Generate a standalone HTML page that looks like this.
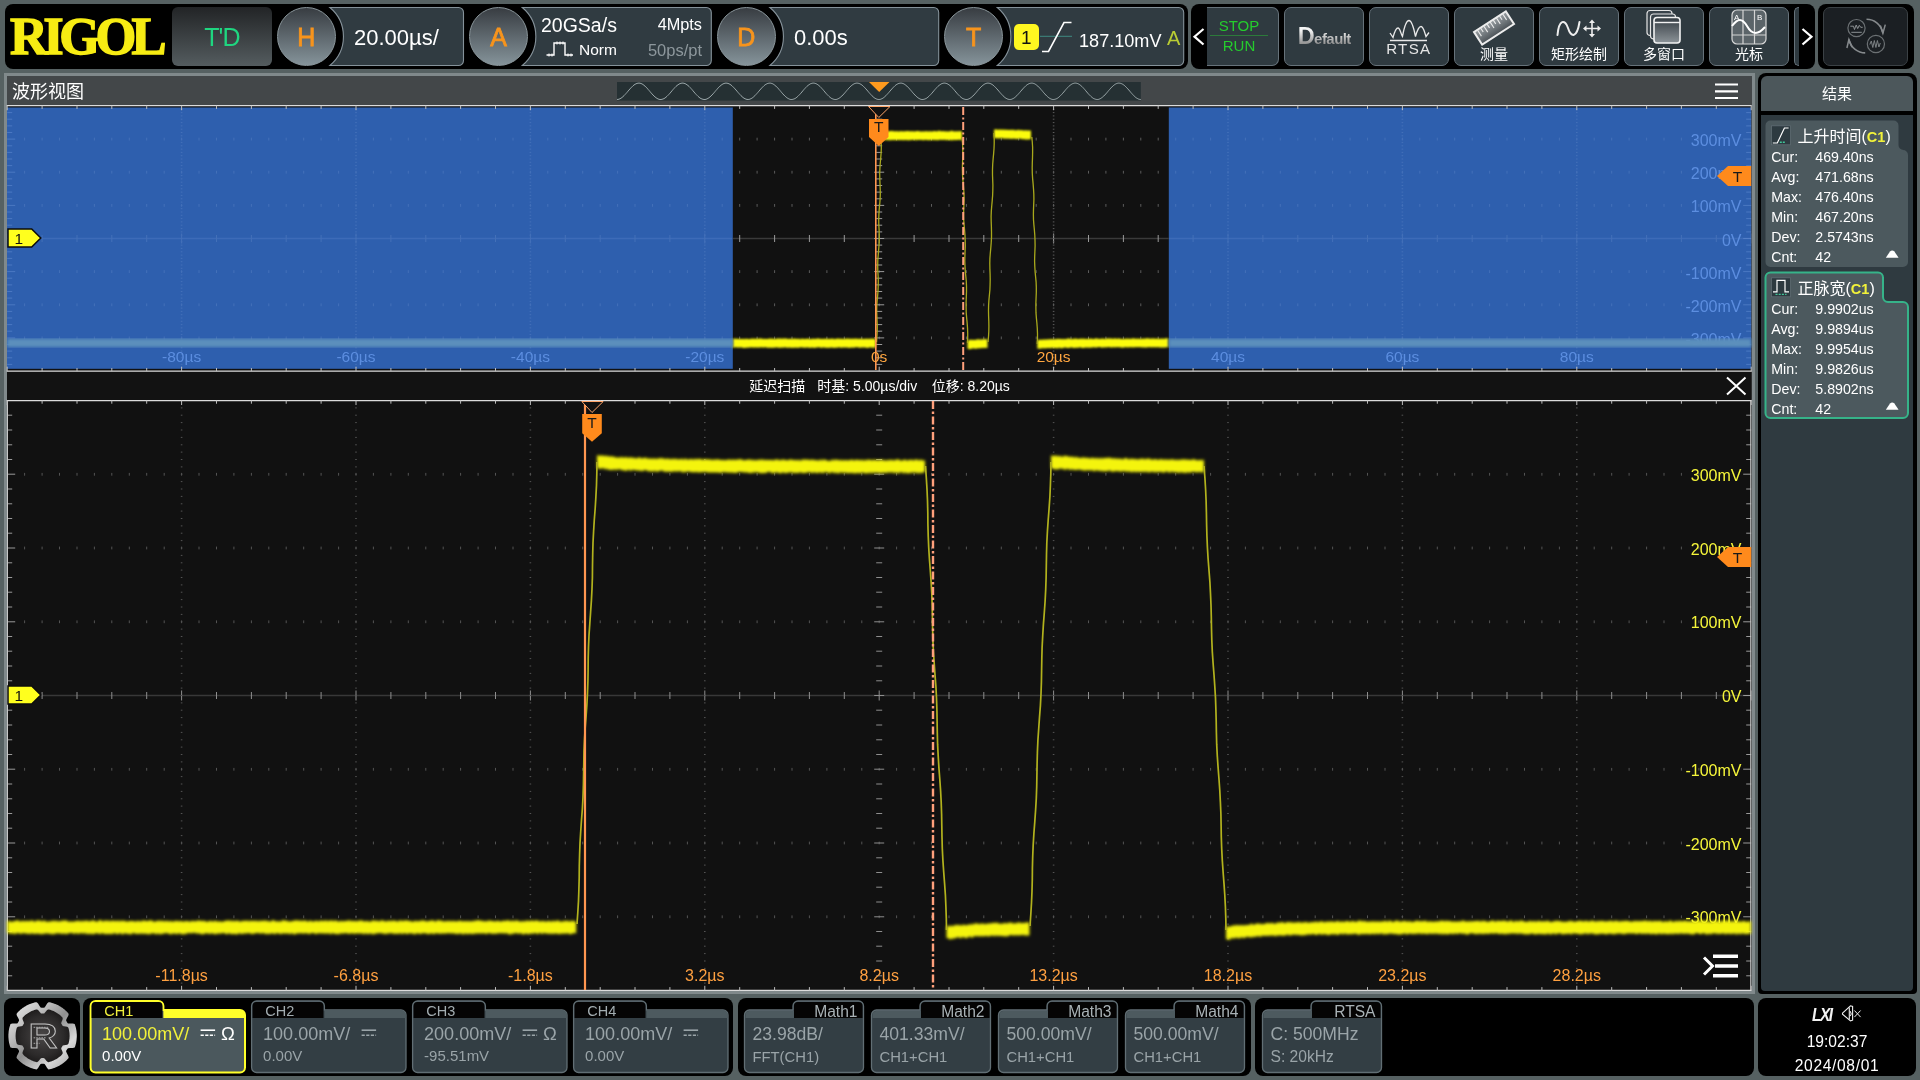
<!DOCTYPE html><html><head><meta charset="utf-8"><title>RIGOL</title><style>
*{box-sizing:border-box;margin:0;padding:0}
html,body{width:1920px;height:1080px;overflow:hidden;background:#566162;font-family:"Liberation Sans", "Noto Sans CJK SC", sans-serif;color:#fff}
.abs{position:absolute}
.bar{position:absolute;background:#000;border-radius:8px}
.knob{position:absolute;width:59px;height:59px;border-radius:50%;top:7px;background:linear-gradient(#383d42,#85939a);border:1px solid #8b979c;color:#f7941d;font-size:25px;line-height:59px;text-align:center;-webkit-text-stroke:0.8px #f7941d}
.tbtn{position:absolute;top:7px;height:59px;width:79.6px;background:#2f3a40;border:1px solid #66727a;border-radius:7px}
.tbtn .lbl{position:absolute;left:0;right:0;top:36px;text-align:center;font-size:14px;line-height:20px;color:#fff}
.t{position:absolute;white-space:nowrap;line-height:1}
.card{position:absolute}
</style></head><body><div id="root" style="position:absolute;left:0;top:0;width:1920px;height:1080px;will-change:transform"><div class="bar" style="left:4.5px;top:4px;width:1183px;height:64.5px"></div>
<div class="bar" style="left:1191px;top:4px;width:624px;height:64.5px"></div>
<div class="bar" style="left:1818px;top:4px;width:95.5px;height:64.5px"></div>
<div class="t" style="left:10px;top:10px;font-family:'Liberation Serif',serif;font-weight:bold;font-size:52.5px;color:#f7ec13;letter-spacing:-4.6px;-webkit-text-stroke:1.4px #f7ec13">RIGOL</div>
<div class="abs" style="left:172px;top:7px;width:100px;height:59px;border-radius:6px;background:linear-gradient(#222426,#545c5f)"></div>
<div class="t" style="left:172px;width:100px;text-align:center;top:24.5px;font-size:25px;color:#1fd680;letter-spacing:-0.8px">T'D</div>
<svg class="abs" style="left:0;top:0" width="1920" height="72"><path d="M329.9,7.5 H458.5 a5,5 0 0 1 5,5 V60.5 a5,5 0 0 1 -5,5 H329.9 A37.8 37.8 0 0 0 329.9 7.5 Z" fill="#303b41" stroke="#85929a" stroke-width="1.1"/><path d="M522.3,7.5 H706.3 a5,5 0 0 1 5,5 V60.5 a5,5 0 0 1 -5,5 H522.3 A37.8 37.8 0 0 0 522.3 7.5 Z" fill="#303b41" stroke="#85929a" stroke-width="1.1"/><path d="M769.9,7.5 H933.7 a5,5 0 0 1 5,5 V60.5 a5,5 0 0 1 -5,5 H769.9 A37.8 37.8 0 0 0 769.9 7.5 Z" fill="#303b41" stroke="#85929a" stroke-width="1.1"/><path d="M997.3,7.5 H1178.7 a5,5 0 0 1 5,5 V60.5 a5,5 0 0 1 -5,5 H997.3 A37.8 37.8 0 0 0 997.3 7.5 Z" fill="#303b41" stroke="#85929a" stroke-width="1.1"/></svg>
<div class="knob" style="left:276.8px">H</div>
<div class="knob" style="left:469.2px">A</div>
<div class="knob" style="left:716.8px">D</div>
<div class="knob" style="left:944.2px">T</div>
<div class="t" style="left:354px;top:27px;font-size:22px">20.00µs/</div>
<div class="t" style="left:541px;top:15.7px;font-size:19.5px">20GSa/s</div>
<div class="t" style="left:579px;top:41.5px;font-size:15.5px">Norm</div>
<div class="t" style="left:630px;width:72px;text-align:right;top:15.5px;font-size:16.3px">4Mpts</div>
<div class="t" style="left:620px;width:82px;text-align:right;top:41.5px;font-size:16.5px;color:#8d979c">50ps/pt</div>
<svg class="abs" style="left:544px;top:40px" width="34" height="20"><path d="M2.5,15 H10 V3 H21 V15 H29" fill="none" stroke="#fff" stroke-width="1.4"/><path d="M5,13.5v3M8,13.5v3M13,1.5v3M16,1.5v3M19,1.5v3M24,13.5v3M27,13.5v3" stroke="#fff" stroke-width="1"/></svg>
<div class="t" style="left:794px;top:27px;font-size:22px">0.00s</div>
<div class="abs" style="left:1013.5px;top:23.5px;width:25.5px;height:26px;border-radius:5px;background:#fff720"></div>
<div class="t" style="left:1013.5px;width:25.5px;text-align:center;top:27.5px;font-size:19px;color:#111">1</div>
<svg class="abs" style="left:1040px;top:18px" width="36" height="38"><path d="M0,18.3H32" stroke="#3f8a80" stroke-width="1"/><path d="M2,33.5 H8.5 L24,4.5 H31.5" fill="none" stroke="#fff" stroke-width="1.6"/></svg>
<div class="t" style="left:1079px;top:32px;font-size:18.1px">187.10mV</div>
<div class="t" style="left:1167px;top:28px;font-size:20px;color:#b9cc33">A</div>
<svg class="abs" style="left:1192px;top:26px" width="14" height="22"><path d="M11.5,3 L2.5,10.7 L11.5,18.5" fill="none" stroke="#fff" stroke-width="2.2"/></svg>
<div class="abs" style="left:1206.5px;top:7px;width:72.5px;height:59px;background:#2f3a40;border:1px solid #66727a;border-left:none;border-radius:0 7px 7px 0"></div>
<div class="t" style="left:1206.5px;width:65px;text-align:center;top:17.5px;font-size:15px;color:#25cc2d">STOP</div>
<div class="t" style="left:1206.5px;width:65px;text-align:center;top:37.5px;font-size:15px;color:#25cc2d">RUN</div>
<div class="abs" style="left:1210px;top:35px;width:58px;height:1px;background:#2c7a3a"></div>
<div class="tbtn" style="left:1284.2px"></div>
<div class="t" style="left:1297.7px;top:22px;font-weight:bold;font-size:15px;letter-spacing:-0.55px;background:linear-gradient(#f4f4f4 30%,#8d8d8d 80%);-webkit-background-clip:text;background-clip:text;color:transparent;height:28px;line-height:28px"><span style="font-size:23.5px">D</span>efault</div>
<div class="tbtn" style="left:1369.2px"></div>
<svg class="abs" style="left:1387.2px;top:16px" width="46" height="28"><path d="M3,17 L6,21.5 C8,14 9.5,12 11,12 C13,12 14,18 15.5,20.5 C17,12 19,4.5 22,4.5 C25,4.5 27,13 28.5,20.5 C30,15 32,10.5 34,10.5 C36.5,10.5 37.5,16 39,20.5 L42,16.5" fill="none" stroke="#e8e8e8" stroke-width="1.3"/><path d="M3,24.5H40" stroke="#e8e8e8" stroke-width="1.3"/></svg>
<div class="t" style="left:1369.2px;width:79.6px;text-align:center;top:41.5px;font-size:14px;letter-spacing:1.2px;color:#e6e6e6;transform:scaleX(1.08)">RTSA</div>
<div class="tbtn" style="left:1454.2px"><div class="lbl">测量</div></div>
<svg class="abs" style="left:1468.2px;top:8px" width="52" height="40"><defs><linearGradient id="rg" x1="0" y1="0" x2="0" y2="1"><stop offset="0" stop-color="#9aa0a4"/><stop offset="1" stop-color="#4a5156"/></linearGradient></defs><g transform="translate(26,20) rotate(-33)"><rect x="-19" y="-7.5" width="38" height="15" fill="url(#rg)" stroke="#ececec" stroke-width="2"/><path d="M-15,-7v7M-11.2,-7v4.5M-7.5,-7v7M-3.7,-7v4.5M0,-7v7M3.7,-7v4.5M7.5,-7v7M11.2,-7v4.5M15,-7v7" stroke="#ececec" stroke-width="1.1"/></g></svg>
<div class="tbtn" style="left:1539.2px"><div class="lbl">矩形绘制</div></div>
<svg class="abs" style="left:1553.2px;top:14px" width="54" height="28"><path d="M4.5,21 C6,5 12,5 15,14 C18,24 24,24 26.5,8" fill="none" stroke="#eee" stroke-width="2" stroke-linecap="round"/><g stroke="#eee" stroke-width="1.6" fill="#eee"><path d="M39,8V21M32.5,14.5H45.5" fill="none"/><path d="M39,5.5l3,3.5h-6zM39,23.5l3,-3.5h-6zM30,14.5l3.5,-3v6zM48,14.5l-3.5,-3v6z" stroke="none"/></g></svg>
<div class="tbtn" style="left:1624.2px"><div class="lbl">多窗口</div></div>
<svg class="abs" style="left:1644.2px;top:8px" width="40" height="38"><defs><linearGradient id="wg" x1="0" y1="0" x2="0" y2="1"><stop offset="0" stop-color="#343c42"/><stop offset="1" stop-color="#8c9398"/></linearGradient></defs><rect x="3" y="2.5" width="25" height="25" rx="3" fill="#39434a" stroke="#e6e6e6" stroke-width="1.2"/><rect x="6.5" y="6" width="25" height="25" rx="3" fill="#39434a" stroke="#e6e6e6" stroke-width="1.2"/><rect x="10" y="9.5" width="26" height="25.5" rx="3" fill="url(#wg)" stroke="#f2f2f2" stroke-width="1.6"/><path d="M10,14.5H36" stroke="#f2f2f2" stroke-width="1.4"/></svg>
<div class="tbtn" style="left:1709.2px"><div class="lbl">光标</div></div>
<svg class="abs" style="left:1730.2px;top:8px" width="40" height="38"><rect x="2" y="2" width="34" height="34" rx="5" fill="#5b6469" stroke="#d9d9d9" stroke-width="1.2"/><path d="M13,2V36M24.5,2V36M2,27H36" stroke="#d4d4d4" stroke-width="1.2"/><path d="M2,18 C8,10 12,10 17,18 C22,27 28,27 35,19" fill="none" stroke="#fff" stroke-width="2"/><text x="4" y="11.5" font-size="8" fill="#fff" font-family="Liberation Sans, sans-serif">A</text><text x="27" y="11.5" font-size="8" fill="#fff" font-family="Liberation Sans, sans-serif">B</text></svg>
<div class="abs" style="left:1794.2px;top:7px;width:5px;height:59px;background:#2f3a40;border:1px solid #66727a;border-right:none;border-radius:7px 0 0 7px"></div>
<svg class="abs" style="left:1800px;top:26px" width="14" height="22"><path d="M2.5,3 L11.5,10.7 L2.5,18.5" fill="none" stroke="#fff" stroke-width="2.2"/></svg>
<div class="abs" style="left:1822.7px;top:7px;width:85.6px;height:59px;background:#1b1f23;border:1px solid #3b4145;border-radius:7px"></div>
<svg class="abs" style="left:1840px;top:14px" width="52" height="46" fill="none" stroke="#6c7174" stroke-width="1.2"><circle cx="16.5" cy="14.1" r="8.6"/><circle cx="35.9" cy="30" r="8.6"/><path d="M10.3,12.2h3.2l1,3.3 1.7,-4.5 1.5,3.6 1.6,-3.3 1.4,2h2M11.3,18.3h10.5" stroke-width="1" stroke="#8d9194"/><path d="M29.8,30.5l1.5,-3.5 1.5,6.5 1.5,-7 1.6,7 1.5,-7 1.5,6.5 1.4,-4" stroke-width="1" stroke="#7d8285"/><path d="M26.5,5.3 C34,5.3 41,10 43,19.3" stroke-width="1.6" stroke="#868a8d"/><path d="M40.3,11.6l2.6,7.7 2.4,-8.7" stroke-width="1.5" stroke="#868a8d"/><path d="M25.2,38.9 C18,38.9 11,34 8.7,25.5" stroke-width="1.6" stroke="#868a8d"/><path d="M6.9,34l2,-8.5 3.1,7.6" stroke-width="1.5" stroke="#868a8d"/></svg>
<div class="abs" style="left:3.6px;top:72.8px;width:1751px;height:921.7px;background:#80898b"></div>
<div class="abs" style="left:7px;top:76px;width:1744.5px;height:30px;background:#434749"></div>
<div class="t" style="left:12px;top:83px;font-size:18px;color:#fff">波形视图</div>
<svg class="abs" style="left:0;top:70px" width="1920" height="40" viewBox="0 70 1920 40"><rect x="617" y="82" width="523.8" height="18.6" fill="#253033"/><polyline points="617.0,99.5 618.0,99.4 619.0,99.2 620.0,98.7 621.0,98.2 622.0,97.5 623.0,96.6 624.0,95.7 625.0,94.6 626.0,93.5 627.0,92.4 628.0,91.2 629.0,90.0 630.0,88.9 631.0,87.8 632.0,86.8 633.0,85.8 634.0,85.0 635.0,84.3 636.0,83.8 637.0,83.4 638.0,83.2 639.0,83.1 640.0,83.2 641.0,83.5 642.0,83.9 643.0,84.5 644.0,85.3 645.0,86.1 646.0,87.1 647.0,88.1 648.0,89.3 649.0,90.4 650.0,91.6 651.0,92.8 652.0,93.9 653.0,95.0 654.0,96.0 655.0,96.9 656.0,97.7 657.0,98.4 658.0,98.9 659.0,99.3 660.0,99.5 661.0,99.5 662.0,99.3 663.0,99.0 664.0,98.6 665.0,98.0 666.0,97.2 667.0,96.3 668.0,95.3 669.0,94.3 670.0,93.2 671.0,92.0 672.0,90.8 673.0,89.6 674.0,88.5 675.0,87.4 676.0,86.4 677.0,85.5 678.0,84.8 679.0,84.1 680.0,83.6 681.0,83.3 682.0,83.1 683.0,83.1 684.0,83.3 685.0,83.6 686.0,84.1 687.0,84.8 688.0,85.5 689.0,86.4 690.0,87.4 691.0,88.5 692.0,89.6 693.0,90.8 694.0,92.0 695.0,93.2 696.0,94.3 697.0,95.3 698.0,96.3 699.0,97.2 700.0,98.0 701.0,98.6 702.0,99.0 703.0,99.3 704.0,99.5 705.0,99.5 706.0,99.3 707.0,98.9 708.0,98.4 709.0,97.7 710.0,96.9 711.0,96.0 712.0,95.0 713.0,93.9 714.0,92.8 715.0,91.6 716.0,90.4 717.0,89.3 718.0,88.1 719.0,87.1 720.0,86.1 721.0,85.3 722.0,84.5 723.0,83.9 724.0,83.5 725.0,83.2 726.0,83.1 727.0,83.2 728.0,83.4 729.0,83.8 730.0,84.3 731.0,85.0 732.0,85.8 733.0,86.8 734.0,87.8 735.0,88.9 736.0,90.0 737.0,91.2 738.0,92.4 739.0,93.5 740.0,94.6 741.0,95.7 742.0,96.6 743.0,97.5 744.0,98.2 745.0,98.7 746.0,99.2 747.0,99.4 748.0,99.5 748.9,99.4 749.9,99.2 750.9,98.7 751.9,98.2 752.9,97.5 753.9,96.6 754.9,95.7 755.9,94.6 756.9,93.5 757.9,92.4 758.9,91.2 759.9,90.0 760.9,88.9 761.9,87.8 762.9,86.8 763.9,85.8 764.9,85.0 765.9,84.3 766.9,83.8 767.9,83.4 768.9,83.2 769.9,83.1 770.9,83.2 771.9,83.5 772.9,83.9 773.9,84.5 774.9,85.3 775.9,86.1 776.9,87.1 777.9,88.1 778.9,89.3 779.9,90.4 780.9,91.6 781.9,92.8 782.9,93.9 783.9,95.0 784.9,96.0 785.9,96.9 786.9,97.7 787.9,98.4 788.9,98.9 789.9,99.3 790.9,99.5 791.9,99.5 792.9,99.3 793.9,99.0 794.9,98.6 795.9,98.0 796.9,97.2 797.9,96.3 798.9,95.3 799.9,94.3 800.9,93.2 801.9,92.0 802.9,90.8 803.9,89.6 804.9,88.5 805.9,87.4 806.9,86.4 807.9,85.5 808.9,84.8 809.9,84.1 810.9,83.6 811.9,83.3 812.9,83.1 813.9,83.1 814.9,83.3 815.9,83.6 816.9,84.1 817.9,84.8 818.9,85.5 819.9,86.4 820.9,87.4 821.9,88.5 822.9,89.6 823.9,90.8 824.9,92.0 825.9,93.2 826.9,94.3 827.9,95.3 828.9,96.3 829.9,97.2 830.9,98.0 831.9,98.6 832.9,99.0 833.9,99.3 834.9,99.5 835.9,99.5 836.9,99.3 837.9,98.9 838.9,98.4 839.9,97.7 840.9,96.9 841.9,96.0 842.9,95.0 843.9,93.9 844.9,92.8 845.9,91.6 846.9,90.4 847.9,89.3 848.9,88.1 849.9,87.1 850.9,86.1 851.9,85.3 852.9,84.5 853.9,83.9 854.9,83.5 855.9,83.2 856.9,83.1 857.9,83.2 858.9,83.4 859.9,83.8 860.9,84.3 861.9,85.0 862.9,85.8 863.9,86.8 864.9,87.8 865.9,88.9 866.9,90.0 867.9,91.2 868.9,92.4 869.9,93.5 870.9,94.6 871.9,95.7 872.9,96.6 873.9,97.5 874.9,98.2 875.9,98.7 876.9,99.2 877.9,99.4 878.9,99.5 879.9,99.4 880.9,99.2 881.9,98.7 882.9,98.2 883.9,97.5 884.9,96.6 885.9,95.7 886.9,94.6 887.9,93.5 888.9,92.4 889.9,91.2 890.9,90.0 891.9,88.9 892.9,87.8 893.9,86.8 894.9,85.8 895.9,85.0 896.9,84.3 897.9,83.8 898.9,83.4 899.9,83.2 900.9,83.1 901.9,83.2 902.9,83.5 903.9,83.9 904.9,84.5 905.9,85.3 906.9,86.1 907.9,87.1 908.9,88.1 909.9,89.3 910.9,90.4 911.9,91.6 912.9,92.8 913.9,93.9 914.9,95.0 915.9,96.0 916.9,96.9 917.9,97.7 918.9,98.4 919.9,98.9 920.9,99.3 921.9,99.5 922.9,99.5 923.9,99.3 924.9,99.0 925.9,98.6 926.9,98.0 927.9,97.2 928.9,96.3 929.9,95.3 930.9,94.3 931.9,93.2 932.9,92.0 933.9,90.8 934.9,89.6 935.9,88.5 936.9,87.4 937.9,86.4 938.9,85.5 939.9,84.8 940.9,84.1 941.9,83.6 942.9,83.3 943.9,83.1 944.9,83.1 945.9,83.3 946.9,83.6 947.9,84.1 948.9,84.8 949.9,85.5 950.9,86.4 951.9,87.4 952.9,88.5 953.9,89.6 954.9,90.8 955.9,92.0 956.9,93.2 957.9,94.3 958.9,95.3 959.9,96.3 960.9,97.2 961.9,98.0 962.9,98.6 963.9,99.0 964.9,99.3 965.9,99.5 966.9,99.5 967.9,99.3 968.9,98.9 969.9,98.4 970.9,97.7 971.9,96.9 972.9,96.0 973.9,95.0 974.9,93.9 975.9,92.8 976.9,91.6 977.9,90.4 978.9,89.3 979.9,88.1 980.9,87.1 981.9,86.1 982.9,85.3 983.9,84.5 984.9,83.9 985.9,83.5 986.9,83.2 987.9,83.1 988.9,83.2 989.9,83.4 990.9,83.8 991.9,84.3 992.9,85.0 993.9,85.8 994.9,86.8 995.9,87.8 996.9,88.9 997.9,90.0 998.9,91.2 999.9,92.4 1000.9,93.5 1001.9,94.6 1002.9,95.7 1003.9,96.6 1004.9,97.5 1005.9,98.2 1006.9,98.7 1007.9,99.2 1008.9,99.4 1009.8,99.5 1010.8,99.4 1011.8,99.2 1012.8,98.7 1013.8,98.2 1014.8,97.5 1015.8,96.6 1016.8,95.7 1017.8,94.6 1018.8,93.5 1019.8,92.4 1020.8,91.2 1021.8,90.0 1022.8,88.9 1023.8,87.8 1024.8,86.8 1025.8,85.8 1026.8,85.0 1027.8,84.3 1028.8,83.8 1029.8,83.4 1030.8,83.2 1031.8,83.1 1032.8,83.2 1033.8,83.5 1034.8,83.9 1035.8,84.5 1036.8,85.3 1037.8,86.1 1038.8,87.1 1039.8,88.1 1040.8,89.3 1041.8,90.4 1042.8,91.6 1043.8,92.8 1044.8,93.9 1045.8,95.0 1046.8,96.0 1047.8,96.9 1048.8,97.7 1049.8,98.4 1050.8,98.9 1051.8,99.3 1052.8,99.5 1053.8,99.5 1054.8,99.3 1055.8,99.0 1056.8,98.6 1057.8,98.0 1058.8,97.2 1059.8,96.3 1060.8,95.3 1061.8,94.3 1062.8,93.2 1063.8,92.0 1064.8,90.8 1065.8,89.6 1066.8,88.5 1067.8,87.4 1068.8,86.4 1069.8,85.5 1070.8,84.8 1071.8,84.1 1072.8,83.6 1073.8,83.3 1074.8,83.1 1075.8,83.1 1076.8,83.3 1077.8,83.6 1078.8,84.1 1079.8,84.8 1080.8,85.5 1081.8,86.4 1082.8,87.4 1083.8,88.5 1084.8,89.6 1085.8,90.8 1086.8,92.0 1087.8,93.2 1088.8,94.3 1089.8,95.3 1090.8,96.3 1091.8,97.2 1092.8,98.0 1093.8,98.6 1094.8,99.0 1095.8,99.3 1096.8,99.5 1097.8,99.5 1098.8,99.3 1099.8,98.9 1100.8,98.4 1101.8,97.7 1102.8,96.9 1103.8,96.0 1104.8,95.0 1105.8,93.9 1106.8,92.8 1107.8,91.6 1108.8,90.4 1109.8,89.3 1110.8,88.1 1111.8,87.1 1112.8,86.1 1113.8,85.3 1114.8,84.5 1115.8,83.9 1116.8,83.5 1117.8,83.2 1118.8,83.1 1119.8,83.2 1120.8,83.4 1121.8,83.8 1122.8,84.3 1123.8,85.0 1124.8,85.8 1125.8,86.8 1126.8,87.8 1127.8,88.9 1128.8,90.0 1129.8,91.2 1130.8,92.4 1131.8,93.5 1132.8,94.6 1133.8,95.7 1134.8,96.6 1135.8,97.5 1136.8,98.2 1137.8,98.7 1138.8,99.2 1139.8,99.4 1140.8,99.5" fill="none" stroke="#9ba7a9" stroke-width="1"/><path d="M869,82 H889.5 L879.2,92 Z" fill="#ff9a1e"/><path d="M1715,84.5h23M1715,91.3h23M1715,98h23" stroke="#fff" stroke-width="2.2"/></svg>
<svg class="abs" style="left:0;top:100px;font-family:'Liberation Sans','Noto Sans CJK SC',sans-serif" width="1760" height="896" viewBox="0 100 1760 896"><defs><filter id="blur1" x="-1%" y="-5%" width="102%" height="110%"><feGaussianBlur stdDeviation="1.5"/></filter><filter id="blur03" x="-20%" y="-5%" width="140%" height="110%"><feGaussianBlur stdDeviation="0.45"/></filter><filter id="blur05" x="-1%" y="-5%" width="102%" height="110%"><feGaussianBlur stdDeviation="0.85"/></filter></defs><rect x="7" y="105" width="1744.5" height="886" fill="#111"/><rect x="7" y="107.5" width="725.8" height="261.3" fill="#2e5fae"/><rect x="1168.8" y="107.5" width="582.4000000000001" height="261.3" fill="#2e5fae"/><path d="M739.7,137.7v2.8M757.1,137.7v2.8M774.6,137.7v2.8M792.0,137.7v2.8M809.4,137.7v2.8M826.9,137.7v2.8M844.3,137.7v2.8M861.8,137.7v2.8M879.2,137.7v2.8M896.6,137.7v2.8M914.1,137.7v2.8M931.5,137.7v2.8M949.0,137.7v2.8M966.4,137.7v2.8M983.8,137.7v2.8M1001.3,137.7v2.8M1018.7,137.7v2.8M1036.2,137.7v2.8M1053.6,137.7v2.8M1071.0,137.7v2.8M1088.5,137.7v2.8M1105.9,137.7v2.8M1123.4,137.7v2.8M1140.8,137.7v2.8M1158.2,137.7v2.8" stroke="#5c5c5c" stroke-width="1"/><path d="M739.7,170.8v2.8M757.1,170.8v2.8M774.6,170.8v2.8M792.0,170.8v2.8M809.4,170.8v2.8M826.9,170.8v2.8M844.3,170.8v2.8M861.8,170.8v2.8M879.2,170.8v2.8M896.6,170.8v2.8M914.1,170.8v2.8M931.5,170.8v2.8M949.0,170.8v2.8M966.4,170.8v2.8M983.8,170.8v2.8M1001.3,170.8v2.8M1018.7,170.8v2.8M1036.2,170.8v2.8M1053.6,170.8v2.8M1071.0,170.8v2.8M1088.5,170.8v2.8M1105.9,170.8v2.8M1123.4,170.8v2.8M1140.8,170.8v2.8M1158.2,170.8v2.8" stroke="#5c5c5c" stroke-width="1"/><path d="M739.7,204.0v2.8M757.1,204.0v2.8M774.6,204.0v2.8M792.0,204.0v2.8M809.4,204.0v2.8M826.9,204.0v2.8M844.3,204.0v2.8M861.8,204.0v2.8M879.2,204.0v2.8M896.6,204.0v2.8M914.1,204.0v2.8M931.5,204.0v2.8M949.0,204.0v2.8M966.4,204.0v2.8M983.8,204.0v2.8M1001.3,204.0v2.8M1018.7,204.0v2.8M1036.2,204.0v2.8M1053.6,204.0v2.8M1071.0,204.0v2.8M1088.5,204.0v2.8M1105.9,204.0v2.8M1123.4,204.0v2.8M1140.8,204.0v2.8M1158.2,204.0v2.8" stroke="#5c5c5c" stroke-width="1"/><path d="M732.8,238.5H1168.8" stroke="#3a3a3a" stroke-width="1.6"/><path d="M739.7,235.0v7.0M774.6,235.0v7.0M809.4,235.0v7.0M844.3,235.0v7.0M879.2,233.5v10M914.1,235.0v7.0M949.0,235.0v7.0M983.8,235.0v7.0M1018.7,235.0v7.0M1053.6,233.5v10M1088.5,235.0v7.0M1123.4,235.0v7.0M1158.2,235.0v7.0" stroke="#9a9a9a" stroke-width="1"/><path d="M739.7,270.2v2.8M757.1,270.2v2.8M774.6,270.2v2.8M792.0,270.2v2.8M809.4,270.2v2.8M826.9,270.2v2.8M844.3,270.2v2.8M861.8,270.2v2.8M879.2,270.2v2.8M896.6,270.2v2.8M914.1,270.2v2.8M931.5,270.2v2.8M949.0,270.2v2.8M966.4,270.2v2.8M983.8,270.2v2.8M1001.3,270.2v2.8M1018.7,270.2v2.8M1036.2,270.2v2.8M1053.6,270.2v2.8M1071.0,270.2v2.8M1088.5,270.2v2.8M1105.9,270.2v2.8M1123.4,270.2v2.8M1140.8,270.2v2.8M1158.2,270.2v2.8" stroke="#5c5c5c" stroke-width="1"/><path d="M739.7,303.4v2.8M757.1,303.4v2.8M774.6,303.4v2.8M792.0,303.4v2.8M809.4,303.4v2.8M826.9,303.4v2.8M844.3,303.4v2.8M861.8,303.4v2.8M879.2,303.4v2.8M896.6,303.4v2.8M914.1,303.4v2.8M931.5,303.4v2.8M949.0,303.4v2.8M966.4,303.4v2.8M983.8,303.4v2.8M1001.3,303.4v2.8M1018.7,303.4v2.8M1036.2,303.4v2.8M1053.6,303.4v2.8M1071.0,303.4v2.8M1088.5,303.4v2.8M1105.9,303.4v2.8M1123.4,303.4v2.8M1140.8,303.4v2.8M1158.2,303.4v2.8" stroke="#5c5c5c" stroke-width="1"/><path d="M739.7,336.5v2.8M757.1,336.5v2.8M774.6,336.5v2.8M792.0,336.5v2.8M809.4,336.5v2.8M826.9,336.5v2.8M844.3,336.5v2.8M861.8,336.5v2.8M879.2,336.5v2.8M896.6,336.5v2.8M914.1,336.5v2.8M931.5,336.5v2.8M949.0,336.5v2.8M966.4,336.5v2.8M983.8,336.5v2.8M1001.3,336.5v2.8M1018.7,336.5v2.8M1036.2,336.5v2.8M1053.6,336.5v2.8M1071.0,336.5v2.8M1088.5,336.5v2.8M1105.9,336.5v2.8M1123.4,336.5v2.8M1140.8,336.5v2.8M1158.2,336.5v2.8" stroke="#5c5c5c" stroke-width="1"/><path d="M876.2,112.6h6M876.2,119.2h6M876.2,125.9h6M876.2,132.5h6M874.2,139.1h10M876.2,145.8h6M876.2,152.4h6M876.2,159.0h6M876.2,165.6h6M874.2,172.2h10M876.2,178.9h6M876.2,185.5h6M876.2,192.1h6M876.2,198.8h6M874.2,205.4h10M876.2,212.0h6M876.2,218.6h6M876.2,225.2h6M876.2,231.9h6M874.2,238.5h10M876.2,245.1h6M876.2,251.8h6M876.2,258.4h6M876.2,265.0h6M874.2,271.6h10M876.2,278.2h6M876.2,284.9h6M876.2,291.5h6M876.2,298.1h6M874.2,304.8h10M876.2,311.4h6M876.2,318.0h6M876.2,324.6h6M876.2,331.2h6M874.2,337.9h10M876.2,344.5h6M876.2,351.1h6M876.2,357.8h6M876.2,364.4h6" stroke="#9a9a9a" stroke-width="1"/><path d="M1052.8,109.3h1.6M1052.8,112.6h1.6M1052.8,115.9h1.6M1052.8,119.2h1.6M1052.8,122.6h1.6M1052.8,125.9h1.6M1052.8,129.2h1.6M1052.8,132.5h1.6M1052.8,135.8h1.6M1052.8,139.1h1.6M1052.8,142.4h1.6M1052.8,145.8h1.6M1052.8,149.1h1.6M1052.8,152.4h1.6M1052.8,155.7h1.6M1052.8,159.0h1.6M1052.8,162.3h1.6M1052.8,165.6h1.6M1052.8,168.9h1.6M1052.8,172.2h1.6M1052.8,175.6h1.6M1052.8,178.9h1.6M1052.8,182.2h1.6M1052.8,185.5h1.6M1052.8,188.8h1.6M1052.8,192.1h1.6M1052.8,195.4h1.6M1052.8,198.8h1.6M1052.8,202.1h1.6M1052.8,205.4h1.6M1052.8,208.7h1.6M1052.8,212.0h1.6M1052.8,215.3h1.6M1052.8,218.6h1.6M1052.8,221.9h1.6M1052.8,225.2h1.6M1052.8,228.6h1.6M1052.8,231.9h1.6M1052.8,235.2h1.6M1052.8,238.5h1.6M1052.8,241.8h1.6M1052.8,245.1h1.6M1052.8,248.4h1.6M1052.8,251.8h1.6M1052.8,255.1h1.6M1052.8,258.4h1.6M1052.8,261.7h1.6M1052.8,265.0h1.6M1052.8,268.3h1.6M1052.8,271.6h1.6M1052.8,274.9h1.6M1052.8,278.2h1.6M1052.8,281.6h1.6M1052.8,284.9h1.6M1052.8,288.2h1.6M1052.8,291.5h1.6M1052.8,294.8h1.6M1052.8,298.1h1.6M1052.8,301.4h1.6M1052.8,304.8h1.6M1052.8,308.1h1.6M1052.8,311.4h1.6M1052.8,314.7h1.6M1052.8,318.0h1.6M1052.8,321.3h1.6M1052.8,324.6h1.6M1052.8,327.9h1.6M1052.8,331.2h1.6M1052.8,334.6h1.6M1052.8,337.9h1.6M1052.8,341.2h1.6M1052.8,344.5h1.6M1052.8,347.8h1.6M1052.8,351.1h1.6M1052.8,354.4h1.6M1052.8,357.8h1.6M1052.8,361.1h1.6M1052.8,364.4h1.6M1052.8,367.7h1.6" stroke="#5c5c5c" stroke-width="1"/><g opacity="0.13"><path d="M24.6,137.7v2.8M42.1,137.7v2.8M59.5,137.7v2.8M77.0,137.7v2.8M94.4,137.7v2.8M111.8,137.7v2.8M129.3,137.7v2.8M146.7,137.7v2.8M164.2,137.7v2.8M181.6,137.7v2.8M199.0,137.7v2.8M216.5,137.7v2.8M233.9,137.7v2.8M251.4,137.7v2.8M268.8,137.7v2.8M286.2,137.7v2.8M303.7,137.7v2.8M321.1,137.7v2.8M338.6,137.7v2.8M356.0,137.7v2.8M373.4,137.7v2.8M390.9,137.7v2.8M408.3,137.7v2.8M425.8,137.7v2.8M443.2,137.7v2.8M460.6,137.7v2.8M478.1,137.7v2.8M495.5,137.7v2.8M513.0,137.7v2.8M530.4,137.7v2.8M547.8,137.7v2.8M565.3,137.7v2.8M582.7,137.7v2.8M600.2,137.7v2.8M617.6,137.7v2.8M635.0,137.7v2.8M652.5,137.7v2.8M669.9,137.7v2.8M687.4,137.7v2.8M704.8,137.7v2.8M722.2,137.7v2.8" stroke="#cfe0ff" stroke-width="1"/><path d="M24.6,170.8v2.8M42.1,170.8v2.8M59.5,170.8v2.8M77.0,170.8v2.8M94.4,170.8v2.8M111.8,170.8v2.8M129.3,170.8v2.8M146.7,170.8v2.8M164.2,170.8v2.8M181.6,170.8v2.8M199.0,170.8v2.8M216.5,170.8v2.8M233.9,170.8v2.8M251.4,170.8v2.8M268.8,170.8v2.8M286.2,170.8v2.8M303.7,170.8v2.8M321.1,170.8v2.8M338.6,170.8v2.8M356.0,170.8v2.8M373.4,170.8v2.8M390.9,170.8v2.8M408.3,170.8v2.8M425.8,170.8v2.8M443.2,170.8v2.8M460.6,170.8v2.8M478.1,170.8v2.8M495.5,170.8v2.8M513.0,170.8v2.8M530.4,170.8v2.8M547.8,170.8v2.8M565.3,170.8v2.8M582.7,170.8v2.8M600.2,170.8v2.8M617.6,170.8v2.8M635.0,170.8v2.8M652.5,170.8v2.8M669.9,170.8v2.8M687.4,170.8v2.8M704.8,170.8v2.8M722.2,170.8v2.8" stroke="#cfe0ff" stroke-width="1"/><path d="M24.6,204.0v2.8M42.1,204.0v2.8M59.5,204.0v2.8M77.0,204.0v2.8M94.4,204.0v2.8M111.8,204.0v2.8M129.3,204.0v2.8M146.7,204.0v2.8M164.2,204.0v2.8M181.6,204.0v2.8M199.0,204.0v2.8M216.5,204.0v2.8M233.9,204.0v2.8M251.4,204.0v2.8M268.8,204.0v2.8M286.2,204.0v2.8M303.7,204.0v2.8M321.1,204.0v2.8M338.6,204.0v2.8M356.0,204.0v2.8M373.4,204.0v2.8M390.9,204.0v2.8M408.3,204.0v2.8M425.8,204.0v2.8M443.2,204.0v2.8M460.6,204.0v2.8M478.1,204.0v2.8M495.5,204.0v2.8M513.0,204.0v2.8M530.4,204.0v2.8M547.8,204.0v2.8M565.3,204.0v2.8M582.7,204.0v2.8M600.2,204.0v2.8M617.6,204.0v2.8M635.0,204.0v2.8M652.5,204.0v2.8M669.9,204.0v2.8M687.4,204.0v2.8M704.8,204.0v2.8M722.2,204.0v2.8" stroke="#cfe0ff" stroke-width="1"/><path d="M7.2,238.5H732.7" stroke="#9fc0ff" stroke-width="1.6"/><path d="M7.2,233.5v10M42.1,235.0v7.0M77.0,235.0v7.0M111.8,235.0v7.0M146.7,235.0v7.0M181.6,233.5v10M216.5,235.0v7.0M251.4,235.0v7.0M286.2,235.0v7.0M321.1,235.0v7.0M356.0,233.5v10M390.9,235.0v7.0M425.8,235.0v7.0M460.6,235.0v7.0M495.5,235.0v7.0M530.4,233.5v10M565.3,235.0v7.0M600.2,235.0v7.0M635.0,235.0v7.0M669.9,235.0v7.0M704.8,233.5v10" stroke="#cfe0ff" stroke-width="1"/><path d="M24.6,270.2v2.8M42.1,270.2v2.8M59.5,270.2v2.8M77.0,270.2v2.8M94.4,270.2v2.8M111.8,270.2v2.8M129.3,270.2v2.8M146.7,270.2v2.8M164.2,270.2v2.8M181.6,270.2v2.8M199.0,270.2v2.8M216.5,270.2v2.8M233.9,270.2v2.8M251.4,270.2v2.8M268.8,270.2v2.8M286.2,270.2v2.8M303.7,270.2v2.8M321.1,270.2v2.8M338.6,270.2v2.8M356.0,270.2v2.8M373.4,270.2v2.8M390.9,270.2v2.8M408.3,270.2v2.8M425.8,270.2v2.8M443.2,270.2v2.8M460.6,270.2v2.8M478.1,270.2v2.8M495.5,270.2v2.8M513.0,270.2v2.8M530.4,270.2v2.8M547.8,270.2v2.8M565.3,270.2v2.8M582.7,270.2v2.8M600.2,270.2v2.8M617.6,270.2v2.8M635.0,270.2v2.8M652.5,270.2v2.8M669.9,270.2v2.8M687.4,270.2v2.8M704.8,270.2v2.8M722.2,270.2v2.8" stroke="#cfe0ff" stroke-width="1"/><path d="M24.6,303.4v2.8M42.1,303.4v2.8M59.5,303.4v2.8M77.0,303.4v2.8M94.4,303.4v2.8M111.8,303.4v2.8M129.3,303.4v2.8M146.7,303.4v2.8M164.2,303.4v2.8M181.6,303.4v2.8M199.0,303.4v2.8M216.5,303.4v2.8M233.9,303.4v2.8M251.4,303.4v2.8M268.8,303.4v2.8M286.2,303.4v2.8M303.7,303.4v2.8M321.1,303.4v2.8M338.6,303.4v2.8M356.0,303.4v2.8M373.4,303.4v2.8M390.9,303.4v2.8M408.3,303.4v2.8M425.8,303.4v2.8M443.2,303.4v2.8M460.6,303.4v2.8M478.1,303.4v2.8M495.5,303.4v2.8M513.0,303.4v2.8M530.4,303.4v2.8M547.8,303.4v2.8M565.3,303.4v2.8M582.7,303.4v2.8M600.2,303.4v2.8M617.6,303.4v2.8M635.0,303.4v2.8M652.5,303.4v2.8M669.9,303.4v2.8M687.4,303.4v2.8M704.8,303.4v2.8M722.2,303.4v2.8" stroke="#cfe0ff" stroke-width="1"/><path d="M24.6,336.5v2.8M42.1,336.5v2.8M59.5,336.5v2.8M77.0,336.5v2.8M94.4,336.5v2.8M111.8,336.5v2.8M129.3,336.5v2.8M146.7,336.5v2.8M164.2,336.5v2.8M181.6,336.5v2.8M199.0,336.5v2.8M216.5,336.5v2.8M233.9,336.5v2.8M251.4,336.5v2.8M268.8,336.5v2.8M286.2,336.5v2.8M303.7,336.5v2.8M321.1,336.5v2.8M338.6,336.5v2.8M356.0,336.5v2.8M373.4,336.5v2.8M390.9,336.5v2.8M408.3,336.5v2.8M425.8,336.5v2.8M443.2,336.5v2.8M460.6,336.5v2.8M478.1,336.5v2.8M495.5,336.5v2.8M513.0,336.5v2.8M530.4,336.5v2.8M547.8,336.5v2.8M565.3,336.5v2.8M582.7,336.5v2.8M600.2,336.5v2.8M617.6,336.5v2.8M635.0,336.5v2.8M652.5,336.5v2.8M669.9,336.5v2.8M687.4,336.5v2.8M704.8,336.5v2.8M722.2,336.5v2.8" stroke="#cfe0ff" stroke-width="1"/><path d="M180.8,109.3h1.6M180.8,112.6h1.6M180.8,115.9h1.6M180.8,119.2h1.6M180.8,122.6h1.6M180.8,125.9h1.6M180.8,129.2h1.6M180.8,132.5h1.6M180.8,135.8h1.6M180.8,139.1h1.6M180.8,142.4h1.6M180.8,145.8h1.6M180.8,149.1h1.6M180.8,152.4h1.6M180.8,155.7h1.6M180.8,159.0h1.6M180.8,162.3h1.6M180.8,165.6h1.6M180.8,168.9h1.6M180.8,172.2h1.6M180.8,175.6h1.6M180.8,178.9h1.6M180.8,182.2h1.6M180.8,185.5h1.6M180.8,188.8h1.6M180.8,192.1h1.6M180.8,195.4h1.6M180.8,198.8h1.6M180.8,202.1h1.6M180.8,205.4h1.6M180.8,208.7h1.6M180.8,212.0h1.6M180.8,215.3h1.6M180.8,218.6h1.6M180.8,221.9h1.6M180.8,225.2h1.6M180.8,228.6h1.6M180.8,231.9h1.6M180.8,235.2h1.6M180.8,238.5h1.6M180.8,241.8h1.6M180.8,245.1h1.6M180.8,248.4h1.6M180.8,251.8h1.6M180.8,255.1h1.6M180.8,258.4h1.6M180.8,261.7h1.6M180.8,265.0h1.6M180.8,268.3h1.6M180.8,271.6h1.6M180.8,274.9h1.6M180.8,278.2h1.6M180.8,281.6h1.6M180.8,284.9h1.6M180.8,288.2h1.6M180.8,291.5h1.6M180.8,294.8h1.6M180.8,298.1h1.6M180.8,301.4h1.6M180.8,304.8h1.6M180.8,308.1h1.6M180.8,311.4h1.6M180.8,314.7h1.6M180.8,318.0h1.6M180.8,321.3h1.6M180.8,324.6h1.6M180.8,327.9h1.6M180.8,331.2h1.6M180.8,334.6h1.6M180.8,337.9h1.6M180.8,341.2h1.6M180.8,344.5h1.6M180.8,347.8h1.6M180.8,351.1h1.6M180.8,354.4h1.6M180.8,357.8h1.6M180.8,361.1h1.6M180.8,364.4h1.6M180.8,367.7h1.6" stroke="#cfe0ff" stroke-width="1"/><path d="M355.2,109.3h1.6M355.2,112.6h1.6M355.2,115.9h1.6M355.2,119.2h1.6M355.2,122.6h1.6M355.2,125.9h1.6M355.2,129.2h1.6M355.2,132.5h1.6M355.2,135.8h1.6M355.2,139.1h1.6M355.2,142.4h1.6M355.2,145.8h1.6M355.2,149.1h1.6M355.2,152.4h1.6M355.2,155.7h1.6M355.2,159.0h1.6M355.2,162.3h1.6M355.2,165.6h1.6M355.2,168.9h1.6M355.2,172.2h1.6M355.2,175.6h1.6M355.2,178.9h1.6M355.2,182.2h1.6M355.2,185.5h1.6M355.2,188.8h1.6M355.2,192.1h1.6M355.2,195.4h1.6M355.2,198.8h1.6M355.2,202.1h1.6M355.2,205.4h1.6M355.2,208.7h1.6M355.2,212.0h1.6M355.2,215.3h1.6M355.2,218.6h1.6M355.2,221.9h1.6M355.2,225.2h1.6M355.2,228.6h1.6M355.2,231.9h1.6M355.2,235.2h1.6M355.2,238.5h1.6M355.2,241.8h1.6M355.2,245.1h1.6M355.2,248.4h1.6M355.2,251.8h1.6M355.2,255.1h1.6M355.2,258.4h1.6M355.2,261.7h1.6M355.2,265.0h1.6M355.2,268.3h1.6M355.2,271.6h1.6M355.2,274.9h1.6M355.2,278.2h1.6M355.2,281.6h1.6M355.2,284.9h1.6M355.2,288.2h1.6M355.2,291.5h1.6M355.2,294.8h1.6M355.2,298.1h1.6M355.2,301.4h1.6M355.2,304.8h1.6M355.2,308.1h1.6M355.2,311.4h1.6M355.2,314.7h1.6M355.2,318.0h1.6M355.2,321.3h1.6M355.2,324.6h1.6M355.2,327.9h1.6M355.2,331.2h1.6M355.2,334.6h1.6M355.2,337.9h1.6M355.2,341.2h1.6M355.2,344.5h1.6M355.2,347.8h1.6M355.2,351.1h1.6M355.2,354.4h1.6M355.2,357.8h1.6M355.2,361.1h1.6M355.2,364.4h1.6M355.2,367.7h1.6" stroke="#cfe0ff" stroke-width="1"/><path d="M529.6,109.3h1.6M529.6,112.6h1.6M529.6,115.9h1.6M529.6,119.2h1.6M529.6,122.6h1.6M529.6,125.9h1.6M529.6,129.2h1.6M529.6,132.5h1.6M529.6,135.8h1.6M529.6,139.1h1.6M529.6,142.4h1.6M529.6,145.8h1.6M529.6,149.1h1.6M529.6,152.4h1.6M529.6,155.7h1.6M529.6,159.0h1.6M529.6,162.3h1.6M529.6,165.6h1.6M529.6,168.9h1.6M529.6,172.2h1.6M529.6,175.6h1.6M529.6,178.9h1.6M529.6,182.2h1.6M529.6,185.5h1.6M529.6,188.8h1.6M529.6,192.1h1.6M529.6,195.4h1.6M529.6,198.8h1.6M529.6,202.1h1.6M529.6,205.4h1.6M529.6,208.7h1.6M529.6,212.0h1.6M529.6,215.3h1.6M529.6,218.6h1.6M529.6,221.9h1.6M529.6,225.2h1.6M529.6,228.6h1.6M529.6,231.9h1.6M529.6,235.2h1.6M529.6,238.5h1.6M529.6,241.8h1.6M529.6,245.1h1.6M529.6,248.4h1.6M529.6,251.8h1.6M529.6,255.1h1.6M529.6,258.4h1.6M529.6,261.7h1.6M529.6,265.0h1.6M529.6,268.3h1.6M529.6,271.6h1.6M529.6,274.9h1.6M529.6,278.2h1.6M529.6,281.6h1.6M529.6,284.9h1.6M529.6,288.2h1.6M529.6,291.5h1.6M529.6,294.8h1.6M529.6,298.1h1.6M529.6,301.4h1.6M529.6,304.8h1.6M529.6,308.1h1.6M529.6,311.4h1.6M529.6,314.7h1.6M529.6,318.0h1.6M529.6,321.3h1.6M529.6,324.6h1.6M529.6,327.9h1.6M529.6,331.2h1.6M529.6,334.6h1.6M529.6,337.9h1.6M529.6,341.2h1.6M529.6,344.5h1.6M529.6,347.8h1.6M529.6,351.1h1.6M529.6,354.4h1.6M529.6,357.8h1.6M529.6,361.1h1.6M529.6,364.4h1.6M529.6,367.7h1.6" stroke="#cfe0ff" stroke-width="1"/><path d="M704.0,109.3h1.6M704.0,112.6h1.6M704.0,115.9h1.6M704.0,119.2h1.6M704.0,122.6h1.6M704.0,125.9h1.6M704.0,129.2h1.6M704.0,132.5h1.6M704.0,135.8h1.6M704.0,139.1h1.6M704.0,142.4h1.6M704.0,145.8h1.6M704.0,149.1h1.6M704.0,152.4h1.6M704.0,155.7h1.6M704.0,159.0h1.6M704.0,162.3h1.6M704.0,165.6h1.6M704.0,168.9h1.6M704.0,172.2h1.6M704.0,175.6h1.6M704.0,178.9h1.6M704.0,182.2h1.6M704.0,185.5h1.6M704.0,188.8h1.6M704.0,192.1h1.6M704.0,195.4h1.6M704.0,198.8h1.6M704.0,202.1h1.6M704.0,205.4h1.6M704.0,208.7h1.6M704.0,212.0h1.6M704.0,215.3h1.6M704.0,218.6h1.6M704.0,221.9h1.6M704.0,225.2h1.6M704.0,228.6h1.6M704.0,231.9h1.6M704.0,235.2h1.6M704.0,238.5h1.6M704.0,241.8h1.6M704.0,245.1h1.6M704.0,248.4h1.6M704.0,251.8h1.6M704.0,255.1h1.6M704.0,258.4h1.6M704.0,261.7h1.6M704.0,265.0h1.6M704.0,268.3h1.6M704.0,271.6h1.6M704.0,274.9h1.6M704.0,278.2h1.6M704.0,281.6h1.6M704.0,284.9h1.6M704.0,288.2h1.6M704.0,291.5h1.6M704.0,294.8h1.6M704.0,298.1h1.6M704.0,301.4h1.6M704.0,304.8h1.6M704.0,308.1h1.6M704.0,311.4h1.6M704.0,314.7h1.6M704.0,318.0h1.6M704.0,321.3h1.6M704.0,324.6h1.6M704.0,327.9h1.6M704.0,331.2h1.6M704.0,334.6h1.6M704.0,337.9h1.6M704.0,341.2h1.6M704.0,344.5h1.6M704.0,347.8h1.6M704.0,351.1h1.6M704.0,354.4h1.6M704.0,357.8h1.6M704.0,361.1h1.6M704.0,364.4h1.6M704.0,367.7h1.6" stroke="#cfe0ff" stroke-width="1"/><path d="M1175.7,137.7v2.8M1193.1,137.7v2.8M1210.6,137.7v2.8M1228.0,137.7v2.8M1245.4,137.7v2.8M1262.9,137.7v2.8M1280.3,137.7v2.8M1297.8,137.7v2.8M1315.2,137.7v2.8M1332.6,137.7v2.8M1350.1,137.7v2.8M1367.5,137.7v2.8M1385.0,137.7v2.8M1402.4,137.7v2.8M1419.8,137.7v2.8M1437.3,137.7v2.8M1454.7,137.7v2.8M1472.2,137.7v2.8M1489.6,137.7v2.8M1507.0,137.7v2.8M1524.5,137.7v2.8M1541.9,137.7v2.8M1559.4,137.7v2.8M1576.8,137.7v2.8M1594.2,137.7v2.8M1611.7,137.7v2.8M1629.1,137.7v2.8M1646.6,137.7v2.8M1664.0,137.7v2.8M1681.4,137.7v2.8M1698.9,137.7v2.8M1716.3,137.7v2.8M1733.8,137.7v2.8" stroke="#cfe0ff" stroke-width="1"/><path d="M1175.7,170.8v2.8M1193.1,170.8v2.8M1210.6,170.8v2.8M1228.0,170.8v2.8M1245.4,170.8v2.8M1262.9,170.8v2.8M1280.3,170.8v2.8M1297.8,170.8v2.8M1315.2,170.8v2.8M1332.6,170.8v2.8M1350.1,170.8v2.8M1367.5,170.8v2.8M1385.0,170.8v2.8M1402.4,170.8v2.8M1419.8,170.8v2.8M1437.3,170.8v2.8M1454.7,170.8v2.8M1472.2,170.8v2.8M1489.6,170.8v2.8M1507.0,170.8v2.8M1524.5,170.8v2.8M1541.9,170.8v2.8M1559.4,170.8v2.8M1576.8,170.8v2.8M1594.2,170.8v2.8M1611.7,170.8v2.8M1629.1,170.8v2.8M1646.6,170.8v2.8M1664.0,170.8v2.8M1681.4,170.8v2.8M1698.9,170.8v2.8M1716.3,170.8v2.8M1733.8,170.8v2.8" stroke="#cfe0ff" stroke-width="1"/><path d="M1175.7,204.0v2.8M1193.1,204.0v2.8M1210.6,204.0v2.8M1228.0,204.0v2.8M1245.4,204.0v2.8M1262.9,204.0v2.8M1280.3,204.0v2.8M1297.8,204.0v2.8M1315.2,204.0v2.8M1332.6,204.0v2.8M1350.1,204.0v2.8M1367.5,204.0v2.8M1385.0,204.0v2.8M1402.4,204.0v2.8M1419.8,204.0v2.8M1437.3,204.0v2.8M1454.7,204.0v2.8M1472.2,204.0v2.8M1489.6,204.0v2.8M1507.0,204.0v2.8M1524.5,204.0v2.8M1541.9,204.0v2.8M1559.4,204.0v2.8M1576.8,204.0v2.8M1594.2,204.0v2.8M1611.7,204.0v2.8M1629.1,204.0v2.8M1646.6,204.0v2.8M1664.0,204.0v2.8M1681.4,204.0v2.8M1698.9,204.0v2.8M1716.3,204.0v2.8M1733.8,204.0v2.8" stroke="#cfe0ff" stroke-width="1"/><path d="M1168.9,238.5H1751.2" stroke="#9fc0ff" stroke-width="1.6"/><path d="M1193.1,235.0v7.0M1228.0,233.5v10M1262.9,235.0v7.0M1297.8,235.0v7.0M1332.6,235.0v7.0M1367.5,235.0v7.0M1402.4,233.5v10M1437.3,235.0v7.0M1472.2,235.0v7.0M1507.0,235.0v7.0M1541.9,235.0v7.0M1576.8,233.5v10M1611.7,235.0v7.0M1646.6,235.0v7.0M1681.4,235.0v7.0M1716.3,235.0v7.0M1751.2,233.5v10" stroke="#cfe0ff" stroke-width="1"/><path d="M1175.7,270.2v2.8M1193.1,270.2v2.8M1210.6,270.2v2.8M1228.0,270.2v2.8M1245.4,270.2v2.8M1262.9,270.2v2.8M1280.3,270.2v2.8M1297.8,270.2v2.8M1315.2,270.2v2.8M1332.6,270.2v2.8M1350.1,270.2v2.8M1367.5,270.2v2.8M1385.0,270.2v2.8M1402.4,270.2v2.8M1419.8,270.2v2.8M1437.3,270.2v2.8M1454.7,270.2v2.8M1472.2,270.2v2.8M1489.6,270.2v2.8M1507.0,270.2v2.8M1524.5,270.2v2.8M1541.9,270.2v2.8M1559.4,270.2v2.8M1576.8,270.2v2.8M1594.2,270.2v2.8M1611.7,270.2v2.8M1629.1,270.2v2.8M1646.6,270.2v2.8M1664.0,270.2v2.8M1681.4,270.2v2.8M1698.9,270.2v2.8M1716.3,270.2v2.8M1733.8,270.2v2.8" stroke="#cfe0ff" stroke-width="1"/><path d="M1175.7,303.4v2.8M1193.1,303.4v2.8M1210.6,303.4v2.8M1228.0,303.4v2.8M1245.4,303.4v2.8M1262.9,303.4v2.8M1280.3,303.4v2.8M1297.8,303.4v2.8M1315.2,303.4v2.8M1332.6,303.4v2.8M1350.1,303.4v2.8M1367.5,303.4v2.8M1385.0,303.4v2.8M1402.4,303.4v2.8M1419.8,303.4v2.8M1437.3,303.4v2.8M1454.7,303.4v2.8M1472.2,303.4v2.8M1489.6,303.4v2.8M1507.0,303.4v2.8M1524.5,303.4v2.8M1541.9,303.4v2.8M1559.4,303.4v2.8M1576.8,303.4v2.8M1594.2,303.4v2.8M1611.7,303.4v2.8M1629.1,303.4v2.8M1646.6,303.4v2.8M1664.0,303.4v2.8M1681.4,303.4v2.8M1698.9,303.4v2.8M1716.3,303.4v2.8M1733.8,303.4v2.8" stroke="#cfe0ff" stroke-width="1"/><path d="M1175.7,336.5v2.8M1193.1,336.5v2.8M1210.6,336.5v2.8M1228.0,336.5v2.8M1245.4,336.5v2.8M1262.9,336.5v2.8M1280.3,336.5v2.8M1297.8,336.5v2.8M1315.2,336.5v2.8M1332.6,336.5v2.8M1350.1,336.5v2.8M1367.5,336.5v2.8M1385.0,336.5v2.8M1402.4,336.5v2.8M1419.8,336.5v2.8M1437.3,336.5v2.8M1454.7,336.5v2.8M1472.2,336.5v2.8M1489.6,336.5v2.8M1507.0,336.5v2.8M1524.5,336.5v2.8M1541.9,336.5v2.8M1559.4,336.5v2.8M1576.8,336.5v2.8M1594.2,336.5v2.8M1611.7,336.5v2.8M1629.1,336.5v2.8M1646.6,336.5v2.8M1664.0,336.5v2.8M1681.4,336.5v2.8M1698.9,336.5v2.8M1716.3,336.5v2.8M1733.8,336.5v2.8" stroke="#cfe0ff" stroke-width="1"/><path d="M1227.2,109.3h1.6M1227.2,112.6h1.6M1227.2,115.9h1.6M1227.2,119.2h1.6M1227.2,122.6h1.6M1227.2,125.9h1.6M1227.2,129.2h1.6M1227.2,132.5h1.6M1227.2,135.8h1.6M1227.2,139.1h1.6M1227.2,142.4h1.6M1227.2,145.8h1.6M1227.2,149.1h1.6M1227.2,152.4h1.6M1227.2,155.7h1.6M1227.2,159.0h1.6M1227.2,162.3h1.6M1227.2,165.6h1.6M1227.2,168.9h1.6M1227.2,172.2h1.6M1227.2,175.6h1.6M1227.2,178.9h1.6M1227.2,182.2h1.6M1227.2,185.5h1.6M1227.2,188.8h1.6M1227.2,192.1h1.6M1227.2,195.4h1.6M1227.2,198.8h1.6M1227.2,202.1h1.6M1227.2,205.4h1.6M1227.2,208.7h1.6M1227.2,212.0h1.6M1227.2,215.3h1.6M1227.2,218.6h1.6M1227.2,221.9h1.6M1227.2,225.2h1.6M1227.2,228.6h1.6M1227.2,231.9h1.6M1227.2,235.2h1.6M1227.2,238.5h1.6M1227.2,241.8h1.6M1227.2,245.1h1.6M1227.2,248.4h1.6M1227.2,251.8h1.6M1227.2,255.1h1.6M1227.2,258.4h1.6M1227.2,261.7h1.6M1227.2,265.0h1.6M1227.2,268.3h1.6M1227.2,271.6h1.6M1227.2,274.9h1.6M1227.2,278.2h1.6M1227.2,281.6h1.6M1227.2,284.9h1.6M1227.2,288.2h1.6M1227.2,291.5h1.6M1227.2,294.8h1.6M1227.2,298.1h1.6M1227.2,301.4h1.6M1227.2,304.8h1.6M1227.2,308.1h1.6M1227.2,311.4h1.6M1227.2,314.7h1.6M1227.2,318.0h1.6M1227.2,321.3h1.6M1227.2,324.6h1.6M1227.2,327.9h1.6M1227.2,331.2h1.6M1227.2,334.6h1.6M1227.2,337.9h1.6M1227.2,341.2h1.6M1227.2,344.5h1.6M1227.2,347.8h1.6M1227.2,351.1h1.6M1227.2,354.4h1.6M1227.2,357.8h1.6M1227.2,361.1h1.6M1227.2,364.4h1.6M1227.2,367.7h1.6" stroke="#cfe0ff" stroke-width="1"/><path d="M1401.6,109.3h1.6M1401.6,112.6h1.6M1401.6,115.9h1.6M1401.6,119.2h1.6M1401.6,122.6h1.6M1401.6,125.9h1.6M1401.6,129.2h1.6M1401.6,132.5h1.6M1401.6,135.8h1.6M1401.6,139.1h1.6M1401.6,142.4h1.6M1401.6,145.8h1.6M1401.6,149.1h1.6M1401.6,152.4h1.6M1401.6,155.7h1.6M1401.6,159.0h1.6M1401.6,162.3h1.6M1401.6,165.6h1.6M1401.6,168.9h1.6M1401.6,172.2h1.6M1401.6,175.6h1.6M1401.6,178.9h1.6M1401.6,182.2h1.6M1401.6,185.5h1.6M1401.6,188.8h1.6M1401.6,192.1h1.6M1401.6,195.4h1.6M1401.6,198.8h1.6M1401.6,202.1h1.6M1401.6,205.4h1.6M1401.6,208.7h1.6M1401.6,212.0h1.6M1401.6,215.3h1.6M1401.6,218.6h1.6M1401.6,221.9h1.6M1401.6,225.2h1.6M1401.6,228.6h1.6M1401.6,231.9h1.6M1401.6,235.2h1.6M1401.6,238.5h1.6M1401.6,241.8h1.6M1401.6,245.1h1.6M1401.6,248.4h1.6M1401.6,251.8h1.6M1401.6,255.1h1.6M1401.6,258.4h1.6M1401.6,261.7h1.6M1401.6,265.0h1.6M1401.6,268.3h1.6M1401.6,271.6h1.6M1401.6,274.9h1.6M1401.6,278.2h1.6M1401.6,281.6h1.6M1401.6,284.9h1.6M1401.6,288.2h1.6M1401.6,291.5h1.6M1401.6,294.8h1.6M1401.6,298.1h1.6M1401.6,301.4h1.6M1401.6,304.8h1.6M1401.6,308.1h1.6M1401.6,311.4h1.6M1401.6,314.7h1.6M1401.6,318.0h1.6M1401.6,321.3h1.6M1401.6,324.6h1.6M1401.6,327.9h1.6M1401.6,331.2h1.6M1401.6,334.6h1.6M1401.6,337.9h1.6M1401.6,341.2h1.6M1401.6,344.5h1.6M1401.6,347.8h1.6M1401.6,351.1h1.6M1401.6,354.4h1.6M1401.6,357.8h1.6M1401.6,361.1h1.6M1401.6,364.4h1.6M1401.6,367.7h1.6" stroke="#cfe0ff" stroke-width="1"/><path d="M1576.0,109.3h1.6M1576.0,112.6h1.6M1576.0,115.9h1.6M1576.0,119.2h1.6M1576.0,122.6h1.6M1576.0,125.9h1.6M1576.0,129.2h1.6M1576.0,132.5h1.6M1576.0,135.8h1.6M1576.0,139.1h1.6M1576.0,142.4h1.6M1576.0,145.8h1.6M1576.0,149.1h1.6M1576.0,152.4h1.6M1576.0,155.7h1.6M1576.0,159.0h1.6M1576.0,162.3h1.6M1576.0,165.6h1.6M1576.0,168.9h1.6M1576.0,172.2h1.6M1576.0,175.6h1.6M1576.0,178.9h1.6M1576.0,182.2h1.6M1576.0,185.5h1.6M1576.0,188.8h1.6M1576.0,192.1h1.6M1576.0,195.4h1.6M1576.0,198.8h1.6M1576.0,202.1h1.6M1576.0,205.4h1.6M1576.0,208.7h1.6M1576.0,212.0h1.6M1576.0,215.3h1.6M1576.0,218.6h1.6M1576.0,221.9h1.6M1576.0,225.2h1.6M1576.0,228.6h1.6M1576.0,231.9h1.6M1576.0,235.2h1.6M1576.0,238.5h1.6M1576.0,241.8h1.6M1576.0,245.1h1.6M1576.0,248.4h1.6M1576.0,251.8h1.6M1576.0,255.1h1.6M1576.0,258.4h1.6M1576.0,261.7h1.6M1576.0,265.0h1.6M1576.0,268.3h1.6M1576.0,271.6h1.6M1576.0,274.9h1.6M1576.0,278.2h1.6M1576.0,281.6h1.6M1576.0,284.9h1.6M1576.0,288.2h1.6M1576.0,291.5h1.6M1576.0,294.8h1.6M1576.0,298.1h1.6M1576.0,301.4h1.6M1576.0,304.8h1.6M1576.0,308.1h1.6M1576.0,311.4h1.6M1576.0,314.7h1.6M1576.0,318.0h1.6M1576.0,321.3h1.6M1576.0,324.6h1.6M1576.0,327.9h1.6M1576.0,331.2h1.6M1576.0,334.6h1.6M1576.0,337.9h1.6M1576.0,341.2h1.6M1576.0,344.5h1.6M1576.0,347.8h1.6M1576.0,351.1h1.6M1576.0,354.4h1.6M1576.0,357.8h1.6M1576.0,361.1h1.6M1576.0,364.4h1.6M1576.0,367.7h1.6" stroke="#cfe0ff" stroke-width="1"/></g><path d="M24.6,472.9v2.8M42.1,472.9v2.8M59.5,472.9v2.8M77.0,472.9v2.8M94.4,472.9v2.8M111.8,472.9v2.8M129.3,472.9v2.8M146.7,472.9v2.8M164.2,472.9v2.8M181.6,472.9v2.8M199.0,472.9v2.8M216.5,472.9v2.8M233.9,472.9v2.8M251.4,472.9v2.8M268.8,472.9v2.8M286.2,472.9v2.8M303.7,472.9v2.8M321.1,472.9v2.8M338.6,472.9v2.8M356.0,472.9v2.8M373.4,472.9v2.8M390.9,472.9v2.8M408.3,472.9v2.8M425.8,472.9v2.8M443.2,472.9v2.8M460.6,472.9v2.8M478.1,472.9v2.8M495.5,472.9v2.8M513.0,472.9v2.8M530.4,472.9v2.8M547.8,472.9v2.8M565.3,472.9v2.8M582.7,472.9v2.8M600.2,472.9v2.8M617.6,472.9v2.8M635.0,472.9v2.8M652.5,472.9v2.8M669.9,472.9v2.8M687.4,472.9v2.8M704.8,472.9v2.8M722.2,472.9v2.8M739.7,472.9v2.8M757.1,472.9v2.8M774.6,472.9v2.8M792.0,472.9v2.8M809.4,472.9v2.8M826.9,472.9v2.8M844.3,472.9v2.8M861.8,472.9v2.8M879.2,472.9v2.8M896.6,472.9v2.8M914.1,472.9v2.8M931.5,472.9v2.8M949.0,472.9v2.8M966.4,472.9v2.8M983.8,472.9v2.8M1001.3,472.9v2.8M1018.7,472.9v2.8M1036.2,472.9v2.8M1053.6,472.9v2.8M1071.0,472.9v2.8M1088.5,472.9v2.8M1105.9,472.9v2.8M1123.4,472.9v2.8M1140.8,472.9v2.8M1158.2,472.9v2.8M1175.7,472.9v2.8M1193.1,472.9v2.8M1210.6,472.9v2.8M1228.0,472.9v2.8M1245.4,472.9v2.8M1262.9,472.9v2.8M1280.3,472.9v2.8M1297.8,472.9v2.8M1315.2,472.9v2.8M1332.6,472.9v2.8M1350.1,472.9v2.8M1367.5,472.9v2.8M1385.0,472.9v2.8M1402.4,472.9v2.8M1419.8,472.9v2.8M1437.3,472.9v2.8M1454.7,472.9v2.8M1472.2,472.9v2.8M1489.6,472.9v2.8M1507.0,472.9v2.8M1524.5,472.9v2.8M1541.9,472.9v2.8M1559.4,472.9v2.8M1576.8,472.9v2.8M1594.2,472.9v2.8M1611.7,472.9v2.8M1629.1,472.9v2.8M1646.6,472.9v2.8M1664.0,472.9v2.8M1681.4,472.9v2.8M1698.9,472.9v2.8M1716.3,472.9v2.8M1733.8,472.9v2.8" stroke="#545454" stroke-width="1"/><path d="M24.6,546.6v2.8M42.1,546.6v2.8M59.5,546.6v2.8M77.0,546.6v2.8M94.4,546.6v2.8M111.8,546.6v2.8M129.3,546.6v2.8M146.7,546.6v2.8M164.2,546.6v2.8M181.6,546.6v2.8M199.0,546.6v2.8M216.5,546.6v2.8M233.9,546.6v2.8M251.4,546.6v2.8M268.8,546.6v2.8M286.2,546.6v2.8M303.7,546.6v2.8M321.1,546.6v2.8M338.6,546.6v2.8M356.0,546.6v2.8M373.4,546.6v2.8M390.9,546.6v2.8M408.3,546.6v2.8M425.8,546.6v2.8M443.2,546.6v2.8M460.6,546.6v2.8M478.1,546.6v2.8M495.5,546.6v2.8M513.0,546.6v2.8M530.4,546.6v2.8M547.8,546.6v2.8M565.3,546.6v2.8M582.7,546.6v2.8M600.2,546.6v2.8M617.6,546.6v2.8M635.0,546.6v2.8M652.5,546.6v2.8M669.9,546.6v2.8M687.4,546.6v2.8M704.8,546.6v2.8M722.2,546.6v2.8M739.7,546.6v2.8M757.1,546.6v2.8M774.6,546.6v2.8M792.0,546.6v2.8M809.4,546.6v2.8M826.9,546.6v2.8M844.3,546.6v2.8M861.8,546.6v2.8M879.2,546.6v2.8M896.6,546.6v2.8M914.1,546.6v2.8M931.5,546.6v2.8M949.0,546.6v2.8M966.4,546.6v2.8M983.8,546.6v2.8M1001.3,546.6v2.8M1018.7,546.6v2.8M1036.2,546.6v2.8M1053.6,546.6v2.8M1071.0,546.6v2.8M1088.5,546.6v2.8M1105.9,546.6v2.8M1123.4,546.6v2.8M1140.8,546.6v2.8M1158.2,546.6v2.8M1175.7,546.6v2.8M1193.1,546.6v2.8M1210.6,546.6v2.8M1228.0,546.6v2.8M1245.4,546.6v2.8M1262.9,546.6v2.8M1280.3,546.6v2.8M1297.8,546.6v2.8M1315.2,546.6v2.8M1332.6,546.6v2.8M1350.1,546.6v2.8M1367.5,546.6v2.8M1385.0,546.6v2.8M1402.4,546.6v2.8M1419.8,546.6v2.8M1437.3,546.6v2.8M1454.7,546.6v2.8M1472.2,546.6v2.8M1489.6,546.6v2.8M1507.0,546.6v2.8M1524.5,546.6v2.8M1541.9,546.6v2.8M1559.4,546.6v2.8M1576.8,546.6v2.8M1594.2,546.6v2.8M1611.7,546.6v2.8M1629.1,546.6v2.8M1646.6,546.6v2.8M1664.0,546.6v2.8M1681.4,546.6v2.8M1698.9,546.6v2.8M1716.3,546.6v2.8M1733.8,546.6v2.8" stroke="#545454" stroke-width="1"/><path d="M24.6,620.4v2.8M42.1,620.4v2.8M59.5,620.4v2.8M77.0,620.4v2.8M94.4,620.4v2.8M111.8,620.4v2.8M129.3,620.4v2.8M146.7,620.4v2.8M164.2,620.4v2.8M181.6,620.4v2.8M199.0,620.4v2.8M216.5,620.4v2.8M233.9,620.4v2.8M251.4,620.4v2.8M268.8,620.4v2.8M286.2,620.4v2.8M303.7,620.4v2.8M321.1,620.4v2.8M338.6,620.4v2.8M356.0,620.4v2.8M373.4,620.4v2.8M390.9,620.4v2.8M408.3,620.4v2.8M425.8,620.4v2.8M443.2,620.4v2.8M460.6,620.4v2.8M478.1,620.4v2.8M495.5,620.4v2.8M513.0,620.4v2.8M530.4,620.4v2.8M547.8,620.4v2.8M565.3,620.4v2.8M582.7,620.4v2.8M600.2,620.4v2.8M617.6,620.4v2.8M635.0,620.4v2.8M652.5,620.4v2.8M669.9,620.4v2.8M687.4,620.4v2.8M704.8,620.4v2.8M722.2,620.4v2.8M739.7,620.4v2.8M757.1,620.4v2.8M774.6,620.4v2.8M792.0,620.4v2.8M809.4,620.4v2.8M826.9,620.4v2.8M844.3,620.4v2.8M861.8,620.4v2.8M879.2,620.4v2.8M896.6,620.4v2.8M914.1,620.4v2.8M931.5,620.4v2.8M949.0,620.4v2.8M966.4,620.4v2.8M983.8,620.4v2.8M1001.3,620.4v2.8M1018.7,620.4v2.8M1036.2,620.4v2.8M1053.6,620.4v2.8M1071.0,620.4v2.8M1088.5,620.4v2.8M1105.9,620.4v2.8M1123.4,620.4v2.8M1140.8,620.4v2.8M1158.2,620.4v2.8M1175.7,620.4v2.8M1193.1,620.4v2.8M1210.6,620.4v2.8M1228.0,620.4v2.8M1245.4,620.4v2.8M1262.9,620.4v2.8M1280.3,620.4v2.8M1297.8,620.4v2.8M1315.2,620.4v2.8M1332.6,620.4v2.8M1350.1,620.4v2.8M1367.5,620.4v2.8M1385.0,620.4v2.8M1402.4,620.4v2.8M1419.8,620.4v2.8M1437.3,620.4v2.8M1454.7,620.4v2.8M1472.2,620.4v2.8M1489.6,620.4v2.8M1507.0,620.4v2.8M1524.5,620.4v2.8M1541.9,620.4v2.8M1559.4,620.4v2.8M1576.8,620.4v2.8M1594.2,620.4v2.8M1611.7,620.4v2.8M1629.1,620.4v2.8M1646.6,620.4v2.8M1664.0,620.4v2.8M1681.4,620.4v2.8M1698.9,620.4v2.8M1716.3,620.4v2.8M1733.8,620.4v2.8" stroke="#545454" stroke-width="1"/><path d="M7.2,695.5H1751.2" stroke="#383838" stroke-width="1.6"/><path d="M7.2,690.5v10M42.1,692.0v7.0M77.0,692.0v7.0M111.8,692.0v7.0M146.7,692.0v7.0M181.6,690.5v10M216.5,692.0v7.0M251.4,692.0v7.0M286.2,692.0v7.0M321.1,692.0v7.0M356.0,690.5v10M390.9,692.0v7.0M425.8,692.0v7.0M460.6,692.0v7.0M495.5,692.0v7.0M530.4,690.5v10M565.3,692.0v7.0M600.2,692.0v7.0M635.0,692.0v7.0M669.9,692.0v7.0M704.8,690.5v10M739.7,692.0v7.0M774.6,692.0v7.0M809.4,692.0v7.0M844.3,692.0v7.0M879.2,690.5v10M914.1,692.0v7.0M949.0,692.0v7.0M983.8,692.0v7.0M1018.7,692.0v7.0M1053.6,690.5v10M1088.5,692.0v7.0M1123.4,692.0v7.0M1158.2,692.0v7.0M1193.1,692.0v7.0M1228.0,690.5v10M1262.9,692.0v7.0M1297.8,692.0v7.0M1332.6,692.0v7.0M1367.5,692.0v7.0M1402.4,690.5v10M1437.3,692.0v7.0M1472.2,692.0v7.0M1507.0,692.0v7.0M1541.9,692.0v7.0M1576.8,690.5v10M1611.7,692.0v7.0M1646.6,692.0v7.0M1681.4,692.0v7.0M1716.3,692.0v7.0M1751.2,690.5v10" stroke="#8e8e8e" stroke-width="1"/><path d="M24.6,767.9v2.8M42.1,767.9v2.8M59.5,767.9v2.8M77.0,767.9v2.8M94.4,767.9v2.8M111.8,767.9v2.8M129.3,767.9v2.8M146.7,767.9v2.8M164.2,767.9v2.8M181.6,767.9v2.8M199.0,767.9v2.8M216.5,767.9v2.8M233.9,767.9v2.8M251.4,767.9v2.8M268.8,767.9v2.8M286.2,767.9v2.8M303.7,767.9v2.8M321.1,767.9v2.8M338.6,767.9v2.8M356.0,767.9v2.8M373.4,767.9v2.8M390.9,767.9v2.8M408.3,767.9v2.8M425.8,767.9v2.8M443.2,767.9v2.8M460.6,767.9v2.8M478.1,767.9v2.8M495.5,767.9v2.8M513.0,767.9v2.8M530.4,767.9v2.8M547.8,767.9v2.8M565.3,767.9v2.8M582.7,767.9v2.8M600.2,767.9v2.8M617.6,767.9v2.8M635.0,767.9v2.8M652.5,767.9v2.8M669.9,767.9v2.8M687.4,767.9v2.8M704.8,767.9v2.8M722.2,767.9v2.8M739.7,767.9v2.8M757.1,767.9v2.8M774.6,767.9v2.8M792.0,767.9v2.8M809.4,767.9v2.8M826.9,767.9v2.8M844.3,767.9v2.8M861.8,767.9v2.8M879.2,767.9v2.8M896.6,767.9v2.8M914.1,767.9v2.8M931.5,767.9v2.8M949.0,767.9v2.8M966.4,767.9v2.8M983.8,767.9v2.8M1001.3,767.9v2.8M1018.7,767.9v2.8M1036.2,767.9v2.8M1053.6,767.9v2.8M1071.0,767.9v2.8M1088.5,767.9v2.8M1105.9,767.9v2.8M1123.4,767.9v2.8M1140.8,767.9v2.8M1158.2,767.9v2.8M1175.7,767.9v2.8M1193.1,767.9v2.8M1210.6,767.9v2.8M1228.0,767.9v2.8M1245.4,767.9v2.8M1262.9,767.9v2.8M1280.3,767.9v2.8M1297.8,767.9v2.8M1315.2,767.9v2.8M1332.6,767.9v2.8M1350.1,767.9v2.8M1367.5,767.9v2.8M1385.0,767.9v2.8M1402.4,767.9v2.8M1419.8,767.9v2.8M1437.3,767.9v2.8M1454.7,767.9v2.8M1472.2,767.9v2.8M1489.6,767.9v2.8M1507.0,767.9v2.8M1524.5,767.9v2.8M1541.9,767.9v2.8M1559.4,767.9v2.8M1576.8,767.9v2.8M1594.2,767.9v2.8M1611.7,767.9v2.8M1629.1,767.9v2.8M1646.6,767.9v2.8M1664.0,767.9v2.8M1681.4,767.9v2.8M1698.9,767.9v2.8M1716.3,767.9v2.8M1733.8,767.9v2.8" stroke="#545454" stroke-width="1"/><path d="M24.6,841.6v2.8M42.1,841.6v2.8M59.5,841.6v2.8M77.0,841.6v2.8M94.4,841.6v2.8M111.8,841.6v2.8M129.3,841.6v2.8M146.7,841.6v2.8M164.2,841.6v2.8M181.6,841.6v2.8M199.0,841.6v2.8M216.5,841.6v2.8M233.9,841.6v2.8M251.4,841.6v2.8M268.8,841.6v2.8M286.2,841.6v2.8M303.7,841.6v2.8M321.1,841.6v2.8M338.6,841.6v2.8M356.0,841.6v2.8M373.4,841.6v2.8M390.9,841.6v2.8M408.3,841.6v2.8M425.8,841.6v2.8M443.2,841.6v2.8M460.6,841.6v2.8M478.1,841.6v2.8M495.5,841.6v2.8M513.0,841.6v2.8M530.4,841.6v2.8M547.8,841.6v2.8M565.3,841.6v2.8M582.7,841.6v2.8M600.2,841.6v2.8M617.6,841.6v2.8M635.0,841.6v2.8M652.5,841.6v2.8M669.9,841.6v2.8M687.4,841.6v2.8M704.8,841.6v2.8M722.2,841.6v2.8M739.7,841.6v2.8M757.1,841.6v2.8M774.6,841.6v2.8M792.0,841.6v2.8M809.4,841.6v2.8M826.9,841.6v2.8M844.3,841.6v2.8M861.8,841.6v2.8M879.2,841.6v2.8M896.6,841.6v2.8M914.1,841.6v2.8M931.5,841.6v2.8M949.0,841.6v2.8M966.4,841.6v2.8M983.8,841.6v2.8M1001.3,841.6v2.8M1018.7,841.6v2.8M1036.2,841.6v2.8M1053.6,841.6v2.8M1071.0,841.6v2.8M1088.5,841.6v2.8M1105.9,841.6v2.8M1123.4,841.6v2.8M1140.8,841.6v2.8M1158.2,841.6v2.8M1175.7,841.6v2.8M1193.1,841.6v2.8M1210.6,841.6v2.8M1228.0,841.6v2.8M1245.4,841.6v2.8M1262.9,841.6v2.8M1280.3,841.6v2.8M1297.8,841.6v2.8M1315.2,841.6v2.8M1332.6,841.6v2.8M1350.1,841.6v2.8M1367.5,841.6v2.8M1385.0,841.6v2.8M1402.4,841.6v2.8M1419.8,841.6v2.8M1437.3,841.6v2.8M1454.7,841.6v2.8M1472.2,841.6v2.8M1489.6,841.6v2.8M1507.0,841.6v2.8M1524.5,841.6v2.8M1541.9,841.6v2.8M1559.4,841.6v2.8M1576.8,841.6v2.8M1594.2,841.6v2.8M1611.7,841.6v2.8M1629.1,841.6v2.8M1646.6,841.6v2.8M1664.0,841.6v2.8M1681.4,841.6v2.8M1698.9,841.6v2.8M1716.3,841.6v2.8M1733.8,841.6v2.8" stroke="#545454" stroke-width="1"/><path d="M24.6,915.4v2.8M42.1,915.4v2.8M59.5,915.4v2.8M77.0,915.4v2.8M94.4,915.4v2.8M111.8,915.4v2.8M129.3,915.4v2.8M146.7,915.4v2.8M164.2,915.4v2.8M181.6,915.4v2.8M199.0,915.4v2.8M216.5,915.4v2.8M233.9,915.4v2.8M251.4,915.4v2.8M268.8,915.4v2.8M286.2,915.4v2.8M303.7,915.4v2.8M321.1,915.4v2.8M338.6,915.4v2.8M356.0,915.4v2.8M373.4,915.4v2.8M390.9,915.4v2.8M408.3,915.4v2.8M425.8,915.4v2.8M443.2,915.4v2.8M460.6,915.4v2.8M478.1,915.4v2.8M495.5,915.4v2.8M513.0,915.4v2.8M530.4,915.4v2.8M547.8,915.4v2.8M565.3,915.4v2.8M582.7,915.4v2.8M600.2,915.4v2.8M617.6,915.4v2.8M635.0,915.4v2.8M652.5,915.4v2.8M669.9,915.4v2.8M687.4,915.4v2.8M704.8,915.4v2.8M722.2,915.4v2.8M739.7,915.4v2.8M757.1,915.4v2.8M774.6,915.4v2.8M792.0,915.4v2.8M809.4,915.4v2.8M826.9,915.4v2.8M844.3,915.4v2.8M861.8,915.4v2.8M879.2,915.4v2.8M896.6,915.4v2.8M914.1,915.4v2.8M931.5,915.4v2.8M949.0,915.4v2.8M966.4,915.4v2.8M983.8,915.4v2.8M1001.3,915.4v2.8M1018.7,915.4v2.8M1036.2,915.4v2.8M1053.6,915.4v2.8M1071.0,915.4v2.8M1088.5,915.4v2.8M1105.9,915.4v2.8M1123.4,915.4v2.8M1140.8,915.4v2.8M1158.2,915.4v2.8M1175.7,915.4v2.8M1193.1,915.4v2.8M1210.6,915.4v2.8M1228.0,915.4v2.8M1245.4,915.4v2.8M1262.9,915.4v2.8M1280.3,915.4v2.8M1297.8,915.4v2.8M1315.2,915.4v2.8M1332.6,915.4v2.8M1350.1,915.4v2.8M1367.5,915.4v2.8M1385.0,915.4v2.8M1402.4,915.4v2.8M1419.8,915.4v2.8M1437.3,915.4v2.8M1454.7,915.4v2.8M1472.2,915.4v2.8M1489.6,915.4v2.8M1507.0,915.4v2.8M1524.5,915.4v2.8M1541.9,915.4v2.8M1559.4,915.4v2.8M1576.8,915.4v2.8M1594.2,915.4v2.8M1611.7,915.4v2.8M1629.1,915.4v2.8M1646.6,915.4v2.8M1664.0,915.4v2.8M1681.4,915.4v2.8M1698.9,915.4v2.8M1716.3,915.4v2.8M1733.8,915.4v2.8" stroke="#545454" stroke-width="1"/><path d="M180.8,407.9h1.6M180.8,415.2h1.6M180.8,422.6h1.6M180.8,430.0h1.6M180.8,437.4h1.6M180.8,444.8h1.6M180.8,452.1h1.6M180.8,459.5h1.6M180.8,466.9h1.6M180.8,474.2h1.6M180.8,481.6h1.6M180.8,489.0h1.6M180.8,496.4h1.6M180.8,503.8h1.6M180.8,511.1h1.6M180.8,518.5h1.6M180.8,525.9h1.6M180.8,533.2h1.6M180.8,540.6h1.6M180.8,548.0h1.6M180.8,555.4h1.6M180.8,562.8h1.6M180.8,570.1h1.6M180.8,577.5h1.6M180.8,584.9h1.6M180.8,592.2h1.6M180.8,599.6h1.6M180.8,607.0h1.6M180.8,614.4h1.6M180.8,621.8h1.6M180.8,629.1h1.6M180.8,636.5h1.6M180.8,643.9h1.6M180.8,651.2h1.6M180.8,658.6h1.6M180.8,666.0h1.6M180.8,673.4h1.6M180.8,680.8h1.6M180.8,688.1h1.6M180.8,695.5h1.6M180.8,702.9h1.6M180.8,710.2h1.6M180.8,717.6h1.6M180.8,725.0h1.6M180.8,732.4h1.6M180.8,739.8h1.6M180.8,747.1h1.6M180.8,754.5h1.6M180.8,761.9h1.6M180.8,769.2h1.6M180.8,776.6h1.6M180.8,784.0h1.6M180.8,791.4h1.6M180.8,798.8h1.6M180.8,806.1h1.6M180.8,813.5h1.6M180.8,820.9h1.6M180.8,828.2h1.6M180.8,835.6h1.6M180.8,843.0h1.6M180.8,850.4h1.6M180.8,857.8h1.6M180.8,865.1h1.6M180.8,872.5h1.6M180.8,879.9h1.6M180.8,887.2h1.6M180.8,894.6h1.6M180.8,902.0h1.6M180.8,909.4h1.6M180.8,916.8h1.6M180.8,924.1h1.6M180.8,931.5h1.6M180.8,938.9h1.6M180.8,946.2h1.6M180.8,953.6h1.6M180.8,961.0h1.6M180.8,968.4h1.6M180.8,975.8h1.6M180.8,983.1h1.6" stroke="#545454" stroke-width="1"/><path d="M355.2,407.9h1.6M355.2,415.2h1.6M355.2,422.6h1.6M355.2,430.0h1.6M355.2,437.4h1.6M355.2,444.8h1.6M355.2,452.1h1.6M355.2,459.5h1.6M355.2,466.9h1.6M355.2,474.2h1.6M355.2,481.6h1.6M355.2,489.0h1.6M355.2,496.4h1.6M355.2,503.8h1.6M355.2,511.1h1.6M355.2,518.5h1.6M355.2,525.9h1.6M355.2,533.2h1.6M355.2,540.6h1.6M355.2,548.0h1.6M355.2,555.4h1.6M355.2,562.8h1.6M355.2,570.1h1.6M355.2,577.5h1.6M355.2,584.9h1.6M355.2,592.2h1.6M355.2,599.6h1.6M355.2,607.0h1.6M355.2,614.4h1.6M355.2,621.8h1.6M355.2,629.1h1.6M355.2,636.5h1.6M355.2,643.9h1.6M355.2,651.2h1.6M355.2,658.6h1.6M355.2,666.0h1.6M355.2,673.4h1.6M355.2,680.8h1.6M355.2,688.1h1.6M355.2,695.5h1.6M355.2,702.9h1.6M355.2,710.2h1.6M355.2,717.6h1.6M355.2,725.0h1.6M355.2,732.4h1.6M355.2,739.8h1.6M355.2,747.1h1.6M355.2,754.5h1.6M355.2,761.9h1.6M355.2,769.2h1.6M355.2,776.6h1.6M355.2,784.0h1.6M355.2,791.4h1.6M355.2,798.8h1.6M355.2,806.1h1.6M355.2,813.5h1.6M355.2,820.9h1.6M355.2,828.2h1.6M355.2,835.6h1.6M355.2,843.0h1.6M355.2,850.4h1.6M355.2,857.8h1.6M355.2,865.1h1.6M355.2,872.5h1.6M355.2,879.9h1.6M355.2,887.2h1.6M355.2,894.6h1.6M355.2,902.0h1.6M355.2,909.4h1.6M355.2,916.8h1.6M355.2,924.1h1.6M355.2,931.5h1.6M355.2,938.9h1.6M355.2,946.2h1.6M355.2,953.6h1.6M355.2,961.0h1.6M355.2,968.4h1.6M355.2,975.8h1.6M355.2,983.1h1.6" stroke="#545454" stroke-width="1"/><path d="M529.6,407.9h1.6M529.6,415.2h1.6M529.6,422.6h1.6M529.6,430.0h1.6M529.6,437.4h1.6M529.6,444.8h1.6M529.6,452.1h1.6M529.6,459.5h1.6M529.6,466.9h1.6M529.6,474.2h1.6M529.6,481.6h1.6M529.6,489.0h1.6M529.6,496.4h1.6M529.6,503.8h1.6M529.6,511.1h1.6M529.6,518.5h1.6M529.6,525.9h1.6M529.6,533.2h1.6M529.6,540.6h1.6M529.6,548.0h1.6M529.6,555.4h1.6M529.6,562.8h1.6M529.6,570.1h1.6M529.6,577.5h1.6M529.6,584.9h1.6M529.6,592.2h1.6M529.6,599.6h1.6M529.6,607.0h1.6M529.6,614.4h1.6M529.6,621.8h1.6M529.6,629.1h1.6M529.6,636.5h1.6M529.6,643.9h1.6M529.6,651.2h1.6M529.6,658.6h1.6M529.6,666.0h1.6M529.6,673.4h1.6M529.6,680.8h1.6M529.6,688.1h1.6M529.6,695.5h1.6M529.6,702.9h1.6M529.6,710.2h1.6M529.6,717.6h1.6M529.6,725.0h1.6M529.6,732.4h1.6M529.6,739.8h1.6M529.6,747.1h1.6M529.6,754.5h1.6M529.6,761.9h1.6M529.6,769.2h1.6M529.6,776.6h1.6M529.6,784.0h1.6M529.6,791.4h1.6M529.6,798.8h1.6M529.6,806.1h1.6M529.6,813.5h1.6M529.6,820.9h1.6M529.6,828.2h1.6M529.6,835.6h1.6M529.6,843.0h1.6M529.6,850.4h1.6M529.6,857.8h1.6M529.6,865.1h1.6M529.6,872.5h1.6M529.6,879.9h1.6M529.6,887.2h1.6M529.6,894.6h1.6M529.6,902.0h1.6M529.6,909.4h1.6M529.6,916.8h1.6M529.6,924.1h1.6M529.6,931.5h1.6M529.6,938.9h1.6M529.6,946.2h1.6M529.6,953.6h1.6M529.6,961.0h1.6M529.6,968.4h1.6M529.6,975.8h1.6M529.6,983.1h1.6" stroke="#545454" stroke-width="1"/><path d="M704.0,407.9h1.6M704.0,415.2h1.6M704.0,422.6h1.6M704.0,430.0h1.6M704.0,437.4h1.6M704.0,444.8h1.6M704.0,452.1h1.6M704.0,459.5h1.6M704.0,466.9h1.6M704.0,474.2h1.6M704.0,481.6h1.6M704.0,489.0h1.6M704.0,496.4h1.6M704.0,503.8h1.6M704.0,511.1h1.6M704.0,518.5h1.6M704.0,525.9h1.6M704.0,533.2h1.6M704.0,540.6h1.6M704.0,548.0h1.6M704.0,555.4h1.6M704.0,562.8h1.6M704.0,570.1h1.6M704.0,577.5h1.6M704.0,584.9h1.6M704.0,592.2h1.6M704.0,599.6h1.6M704.0,607.0h1.6M704.0,614.4h1.6M704.0,621.8h1.6M704.0,629.1h1.6M704.0,636.5h1.6M704.0,643.9h1.6M704.0,651.2h1.6M704.0,658.6h1.6M704.0,666.0h1.6M704.0,673.4h1.6M704.0,680.8h1.6M704.0,688.1h1.6M704.0,695.5h1.6M704.0,702.9h1.6M704.0,710.2h1.6M704.0,717.6h1.6M704.0,725.0h1.6M704.0,732.4h1.6M704.0,739.8h1.6M704.0,747.1h1.6M704.0,754.5h1.6M704.0,761.9h1.6M704.0,769.2h1.6M704.0,776.6h1.6M704.0,784.0h1.6M704.0,791.4h1.6M704.0,798.8h1.6M704.0,806.1h1.6M704.0,813.5h1.6M704.0,820.9h1.6M704.0,828.2h1.6M704.0,835.6h1.6M704.0,843.0h1.6M704.0,850.4h1.6M704.0,857.8h1.6M704.0,865.1h1.6M704.0,872.5h1.6M704.0,879.9h1.6M704.0,887.2h1.6M704.0,894.6h1.6M704.0,902.0h1.6M704.0,909.4h1.6M704.0,916.8h1.6M704.0,924.1h1.6M704.0,931.5h1.6M704.0,938.9h1.6M704.0,946.2h1.6M704.0,953.6h1.6M704.0,961.0h1.6M704.0,968.4h1.6M704.0,975.8h1.6M704.0,983.1h1.6" stroke="#545454" stroke-width="1"/><path d="M876.2,415.2h6M876.2,430.0h6M876.2,444.8h6M876.2,459.5h6M874.2,474.2h10M876.2,489.0h6M876.2,503.8h6M876.2,518.5h6M876.2,533.2h6M874.2,548.0h10M876.2,562.8h6M876.2,577.5h6M876.2,592.2h6M876.2,607.0h6M874.2,621.8h10M876.2,636.5h6M876.2,651.2h6M876.2,666.0h6M876.2,680.8h6M874.2,695.5h10M876.2,710.2h6M876.2,725.0h6M876.2,739.8h6M876.2,754.5h6M874.2,769.2h10M876.2,784.0h6M876.2,798.8h6M876.2,813.5h6M876.2,828.2h6M874.2,843.0h10M876.2,857.8h6M876.2,872.5h6M876.2,887.2h6M876.2,902.0h6M874.2,916.8h10M876.2,931.5h6M876.2,946.2h6M876.2,961.0h6M876.2,975.8h6" stroke="#8e8e8e" stroke-width="1"/><path d="M1052.8,407.9h1.6M1052.8,415.2h1.6M1052.8,422.6h1.6M1052.8,430.0h1.6M1052.8,437.4h1.6M1052.8,444.8h1.6M1052.8,452.1h1.6M1052.8,459.5h1.6M1052.8,466.9h1.6M1052.8,474.2h1.6M1052.8,481.6h1.6M1052.8,489.0h1.6M1052.8,496.4h1.6M1052.8,503.8h1.6M1052.8,511.1h1.6M1052.8,518.5h1.6M1052.8,525.9h1.6M1052.8,533.2h1.6M1052.8,540.6h1.6M1052.8,548.0h1.6M1052.8,555.4h1.6M1052.8,562.8h1.6M1052.8,570.1h1.6M1052.8,577.5h1.6M1052.8,584.9h1.6M1052.8,592.2h1.6M1052.8,599.6h1.6M1052.8,607.0h1.6M1052.8,614.4h1.6M1052.8,621.8h1.6M1052.8,629.1h1.6M1052.8,636.5h1.6M1052.8,643.9h1.6M1052.8,651.2h1.6M1052.8,658.6h1.6M1052.8,666.0h1.6M1052.8,673.4h1.6M1052.8,680.8h1.6M1052.8,688.1h1.6M1052.8,695.5h1.6M1052.8,702.9h1.6M1052.8,710.2h1.6M1052.8,717.6h1.6M1052.8,725.0h1.6M1052.8,732.4h1.6M1052.8,739.8h1.6M1052.8,747.1h1.6M1052.8,754.5h1.6M1052.8,761.9h1.6M1052.8,769.2h1.6M1052.8,776.6h1.6M1052.8,784.0h1.6M1052.8,791.4h1.6M1052.8,798.8h1.6M1052.8,806.1h1.6M1052.8,813.5h1.6M1052.8,820.9h1.6M1052.8,828.2h1.6M1052.8,835.6h1.6M1052.8,843.0h1.6M1052.8,850.4h1.6M1052.8,857.8h1.6M1052.8,865.1h1.6M1052.8,872.5h1.6M1052.8,879.9h1.6M1052.8,887.2h1.6M1052.8,894.6h1.6M1052.8,902.0h1.6M1052.8,909.4h1.6M1052.8,916.8h1.6M1052.8,924.1h1.6M1052.8,931.5h1.6M1052.8,938.9h1.6M1052.8,946.2h1.6M1052.8,953.6h1.6M1052.8,961.0h1.6M1052.8,968.4h1.6M1052.8,975.8h1.6M1052.8,983.1h1.6" stroke="#545454" stroke-width="1"/><path d="M1227.2,407.9h1.6M1227.2,415.2h1.6M1227.2,422.6h1.6M1227.2,430.0h1.6M1227.2,437.4h1.6M1227.2,444.8h1.6M1227.2,452.1h1.6M1227.2,459.5h1.6M1227.2,466.9h1.6M1227.2,474.2h1.6M1227.2,481.6h1.6M1227.2,489.0h1.6M1227.2,496.4h1.6M1227.2,503.8h1.6M1227.2,511.1h1.6M1227.2,518.5h1.6M1227.2,525.9h1.6M1227.2,533.2h1.6M1227.2,540.6h1.6M1227.2,548.0h1.6M1227.2,555.4h1.6M1227.2,562.8h1.6M1227.2,570.1h1.6M1227.2,577.5h1.6M1227.2,584.9h1.6M1227.2,592.2h1.6M1227.2,599.6h1.6M1227.2,607.0h1.6M1227.2,614.4h1.6M1227.2,621.8h1.6M1227.2,629.1h1.6M1227.2,636.5h1.6M1227.2,643.9h1.6M1227.2,651.2h1.6M1227.2,658.6h1.6M1227.2,666.0h1.6M1227.2,673.4h1.6M1227.2,680.8h1.6M1227.2,688.1h1.6M1227.2,695.5h1.6M1227.2,702.9h1.6M1227.2,710.2h1.6M1227.2,717.6h1.6M1227.2,725.0h1.6M1227.2,732.4h1.6M1227.2,739.8h1.6M1227.2,747.1h1.6M1227.2,754.5h1.6M1227.2,761.9h1.6M1227.2,769.2h1.6M1227.2,776.6h1.6M1227.2,784.0h1.6M1227.2,791.4h1.6M1227.2,798.8h1.6M1227.2,806.1h1.6M1227.2,813.5h1.6M1227.2,820.9h1.6M1227.2,828.2h1.6M1227.2,835.6h1.6M1227.2,843.0h1.6M1227.2,850.4h1.6M1227.2,857.8h1.6M1227.2,865.1h1.6M1227.2,872.5h1.6M1227.2,879.9h1.6M1227.2,887.2h1.6M1227.2,894.6h1.6M1227.2,902.0h1.6M1227.2,909.4h1.6M1227.2,916.8h1.6M1227.2,924.1h1.6M1227.2,931.5h1.6M1227.2,938.9h1.6M1227.2,946.2h1.6M1227.2,953.6h1.6M1227.2,961.0h1.6M1227.2,968.4h1.6M1227.2,975.8h1.6M1227.2,983.1h1.6" stroke="#545454" stroke-width="1"/><path d="M1401.6,407.9h1.6M1401.6,415.2h1.6M1401.6,422.6h1.6M1401.6,430.0h1.6M1401.6,437.4h1.6M1401.6,444.8h1.6M1401.6,452.1h1.6M1401.6,459.5h1.6M1401.6,466.9h1.6M1401.6,474.2h1.6M1401.6,481.6h1.6M1401.6,489.0h1.6M1401.6,496.4h1.6M1401.6,503.8h1.6M1401.6,511.1h1.6M1401.6,518.5h1.6M1401.6,525.9h1.6M1401.6,533.2h1.6M1401.6,540.6h1.6M1401.6,548.0h1.6M1401.6,555.4h1.6M1401.6,562.8h1.6M1401.6,570.1h1.6M1401.6,577.5h1.6M1401.6,584.9h1.6M1401.6,592.2h1.6M1401.6,599.6h1.6M1401.6,607.0h1.6M1401.6,614.4h1.6M1401.6,621.8h1.6M1401.6,629.1h1.6M1401.6,636.5h1.6M1401.6,643.9h1.6M1401.6,651.2h1.6M1401.6,658.6h1.6M1401.6,666.0h1.6M1401.6,673.4h1.6M1401.6,680.8h1.6M1401.6,688.1h1.6M1401.6,695.5h1.6M1401.6,702.9h1.6M1401.6,710.2h1.6M1401.6,717.6h1.6M1401.6,725.0h1.6M1401.6,732.4h1.6M1401.6,739.8h1.6M1401.6,747.1h1.6M1401.6,754.5h1.6M1401.6,761.9h1.6M1401.6,769.2h1.6M1401.6,776.6h1.6M1401.6,784.0h1.6M1401.6,791.4h1.6M1401.6,798.8h1.6M1401.6,806.1h1.6M1401.6,813.5h1.6M1401.6,820.9h1.6M1401.6,828.2h1.6M1401.6,835.6h1.6M1401.6,843.0h1.6M1401.6,850.4h1.6M1401.6,857.8h1.6M1401.6,865.1h1.6M1401.6,872.5h1.6M1401.6,879.9h1.6M1401.6,887.2h1.6M1401.6,894.6h1.6M1401.6,902.0h1.6M1401.6,909.4h1.6M1401.6,916.8h1.6M1401.6,924.1h1.6M1401.6,931.5h1.6M1401.6,938.9h1.6M1401.6,946.2h1.6M1401.6,953.6h1.6M1401.6,961.0h1.6M1401.6,968.4h1.6M1401.6,975.8h1.6M1401.6,983.1h1.6" stroke="#545454" stroke-width="1"/><path d="M1576.0,407.9h1.6M1576.0,415.2h1.6M1576.0,422.6h1.6M1576.0,430.0h1.6M1576.0,437.4h1.6M1576.0,444.8h1.6M1576.0,452.1h1.6M1576.0,459.5h1.6M1576.0,466.9h1.6M1576.0,474.2h1.6M1576.0,481.6h1.6M1576.0,489.0h1.6M1576.0,496.4h1.6M1576.0,503.8h1.6M1576.0,511.1h1.6M1576.0,518.5h1.6M1576.0,525.9h1.6M1576.0,533.2h1.6M1576.0,540.6h1.6M1576.0,548.0h1.6M1576.0,555.4h1.6M1576.0,562.8h1.6M1576.0,570.1h1.6M1576.0,577.5h1.6M1576.0,584.9h1.6M1576.0,592.2h1.6M1576.0,599.6h1.6M1576.0,607.0h1.6M1576.0,614.4h1.6M1576.0,621.8h1.6M1576.0,629.1h1.6M1576.0,636.5h1.6M1576.0,643.9h1.6M1576.0,651.2h1.6M1576.0,658.6h1.6M1576.0,666.0h1.6M1576.0,673.4h1.6M1576.0,680.8h1.6M1576.0,688.1h1.6M1576.0,695.5h1.6M1576.0,702.9h1.6M1576.0,710.2h1.6M1576.0,717.6h1.6M1576.0,725.0h1.6M1576.0,732.4h1.6M1576.0,739.8h1.6M1576.0,747.1h1.6M1576.0,754.5h1.6M1576.0,761.9h1.6M1576.0,769.2h1.6M1576.0,776.6h1.6M1576.0,784.0h1.6M1576.0,791.4h1.6M1576.0,798.8h1.6M1576.0,806.1h1.6M1576.0,813.5h1.6M1576.0,820.9h1.6M1576.0,828.2h1.6M1576.0,835.6h1.6M1576.0,843.0h1.6M1576.0,850.4h1.6M1576.0,857.8h1.6M1576.0,865.1h1.6M1576.0,872.5h1.6M1576.0,879.9h1.6M1576.0,887.2h1.6M1576.0,894.6h1.6M1576.0,902.0h1.6M1576.0,909.4h1.6M1576.0,916.8h1.6M1576.0,924.1h1.6M1576.0,931.5h1.6M1576.0,938.9h1.6M1576.0,946.2h1.6M1576.0,953.6h1.6M1576.0,961.0h1.6M1576.0,968.4h1.6M1576.0,975.8h1.6M1576.0,983.1h1.6" stroke="#545454" stroke-width="1"/><path d="M7.2,112.6h5M1751.2,112.6h-5M7.2,119.2h5M1751.2,119.2h-5M7.2,125.9h5M1751.2,125.9h-5M7.2,132.5h5M1751.2,132.5h-5M7.2,139.1h8M1751.2,139.1h-8M7.2,145.8h5M1751.2,145.8h-5M7.2,152.4h5M1751.2,152.4h-5M7.2,159.0h5M1751.2,159.0h-5M7.2,165.6h5M1751.2,165.6h-5M7.2,172.2h8M1751.2,172.2h-8M7.2,178.9h5M1751.2,178.9h-5M7.2,185.5h5M1751.2,185.5h-5M7.2,192.1h5M1751.2,192.1h-5M7.2,198.8h5M1751.2,198.8h-5M7.2,205.4h8M1751.2,205.4h-8M7.2,212.0h5M1751.2,212.0h-5M7.2,218.6h5M1751.2,218.6h-5M7.2,225.2h5M1751.2,225.2h-5M7.2,231.9h5M1751.2,231.9h-5M7.2,238.5h8M1751.2,238.5h-8M7.2,245.1h5M1751.2,245.1h-5M7.2,251.8h5M1751.2,251.8h-5M7.2,258.4h5M1751.2,258.4h-5M7.2,265.0h5M1751.2,265.0h-5M7.2,271.6h8M1751.2,271.6h-8M7.2,278.2h5M1751.2,278.2h-5M7.2,284.9h5M1751.2,284.9h-5M7.2,291.5h5M1751.2,291.5h-5M7.2,298.1h5M1751.2,298.1h-5M7.2,304.8h8M1751.2,304.8h-8M7.2,311.4h5M1751.2,311.4h-5M7.2,318.0h5M1751.2,318.0h-5M7.2,324.6h5M1751.2,324.6h-5M7.2,331.2h5M1751.2,331.2h-5M7.2,337.9h8M1751.2,337.9h-8M7.2,344.5h5M1751.2,344.5h-5M7.2,351.1h5M1751.2,351.1h-5M7.2,357.8h5M1751.2,357.8h-5M7.2,364.4h5M1751.2,364.4h-5" stroke="#7fa6e6" stroke-width="1" opacity="0.35"/><path d="M7.2,415.2h5M1751.2,415.2h-5M7.2,430.0h5M1751.2,430.0h-5M7.2,444.8h5M1751.2,444.8h-5M7.2,459.5h5M1751.2,459.5h-5M7.2,474.2h8M1751.2,474.2h-8M7.2,489.0h5M1751.2,489.0h-5M7.2,503.8h5M1751.2,503.8h-5M7.2,518.5h5M1751.2,518.5h-5M7.2,533.2h5M1751.2,533.2h-5M7.2,548.0h8M1751.2,548.0h-8M7.2,562.8h5M1751.2,562.8h-5M7.2,577.5h5M1751.2,577.5h-5M7.2,592.2h5M1751.2,592.2h-5M7.2,607.0h5M1751.2,607.0h-5M7.2,621.8h8M1751.2,621.8h-8M7.2,636.5h5M1751.2,636.5h-5M7.2,651.2h5M1751.2,651.2h-5M7.2,666.0h5M1751.2,666.0h-5M7.2,680.8h5M1751.2,680.8h-5M7.2,695.5h8M1751.2,695.5h-8M7.2,710.2h5M1751.2,710.2h-5M7.2,725.0h5M1751.2,725.0h-5M7.2,739.8h5M1751.2,739.8h-5M7.2,754.5h5M1751.2,754.5h-5M7.2,769.2h8M1751.2,769.2h-8M7.2,784.0h5M1751.2,784.0h-5M7.2,798.8h5M1751.2,798.8h-5M7.2,813.5h5M1751.2,813.5h-5M7.2,828.2h5M1751.2,828.2h-5M7.2,843.0h8M1751.2,843.0h-8M7.2,857.8h5M1751.2,857.8h-5M7.2,872.5h5M1751.2,872.5h-5M7.2,887.2h5M1751.2,887.2h-5M7.2,902.0h5M1751.2,902.0h-5M7.2,916.8h8M1751.2,916.8h-8M7.2,931.5h5M1751.2,931.5h-5M7.2,946.2h5M1751.2,946.2h-5M7.2,961.0h5M1751.2,961.0h-5M7.2,975.8h5M1751.2,975.8h-5" stroke="#9a9a9a" stroke-width="1" opacity="1"/><path d="M7.5,401V990M1750.7,401V990" stroke="#c8c8c8" stroke-width="1"/><text x="1741.5" y="344.9" font-size="16" text-anchor="end" fill="#5c8ee0">-300mV</text><text x="1741.5" y="923.2" font-size="16" text-anchor="end" fill="#f6f63a">-300mV</text><g filter="url(#blur1)"><polygon points="7.2,921.2 8.2,920.6 9.2,920.8 10.2,921.7 11.2,921.7 12.2,921.7 13.2,921.0 14.2,921.6 15.2,920.7 16.2,920.8 17.2,920.0 18.2,920.3 19.2,921.5 20.2,921.2 21.2,921.5 22.2,920.6 23.2,920.8 24.2,921.7 25.2,920.6 26.2,921.2 27.2,921.0 28.2,920.4 29.2,921.4 30.2,920.9 31.2,920.5 32.2,920.0 33.2,921.0 34.2,921.5 35.2,921.7 36.2,920.4 37.2,920.2 38.2,920.5 39.2,920.8 40.2,920.3 41.2,920.9 42.2,921.7 43.2,920.6 44.2,920.3 45.2,921.1 46.2,921.8 47.2,921.5 48.2,921.7 49.2,921.6 50.2,921.1 51.2,921.7 52.2,920.8 53.2,920.3 54.2,921.3 55.2,921.2 56.2,920.1 57.2,921.5 58.2,921.4 59.2,920.7 60.2,921.8 61.2,921.1 62.2,920.1 63.2,920.9 64.2,920.6 65.2,920.2 66.2,920.2 67.2,921.1 68.2,921.6 69.2,921.7 70.2,921.4 71.2,921.2 72.2,921.8 73.2,921.6 74.2,921.8 75.2,920.7 76.2,921.3 77.2,921.1 78.2,920.3 79.2,921.0 80.2,921.6 81.2,921.2 82.2,920.3 83.2,921.8 84.2,920.8 85.2,920.8 86.2,920.8 87.2,920.2 88.2,921.3 89.2,921.5 90.2,920.8 91.2,921.2 92.2,920.3 93.2,920.3 94.2,920.3 95.2,921.4 96.2,921.2 97.2,921.7 98.2,921.3 99.2,920.1 100.2,920.1 101.2,920.1 102.2,921.4 103.2,921.4 104.2,920.7 105.2,920.3 106.2,920.6 107.2,921.6 108.2,920.2 109.2,920.4 110.2,921.5 111.2,921.2 112.2,920.1 113.2,921.1 114.2,920.5 115.2,921.6 116.2,920.2 117.2,921.5 118.2,920.0 119.2,921.2 120.2,921.6 121.2,920.1 122.2,920.9 123.2,921.0 124.2,920.3 125.2,921.3 126.2,921.4 127.2,921.3 128.2,921.6 129.2,921.2 130.2,920.7 131.2,921.0 132.2,920.9 133.2,920.9 134.2,921.0 135.2,921.8 136.2,921.5 137.2,920.5 138.2,921.2 139.2,920.8 140.2,921.6 141.2,921.4 142.2,920.4 143.2,920.8 144.2,920.2 145.2,920.7 146.2,920.9 147.2,921.0 148.2,920.9 149.2,920.5 150.2,920.1 151.2,920.8 152.2,920.3 153.2,921.6 154.2,921.7 155.2,921.7 156.2,920.4 157.2,921.5 158.2,920.6 159.2,920.2 160.2,921.4 161.2,921.1 162.2,920.0 163.2,921.5 164.2,920.9 165.2,921.4 166.2,920.5 167.2,920.8 168.2,921.8 169.2,920.7 170.2,921.7 171.2,920.4 172.2,921.6 173.2,921.7 174.2,921.3 175.2,921.0 176.2,920.3 177.2,921.5 178.2,920.8 179.2,921.6 180.2,920.6 181.2,921.7 182.2,920.7 183.2,921.6 184.2,921.7 185.2,921.0 186.2,920.8 187.2,921.3 188.2,920.9 189.2,921.6 190.2,921.7 191.2,921.2 192.2,920.4 193.2,920.9 194.2,921.2 195.2,921.3 196.2,920.5 197.2,921.5 198.2,920.1 199.2,920.3 200.2,920.9 201.2,921.1 202.2,920.6 203.2,921.2 204.2,920.5 205.2,921.1 206.2,921.7 207.2,921.7 208.2,921.3 209.2,921.6 210.2,920.2 211.2,921.3 212.2,921.3 213.2,921.5 214.2,921.3 215.2,920.0 216.2,921.4 217.2,921.2 218.2,921.8 219.2,920.9 220.2,921.4 221.2,921.8 222.2,921.6 223.2,921.7 224.2,921.3 225.2,920.7 226.2,920.4 227.2,920.5 228.2,921.1 229.2,920.0 230.2,920.5 231.2,921.7 232.2,920.2 233.2,920.5 234.2,921.5 235.2,920.9 236.2,920.4 237.2,920.7 238.2,920.6 239.2,921.4 240.2,921.6 241.2,921.6 242.2,920.8 243.2,920.7 244.2,920.9 245.2,920.4 246.2,920.9 247.2,920.6 248.2,920.5 249.2,921.7 250.2,920.5 251.2,920.5 252.2,920.9 253.2,920.9 254.2,920.4 255.2,920.6 256.2,921.5 257.2,920.5 258.2,920.8 259.2,921.7 260.2,920.6 261.2,920.6 262.2,920.9 263.2,921.0 264.2,920.2 265.2,920.0 266.2,921.8 267.2,920.3 268.2,921.0 269.2,921.4 270.2,921.4 271.2,921.5 272.2,920.1 273.2,920.3 274.2,920.2 275.2,921.4 276.2,920.9 277.2,921.8 278.2,921.0 279.2,921.5 280.2,921.2 281.2,921.8 282.2,920.3 283.2,920.1 284.2,920.2 285.2,921.1 286.2,920.0 287.2,921.2 288.2,921.3 289.2,921.6 290.2,921.3 291.2,921.4 292.2,920.9 293.2,921.1 294.2,920.2 295.2,920.7 296.2,920.1 297.2,920.5 298.2,920.5 299.2,920.4 300.2,921.3 301.2,920.1 302.2,921.0 303.2,921.3 304.2,920.0 305.2,920.6 306.2,920.8 307.2,921.5 308.2,921.4 309.2,920.9 310.2,920.2 311.2,921.0 312.2,921.5 313.2,921.2 314.2,921.4 315.2,920.8 316.2,920.5 317.2,921.1 318.2,921.1 319.2,921.7 320.2,920.1 321.2,920.9 322.2,920.2 323.2,921.3 324.2,921.1 325.2,920.1 326.2,920.2 327.2,921.7 328.2,920.2 329.2,920.7 330.2,921.1 331.2,920.3 332.2,920.0 333.2,921.6 334.2,920.9 335.2,920.1 336.2,920.6 337.2,921.0 338.2,921.7 339.2,921.4 340.2,920.6 341.2,921.6 342.2,920.7 343.2,921.6 344.2,920.9 345.2,921.1 346.2,920.7 347.2,921.3 348.2,920.1 349.2,920.2 350.2,921.4 351.2,920.1 352.2,921.2 353.2,920.9 354.2,921.0 355.2,920.6 356.2,921.4 357.2,921.2 358.2,920.6 359.2,920.4 360.2,920.9 361.2,920.1 362.2,920.3 363.2,921.4 364.2,921.3 365.2,920.9 366.2,921.4 367.2,920.6 368.2,921.5 369.2,921.4 370.2,921.5 371.2,921.7 372.2,920.2 373.2,920.5 374.2,920.1 375.2,921.5 376.2,920.5 377.2,920.6 378.2,921.1 379.2,921.5 380.2,921.3 381.2,920.1 382.2,920.1 383.2,921.2 384.2,920.3 385.2,921.7 386.2,921.1 387.2,921.5 388.2,920.2 389.2,921.1 390.2,920.4 391.2,921.7 392.2,920.1 393.2,920.5 394.2,921.2 395.2,920.1 396.2,921.3 397.2,921.2 398.2,921.8 399.2,920.2 400.2,920.1 401.2,921.4 402.2,920.1 403.2,921.1 404.2,921.0 405.2,920.1 406.2,920.4 407.2,920.3 408.2,920.7 409.2,921.2 410.2,920.4 411.2,921.4 412.2,921.4 413.2,921.7 414.2,921.2 415.2,920.2 416.2,921.3 417.2,921.6 418.2,920.5 419.2,921.4 420.2,920.7 421.2,920.5 422.2,920.6 423.2,920.3 424.2,920.8 425.2,920.5 426.2,921.4 427.2,921.5 428.2,920.8 429.2,921.1 430.2,920.9 431.2,920.3 432.2,920.0 433.2,920.9 434.2,920.3 435.2,921.7 436.2,921.6 437.2,920.0 438.2,920.1 439.2,920.2 440.2,921.3 441.2,920.1 442.2,920.7 443.2,921.4 444.2,921.5 445.2,921.3 446.2,920.6 447.2,921.8 448.2,920.6 449.2,921.2 450.2,920.4 451.2,921.7 452.2,921.1 453.2,920.6 454.2,921.5 455.2,921.1 456.2,921.2 457.2,921.2 458.2,921.2 459.2,920.2 460.2,921.1 461.2,920.5 462.2,921.8 463.2,921.0 464.2,921.1 465.2,921.0 466.2,921.8 467.2,920.6 468.2,921.6 469.2,921.1 470.2,921.5 471.2,920.9 472.2,921.6 473.2,920.4 474.2,921.4 475.2,920.1 476.2,920.9 477.2,920.1 478.2,920.2 479.2,920.3 480.2,920.4 481.2,921.1 482.2,920.3 483.2,921.4 484.2,920.9 485.2,921.6 486.2,920.5 487.2,921.7 488.2,920.4 489.2,920.3 490.2,920.7 491.2,920.7 492.2,921.0 493.2,921.0 494.2,921.0 495.2,921.8 496.2,920.9 497.2,920.4 498.2,921.0 499.2,920.9 500.2,921.6 501.2,921.6 502.2,920.9 503.2,920.7 504.2,920.5 505.2,920.9 506.2,920.9 507.2,920.1 508.2,920.3 509.2,920.5 510.2,921.5 511.2,920.9 512.2,920.2 513.2,920.4 514.2,921.7 515.2,920.4 516.2,920.2 517.2,920.3 518.2,920.9 519.2,921.4 520.2,920.9 521.2,921.7 522.2,921.5 523.2,920.6 524.2,921.5 525.2,921.6 526.2,920.7 527.2,920.2 528.2,920.8 529.2,921.6 530.2,920.7 531.2,920.4 532.2,920.0 533.2,921.2 534.2,921.0 535.2,920.5 536.2,920.3 537.2,920.6 538.2,920.7 539.2,921.2 540.2,921.7 541.2,920.7 542.2,920.9 543.2,921.6 544.2,920.6 545.2,921.8 546.2,921.6 547.2,921.4 548.2,920.7 549.2,920.7 550.2,921.6 551.2,921.4 552.2,921.6 553.2,920.2 554.2,921.1 555.2,921.8 556.2,920.8 557.2,920.6 558.2,920.1 559.2,921.4 560.2,921.7 561.2,921.1 562.2,921.7 563.2,921.8 564.2,920.1 565.2,921.4 566.2,920.9 567.2,920.3 568.2,921.2 569.2,921.7 570.2,920.4 571.2,921.8 572.2,920.5 573.2,920.5 574.2,921.4 575.2,921.4 576.2,921.2 576.2,934.1 575.2,932.9 574.2,933.0 573.2,933.6 572.2,933.6 571.2,934.3 570.2,934.1 569.2,934.4 568.2,933.3 567.2,933.1 566.2,934.0 565.2,933.9 564.2,933.1 563.2,933.8 562.2,934.2 561.2,933.2 560.2,933.8 559.2,934.4 558.2,934.1 557.2,933.6 556.2,933.4 555.2,934.0 554.2,933.3 553.2,934.2 552.2,933.9 551.2,933.1 550.2,934.5 549.2,933.7 548.2,933.2 547.2,933.9 546.2,933.4 545.2,933.4 544.2,932.8 543.2,933.2 542.2,934.4 541.2,933.6 540.2,933.1 539.2,932.8 538.2,934.0 537.2,934.6 536.2,933.3 535.2,932.9 534.2,933.1 533.2,934.2 532.2,933.8 531.2,933.3 530.2,933.5 529.2,934.6 528.2,934.4 527.2,933.8 526.2,933.4 525.2,933.8 524.2,934.2 523.2,934.4 522.2,934.5 521.2,933.1 520.2,933.4 519.2,933.3 518.2,934.5 517.2,933.1 516.2,933.3 515.2,933.1 514.2,933.4 513.2,934.5 512.2,933.1 511.2,934.5 510.2,934.6 509.2,934.3 508.2,934.6 507.2,933.0 506.2,933.5 505.2,932.9 504.2,934.2 503.2,932.9 502.2,932.9 501.2,933.6 500.2,933.6 499.2,933.0 498.2,933.1 497.2,934.2 496.2,933.2 495.2,933.9 494.2,933.6 493.2,934.0 492.2,933.8 491.2,933.4 490.2,933.8 489.2,933.0 488.2,932.9 487.2,933.8 486.2,934.4 485.2,933.2 484.2,933.5 483.2,933.5 482.2,933.1 481.2,934.3 480.2,933.2 479.2,933.1 478.2,933.9 477.2,933.5 476.2,932.9 475.2,934.6 474.2,933.0 473.2,934.5 472.2,933.7 471.2,934.5 470.2,933.3 469.2,933.7 468.2,933.9 467.2,934.4 466.2,933.8 465.2,933.1 464.2,934.4 463.2,934.3 462.2,934.4 461.2,933.2 460.2,933.2 459.2,934.6 458.2,933.5 457.2,933.8 456.2,934.5 455.2,933.3 454.2,934.1 453.2,933.0 452.2,933.8 451.2,933.0 450.2,933.8 449.2,933.2 448.2,933.1 447.2,933.4 446.2,933.2 445.2,933.9 444.2,933.2 443.2,933.5 442.2,933.9 441.2,933.0 440.2,934.2 439.2,933.6 438.2,933.5 437.2,933.8 436.2,933.1 435.2,933.3 434.2,934.4 433.2,934.3 432.2,933.0 431.2,934.0 430.2,933.2 429.2,934.6 428.2,933.4 427.2,934.4 426.2,933.2 425.2,933.2 424.2,933.5 423.2,933.3 422.2,933.0 421.2,934.3 420.2,934.0 419.2,933.6 418.2,933.6 417.2,933.7 416.2,933.0 415.2,934.6 414.2,934.6 413.2,933.8 412.2,932.9 411.2,934.2 410.2,932.9 409.2,933.5 408.2,933.4 407.2,934.2 406.2,934.1 405.2,933.1 404.2,933.7 403.2,933.3 402.2,934.5 401.2,933.7 400.2,932.8 399.2,933.9 398.2,934.2 397.2,933.3 396.2,934.1 395.2,933.9 394.2,933.3 393.2,934.4 392.2,933.3 391.2,932.9 390.2,932.9 389.2,934.3 388.2,932.9 387.2,933.5 386.2,934.5 385.2,933.7 384.2,933.6 383.2,934.3 382.2,933.2 381.2,933.0 380.2,933.4 379.2,932.8 378.2,933.4 377.2,933.5 376.2,932.9 375.2,934.5 374.2,933.4 373.2,934.6 372.2,934.4 371.2,933.5 370.2,932.9 369.2,934.6 368.2,933.5 367.2,934.5 366.2,933.6 365.2,933.1 364.2,934.5 363.2,934.2 362.2,933.2 361.2,933.4 360.2,933.2 359.2,934.1 358.2,933.2 357.2,933.6 356.2,932.9 355.2,934.5 354.2,933.3 353.2,934.0 352.2,932.8 351.2,934.1 350.2,933.2 349.2,933.7 348.2,934.0 347.2,933.6 346.2,932.8 345.2,933.2 344.2,933.8 343.2,932.9 342.2,934.1 341.2,933.3 340.2,933.3 339.2,934.5 338.2,934.2 337.2,933.8 336.2,934.2 335.2,934.1 334.2,934.0 333.2,933.1 332.2,933.2 331.2,934.3 330.2,934.5 329.2,932.8 328.2,933.7 327.2,934.1 326.2,932.8 325.2,934.3 324.2,933.6 323.2,933.2 322.2,933.2 321.2,933.9 320.2,933.0 319.2,933.3 318.2,933.4 317.2,933.7 316.2,933.5 315.2,934.4 314.2,933.3 313.2,933.0 312.2,933.0 311.2,933.1 310.2,934.6 309.2,933.2 308.2,934.4 307.2,933.1 306.2,933.5 305.2,933.3 304.2,933.3 303.2,934.1 302.2,933.4 301.2,933.0 300.2,932.9 299.2,934.0 298.2,933.6 297.2,932.9 296.2,933.8 295.2,934.4 294.2,934.3 293.2,934.5 292.2,933.1 291.2,933.3 290.2,934.5 289.2,934.3 288.2,932.9 287.2,933.6 286.2,933.9 285.2,933.5 284.2,933.3 283.2,934.1 282.2,933.0 281.2,934.2 280.2,934.3 279.2,933.4 278.2,933.3 277.2,933.7 276.2,932.8 275.2,934.4 274.2,934.1 273.2,933.7 272.2,933.0 271.2,933.7 270.2,933.8 269.2,934.5 268.2,933.3 267.2,934.5 266.2,933.6 265.2,934.5 264.2,933.2 263.2,933.0 262.2,933.6 261.2,933.3 260.2,934.0 259.2,933.3 258.2,932.8 257.2,933.3 256.2,933.3 255.2,932.9 254.2,933.9 253.2,934.0 252.2,933.5 251.2,934.6 250.2,933.2 249.2,933.3 248.2,933.3 247.2,932.9 246.2,933.8 245.2,934.1 244.2,932.8 243.2,934.0 242.2,933.9 241.2,934.3 240.2,933.4 239.2,932.9 238.2,934.0 237.2,934.4 236.2,934.3 235.2,934.3 234.2,933.7 233.2,934.3 232.2,933.9 231.2,934.3 230.2,934.0 229.2,933.1 228.2,933.4 227.2,934.4 226.2,934.0 225.2,933.8 224.2,933.2 223.2,932.8 222.2,933.5 221.2,933.3 220.2,933.7 219.2,933.7 218.2,933.5 217.2,933.4 216.2,934.5 215.2,933.8 214.2,934.5 213.2,933.6 212.2,933.6 211.2,933.2 210.2,934.0 209.2,934.3 208.2,933.1 207.2,934.1 206.2,933.0 205.2,933.4 204.2,933.9 203.2,934.3 202.2,934.6 201.2,933.7 200.2,934.3 199.2,933.6 198.2,933.0 197.2,933.7 196.2,933.8 195.2,932.8 194.2,932.8 193.2,933.1 192.2,933.3 191.2,933.3 190.2,933.2 189.2,933.1 188.2,933.2 187.2,933.0 186.2,934.5 185.2,933.4 184.2,934.4 183.2,934.3 182.2,934.2 181.2,934.5 180.2,933.6 179.2,932.9 178.2,934.1 177.2,934.5 176.2,933.3 175.2,934.4 174.2,933.0 173.2,934.2 172.2,933.3 171.2,934.5 170.2,934.6 169.2,933.7 168.2,933.4 167.2,933.6 166.2,932.8 165.2,933.4 164.2,933.4 163.2,933.6 162.2,934.3 161.2,933.7 160.2,934.5 159.2,934.5 158.2,933.1 157.2,934.1 156.2,934.4 155.2,934.0 154.2,933.2 153.2,933.6 152.2,933.0 151.2,934.5 150.2,933.3 149.2,934.4 148.2,934.5 147.2,933.8 146.2,934.0 145.2,933.7 144.2,933.6 143.2,934.2 142.2,933.7 141.2,933.3 140.2,933.8 139.2,934.2 138.2,933.7 137.2,933.8 136.2,933.7 135.2,934.2 134.2,933.1 133.2,932.8 132.2,933.8 131.2,934.5 130.2,934.4 129.2,933.6 128.2,934.4 127.2,933.6 126.2,933.9 125.2,933.3 124.2,933.2 123.2,934.4 122.2,934.5 121.2,934.0 120.2,932.8 119.2,933.8 118.2,934.0 117.2,934.3 116.2,934.3 115.2,933.1 114.2,933.1 113.2,934.5 112.2,933.5 111.2,934.2 110.2,934.2 109.2,933.7 108.2,934.2 107.2,934.0 106.2,934.2 105.2,933.7 104.2,934.4 103.2,933.2 102.2,933.2 101.2,933.5 100.2,934.6 99.2,933.6 98.2,934.0 97.2,933.3 96.2,932.9 95.2,933.7 94.2,934.1 93.2,934.3 92.2,934.6 91.2,933.2 90.2,934.2 89.2,934.2 88.2,933.5 87.2,934.1 86.2,934.6 85.2,932.8 84.2,933.1 83.2,934.5 82.2,933.1 81.2,933.3 80.2,933.0 79.2,933.7 78.2,934.6 77.2,933.0 76.2,933.4 75.2,933.1 74.2,934.4 73.2,933.5 72.2,933.1 71.2,932.9 70.2,933.1 69.2,932.9 68.2,933.9 67.2,933.5 66.2,934.2 65.2,934.2 64.2,932.9 63.2,933.9 62.2,934.0 61.2,933.8 60.2,933.6 59.2,933.3 58.2,933.7 57.2,933.2 56.2,933.1 55.2,934.4 54.2,933.5 53.2,934.4 52.2,934.4 51.2,933.6 50.2,934.4 49.2,933.2 48.2,934.2 47.2,933.0 46.2,933.6 45.2,934.0 44.2,933.3 43.2,934.6 42.2,934.1 41.2,934.0 40.2,934.5 39.2,933.6 38.2,933.9 37.2,933.4 36.2,933.8 35.2,934.0 34.2,933.7 33.2,934.2 32.2,933.0 31.2,933.3 30.2,934.4 29.2,933.8 28.2,934.1 27.2,933.3 26.2,933.9 25.2,933.6 24.2,933.2 23.2,932.9 22.2,933.5 21.2,933.8 20.2,934.3 19.2,933.0 18.2,933.3 17.2,932.9 16.2,933.5 15.2,934.5 14.2,933.2 13.2,934.3 12.2,933.0 11.2,933.6 10.2,933.7 9.2,933.5 8.2,932.9 7.2,933.1" fill="#f4f40a"/><polygon points="597.0,455.2 598.0,455.3 599.0,455.7 600.0,455.3 601.0,456.3 602.0,455.1 603.0,455.3 604.0,456.5 605.0,455.7 606.0,455.8 607.0,455.6 608.0,456.8 609.0,456.2 610.0,456.2 611.0,456.6 612.0,456.2 613.0,456.8 614.0,456.6 615.0,457.3 616.0,457.6 617.0,457.5 618.0,457.6 619.0,457.3 620.0,457.9 621.0,456.7 622.0,456.8 623.0,458.0 624.0,457.5 625.0,456.7 626.0,458.1 627.0,456.6 628.0,458.1 629.0,458.2 630.0,456.9 631.0,457.3 632.0,457.4 633.0,458.4 634.0,457.2 635.0,458.0 636.0,458.6 637.0,458.2 638.0,458.1 639.0,457.0 640.0,457.3 641.0,458.8 642.0,458.1 643.0,458.3 644.0,458.0 645.0,457.4 646.0,457.5 647.0,459.0 648.0,457.7 649.0,459.1 650.0,458.3 651.0,458.8 652.0,458.6 653.0,458.8 654.0,458.7 655.0,458.0 656.0,459.1 657.0,459.2 658.0,458.1 659.0,458.3 660.0,458.7 661.0,457.8 662.0,457.9 663.0,459.1 664.0,457.9 665.0,458.9 666.0,459.2 667.0,458.6 668.0,458.3 669.0,459.0 670.0,459.4 671.0,458.5 672.0,459.4 673.0,458.3 674.0,459.5 675.0,458.2 676.0,459.4 677.0,458.5 678.0,459.6 679.0,459.4 680.0,458.9 681.0,459.3 682.0,458.2 683.0,459.7 684.0,459.8 685.0,458.2 686.0,458.7 687.0,459.6 688.0,459.8 689.0,459.3 690.0,459.3 691.0,458.8 692.0,458.9 693.0,459.8 694.0,459.4 695.0,458.5 696.0,459.1 697.0,459.4 698.0,458.9 699.0,458.8 700.0,458.7 701.0,459.1 702.0,459.7 703.0,460.1 704.0,458.8 705.0,459.1 706.0,459.5 707.0,459.2 708.0,459.1 709.0,460.0 710.0,458.9 711.0,459.4 712.0,460.3 713.0,460.1 714.0,458.7 715.0,460.2 716.0,459.4 717.0,459.5 718.0,458.9 719.0,459.7 720.0,460.0 721.0,459.7 722.0,460.2 723.0,459.8 724.0,460.0 725.0,460.4 726.0,459.7 727.0,459.9 728.0,460.1 729.0,458.8 730.0,460.1 731.0,459.8 732.0,460.3 733.0,459.1 734.0,459.7 735.0,460.1 736.0,459.9 737.0,459.1 738.0,459.7 739.0,459.6 740.0,459.1 741.0,459.1 742.0,459.9 743.0,459.8 744.0,460.6 745.0,460.1 746.0,460.1 747.0,459.9 748.0,459.5 749.0,459.0 750.0,460.5 751.0,459.0 752.0,460.4 753.0,459.5 754.0,460.7 755.0,459.5 756.0,460.5 757.0,460.3 758.0,460.1 759.0,459.1 760.0,460.4 761.0,459.6 762.0,459.5 763.0,459.3 764.0,460.4 765.0,459.8 766.0,459.9 767.0,459.7 768.0,460.3 769.0,459.9 770.0,459.9 771.0,459.9 772.0,459.8 773.0,460.7 774.0,459.9 775.0,459.6 776.0,460.1 777.0,459.0 778.0,459.6 779.0,460.7 780.0,459.6 781.0,460.2 782.0,459.9 783.0,459.2 784.0,459.5 785.0,460.2 786.0,460.1 787.0,459.9 788.0,460.4 789.0,460.1 790.0,459.3 791.0,459.3 792.0,459.9 793.0,459.9 794.0,459.7 795.0,460.2 796.0,460.3 797.0,459.7 798.0,460.8 799.0,459.3 800.0,460.8 801.0,460.8 802.0,459.2 803.0,459.7 804.0,459.2 805.0,459.7 806.0,459.6 807.0,459.6 808.0,459.7 809.0,459.5 810.0,460.5 811.0,459.5 812.0,459.7 813.0,459.4 814.0,459.9 815.0,460.3 816.0,460.3 817.0,459.7 818.0,460.8 819.0,460.8 820.0,459.4 821.0,459.2 822.0,460.9 823.0,459.8 824.0,459.1 825.0,460.2 826.0,459.7 827.0,460.6 828.0,460.9 829.0,460.7 830.0,460.7 831.0,460.7 832.0,459.6 833.0,459.6 834.0,460.8 835.0,459.6 836.0,459.6 837.0,459.8 838.0,460.1 839.0,460.5 840.0,459.6 841.0,460.9 842.0,459.5 843.0,460.4 844.0,460.6 845.0,460.1 846.0,460.3 847.0,460.1 848.0,460.7 849.0,460.3 850.0,459.8 851.0,460.2 852.0,459.2 853.0,459.9 854.0,460.8 855.0,459.7 856.0,460.3 857.0,459.2 858.0,459.9 859.0,460.2 860.0,460.3 861.0,459.9 862.0,459.5 863.0,460.9 864.0,460.2 865.0,459.5 866.0,460.9 867.0,459.5 868.0,459.9 869.0,459.4 870.0,459.7 871.0,460.3 872.0,460.0 873.0,460.6 874.0,459.3 875.0,459.9 876.0,460.1 877.0,460.5 878.0,459.5 879.0,460.8 880.0,459.6 881.0,459.9 882.0,459.4 883.0,460.1 884.0,460.6 885.0,460.6 886.0,460.3 887.0,460.2 888.0,460.7 889.0,459.2 890.0,460.8 891.0,459.5 892.0,459.9 893.0,460.0 894.0,460.9 895.0,459.4 896.0,459.9 897.0,459.6 898.0,459.3 899.0,459.5 900.0,460.5 901.0,460.6 902.0,460.8 903.0,460.0 904.0,460.1 905.0,459.3 906.0,459.9 907.0,460.8 908.0,460.5 909.0,459.8 910.0,459.8 911.0,460.2 912.0,459.2 913.0,460.6 914.0,460.5 915.0,459.4 916.0,459.5 917.0,459.6 918.0,459.8 919.0,460.9 920.0,459.6 921.0,459.8 922.0,459.9 923.0,460.8 924.0,460.5 925.0,460.1 925.0,472.3 924.0,472.2 923.0,472.6 922.0,473.3 921.0,472.5 920.0,473.7 919.0,472.2 918.0,473.8 917.0,473.3 916.0,472.1 915.0,473.6 914.0,472.6 913.0,472.0 912.0,473.8 911.0,472.3 910.0,472.7 909.0,473.7 908.0,473.0 907.0,473.7 906.0,472.7 905.0,472.1 904.0,473.7 903.0,473.5 902.0,472.1 901.0,472.3 900.0,472.0 899.0,473.7 898.0,473.4 897.0,472.7 896.0,472.4 895.0,472.8 894.0,473.8 893.0,472.0 892.0,472.6 891.0,472.2 890.0,473.1 889.0,472.6 888.0,472.0 887.0,472.9 886.0,473.0 885.0,473.2 884.0,472.3 883.0,473.0 882.0,472.9 881.0,473.6 880.0,472.4 879.0,473.4 878.0,472.8 877.0,473.3 876.0,472.3 875.0,473.2 874.0,472.4 873.0,473.3 872.0,473.4 871.0,472.1 870.0,473.6 869.0,473.4 868.0,472.4 867.0,473.5 866.0,473.4 865.0,473.5 864.0,473.0 863.0,472.4 862.0,472.5 861.0,473.6 860.0,473.2 859.0,473.5 858.0,472.5 857.0,473.4 856.0,473.0 855.0,473.4 854.0,473.7 853.0,472.5 852.0,473.3 851.0,473.3 850.0,472.7 849.0,473.1 848.0,473.4 847.0,473.1 846.0,473.0 845.0,472.0 844.0,473.5 843.0,473.2 842.0,472.1 841.0,473.1 840.0,471.9 839.0,473.7 838.0,473.6 837.0,473.2 836.0,472.1 835.0,473.5 834.0,473.3 833.0,472.2 832.0,472.3 831.0,471.9 830.0,473.5 829.0,473.6 828.0,473.1 827.0,471.9 826.0,472.3 825.0,472.1 824.0,472.8 823.0,473.6 822.0,472.6 821.0,472.7 820.0,472.9 819.0,472.1 818.0,472.9 817.0,473.6 816.0,472.7 815.0,472.6 814.0,472.3 813.0,473.3 812.0,472.5 811.0,473.5 810.0,471.9 809.0,472.1 808.0,472.7 807.0,472.2 806.0,472.9 805.0,473.0 804.0,473.0 803.0,473.3 802.0,472.9 801.0,472.2 800.0,472.4 799.0,472.8 798.0,473.1 797.0,473.3 796.0,472.9 795.0,472.4 794.0,473.3 793.0,473.6 792.0,472.3 791.0,472.5 790.0,472.3 789.0,472.8 788.0,472.6 787.0,473.2 786.0,472.7 785.0,473.4 784.0,472.9 783.0,471.9 782.0,472.7 781.0,473.6 780.0,473.5 779.0,472.9 778.0,472.9 777.0,471.9 776.0,472.5 775.0,473.3 774.0,472.8 773.0,473.3 772.0,473.3 771.0,472.6 770.0,472.0 769.0,471.8 768.0,472.0 767.0,472.2 766.0,473.3 765.0,473.1 764.0,473.0 763.0,473.2 762.0,473.3 761.0,473.1 760.0,473.3 759.0,473.1 758.0,472.0 757.0,473.1 756.0,471.9 755.0,472.1 754.0,473.4 753.0,471.7 752.0,473.2 751.0,473.1 750.0,473.1 749.0,473.2 748.0,472.3 747.0,472.8 746.0,472.5 745.0,472.1 744.0,472.9 743.0,471.9 742.0,472.1 741.0,472.1 740.0,472.2 739.0,471.8 738.0,472.1 737.0,473.0 736.0,472.7 735.0,473.3 734.0,472.6 733.0,472.7 732.0,472.9 731.0,471.9 730.0,473.0 729.0,472.5 728.0,472.8 727.0,472.0 726.0,472.7 725.0,472.2 724.0,472.2 723.0,471.6 722.0,473.2 721.0,472.8 720.0,472.7 719.0,473.1 718.0,472.3 717.0,472.5 716.0,472.7 715.0,472.4 714.0,472.3 713.0,472.8 712.0,472.3 711.0,473.1 710.0,472.0 709.0,472.5 708.0,473.0 707.0,472.0 706.0,472.1 705.0,471.7 704.0,472.5 703.0,472.0 702.0,472.3 701.0,472.0 700.0,472.4 699.0,472.4 698.0,472.7 697.0,471.6 696.0,472.5 695.0,471.9 694.0,472.4 693.0,472.2 692.0,471.9 691.0,472.0 690.0,472.5 689.0,471.1 688.0,471.4 687.0,472.1 686.0,471.8 685.0,472.4 684.0,471.6 683.0,472.7 682.0,472.2 681.0,471.2 680.0,471.2 679.0,471.4 678.0,471.1 677.0,472.3 676.0,471.3 675.0,471.2 674.0,471.6 673.0,471.8 672.0,471.5 671.0,472.0 670.0,472.2 669.0,471.2 668.0,471.8 667.0,472.0 666.0,471.4 665.0,472.1 664.0,471.4 663.0,471.0 662.0,470.5 661.0,470.6 660.0,471.1 659.0,471.0 658.0,471.8 657.0,471.8 656.0,471.5 655.0,471.2 654.0,470.6 653.0,471.9 652.0,471.7 651.0,471.1 650.0,471.6 649.0,471.0 648.0,471.8 647.0,470.4 646.0,470.3 645.0,470.1 644.0,470.3 643.0,471.2 642.0,471.3 641.0,470.6 640.0,470.9 639.0,470.7 638.0,470.3 637.0,471.0 636.0,470.1 635.0,470.4 634.0,469.9 633.0,469.7 632.0,470.0 631.0,470.9 630.0,470.9 629.0,469.4 628.0,469.7 627.0,471.0 626.0,470.8 625.0,470.8 624.0,470.6 623.0,470.1 622.0,470.4 621.0,470.1 620.0,469.0 619.0,469.1 618.0,470.5 617.0,468.8 616.0,470.4 615.0,469.8 614.0,469.2 613.0,469.9 612.0,470.0 611.0,469.9 610.0,470.1 609.0,469.6 608.0,469.9 607.0,468.8 606.0,468.7 605.0,469.8 604.0,468.4 603.0,468.0 602.0,468.3 601.0,468.9 600.0,468.7 599.0,468.4 598.0,468.1 597.0,469.0" fill="#f4f40a"/><polygon points="946.5,926.6 947.5,925.7 948.5,925.5 949.5,926.6 950.5,926.2 951.5,925.0 952.5,926.2 953.5,926.2 954.5,924.8 955.5,925.4 956.5,924.6 957.5,924.9 958.5,925.6 959.5,924.6 960.5,925.6 961.5,925.3 962.5,925.4 963.5,924.1 964.5,925.2 965.5,924.9 966.5,925.2 967.5,925.3 968.5,924.1 969.5,924.4 970.5,924.7 971.5,924.5 972.5,923.3 973.5,924.9 974.5,923.4 975.5,923.6 976.5,923.1 977.5,923.4 978.5,924.5 979.5,923.3 980.5,924.4 981.5,923.0 982.5,923.6 983.5,924.3 984.5,923.3 985.5,924.4 986.5,923.4 987.5,923.9 988.5,923.3 989.5,922.9 990.5,924.0 991.5,923.0 992.5,923.0 993.5,922.8 994.5,922.7 995.5,923.3 996.5,922.5 997.5,922.5 998.5,923.8 999.5,923.4 1000.5,923.4 1001.5,924.0 1002.5,923.2 1003.5,923.7 1004.5,922.5 1005.5,923.3 1006.5,923.2 1007.5,923.8 1008.5,922.1 1009.5,922.9 1010.5,922.8 1011.5,922.0 1012.5,923.4 1013.5,923.3 1014.5,923.7 1015.5,922.5 1016.5,923.7 1017.5,922.6 1018.5,922.4 1019.5,922.1 1020.5,923.5 1021.5,922.7 1022.5,923.1 1023.5,922.9 1024.5,922.5 1025.5,923.3 1026.5,922.2 1027.5,922.0 1028.5,922.8 1029.5,922.0 1029.5,935.4 1028.5,935.3 1027.5,936.2 1026.5,934.8 1025.5,935.6 1024.5,936.1 1023.5,934.8 1022.5,934.8 1021.5,935.5 1020.5,934.9 1019.5,935.9 1018.5,934.8 1017.5,935.6 1016.5,935.8 1015.5,935.1 1014.5,934.9 1013.5,936.2 1012.5,935.0 1011.5,935.2 1010.5,934.8 1009.5,935.8 1008.5,935.7 1007.5,936.4 1006.5,936.2 1005.5,936.2 1004.5,936.5 1003.5,936.2 1002.5,935.9 1001.5,935.9 1000.5,936.1 999.5,935.4 998.5,936.6 997.5,935.6 996.5,936.0 995.5,935.2 994.5,936.8 993.5,935.8 992.5,935.4 991.5,936.0 990.5,935.4 989.5,936.4 988.5,936.7 987.5,935.8 986.5,936.4 985.5,935.7 984.5,935.9 983.5,937.0 982.5,935.9 981.5,936.1 980.5,936.5 979.5,936.7 978.5,935.8 977.5,936.5 976.5,935.9 975.5,936.5 974.5,936.1 973.5,936.6 972.5,937.8 971.5,937.9 970.5,936.6 969.5,936.8 968.5,936.7 967.5,938.0 966.5,938.2 965.5,938.1 964.5,937.4 963.5,937.2 962.5,937.2 961.5,937.5 960.5,938.4 959.5,937.9 958.5,937.1 957.5,937.3 956.5,938.0 955.5,937.8 954.5,938.4 953.5,939.0 952.5,938.2 951.5,939.1 950.5,939.3 949.5,939.4 948.5,938.2 947.5,937.9 946.5,938.3" fill="#f4f40a"/><polygon points="1051.0,455.8 1052.0,455.2 1053.0,456.2 1054.0,455.9 1055.0,455.3 1056.0,455.4 1057.0,456.8 1058.0,455.3 1059.0,456.6 1060.0,456.0 1061.0,456.2 1062.0,456.5 1063.0,457.3 1064.0,455.6 1065.0,455.8 1066.0,456.0 1067.0,456.0 1068.0,456.5 1069.0,456.4 1070.0,456.7 1071.0,456.7 1072.0,456.9 1073.0,456.2 1074.0,457.4 1075.0,457.8 1076.0,456.3 1077.0,457.6 1078.0,457.2 1079.0,458.0 1080.0,457.7 1081.0,457.8 1082.0,458.2 1083.0,456.8 1084.0,457.4 1085.0,458.1 1086.0,457.7 1087.0,457.4 1088.0,458.0 1089.0,458.2 1090.0,458.0 1091.0,458.7 1092.0,457.2 1093.0,457.8 1094.0,458.3 1095.0,458.3 1096.0,458.6 1097.0,457.3 1098.0,458.8 1099.0,458.2 1100.0,458.8 1101.0,457.3 1102.0,458.8 1103.0,458.5 1104.0,458.0 1105.0,457.7 1106.0,457.9 1107.0,457.9 1108.0,457.8 1109.0,457.6 1110.0,457.7 1111.0,458.0 1112.0,458.5 1113.0,458.4 1114.0,458.0 1115.0,458.4 1116.0,458.7 1117.0,458.2 1118.0,458.8 1119.0,458.9 1120.0,458.2 1121.0,458.7 1122.0,459.3 1123.0,459.4 1124.0,458.6 1125.0,458.0 1126.0,458.2 1127.0,458.0 1128.0,459.0 1129.0,459.8 1130.0,458.8 1131.0,458.2 1132.0,458.9 1133.0,458.9 1134.0,458.6 1135.0,459.2 1136.0,459.3 1137.0,458.7 1138.0,459.8 1139.0,459.2 1140.0,458.9 1141.0,458.3 1142.0,459.2 1143.0,458.2 1144.0,459.1 1145.0,459.8 1146.0,458.3 1147.0,459.2 1148.0,458.5 1149.0,458.6 1150.0,458.5 1151.0,459.9 1152.0,459.2 1153.0,459.8 1154.0,459.1 1155.0,459.6 1156.0,459.1 1157.0,459.5 1158.0,459.7 1159.0,460.2 1160.0,458.8 1161.0,459.1 1162.0,459.4 1163.0,459.8 1164.0,459.4 1165.0,459.3 1166.0,460.1 1167.0,459.0 1168.0,460.2 1169.0,459.4 1170.0,459.3 1171.0,460.3 1172.0,459.0 1173.0,459.1 1174.0,460.1 1175.0,460.3 1176.0,459.4 1177.0,459.6 1178.0,460.4 1179.0,459.4 1180.0,459.7 1181.0,460.0 1182.0,458.8 1183.0,459.9 1184.0,459.0 1185.0,459.4 1186.0,459.6 1187.0,460.1 1188.0,459.2 1189.0,460.0 1190.0,459.7 1191.0,460.1 1192.0,459.9 1193.0,458.8 1194.0,459.6 1195.0,459.6 1196.0,459.9 1197.0,460.4 1198.0,460.0 1199.0,460.3 1200.0,460.2 1201.0,459.4 1202.0,460.4 1203.0,460.5 1204.0,459.1 1204.0,471.9 1203.0,472.1 1202.0,472.9 1201.0,472.2 1200.0,471.7 1199.0,472.1 1198.0,472.1 1197.0,473.1 1196.0,471.7 1195.0,472.3 1194.0,471.8 1193.0,472.1 1192.0,471.9 1191.0,471.9 1190.0,473.0 1189.0,473.1 1188.0,471.9 1187.0,472.2 1186.0,473.2 1185.0,473.2 1184.0,472.1 1183.0,473.1 1182.0,473.0 1181.0,471.6 1180.0,472.6 1179.0,473.2 1178.0,473.1 1177.0,472.1 1176.0,472.1 1175.0,473.1 1174.0,471.9 1173.0,472.0 1172.0,472.0 1171.0,471.4 1170.0,472.8 1169.0,472.9 1168.0,471.7 1167.0,471.5 1166.0,471.6 1165.0,472.1 1164.0,473.1 1163.0,472.5 1162.0,472.3 1161.0,471.6 1160.0,472.3 1159.0,471.8 1158.0,472.5 1157.0,472.6 1156.0,471.3 1155.0,473.0 1154.0,472.3 1153.0,471.5 1152.0,472.1 1151.0,471.7 1150.0,471.9 1149.0,472.9 1148.0,472.3 1147.0,471.3 1146.0,472.6 1145.0,471.6 1144.0,472.5 1143.0,471.6 1142.0,472.1 1141.0,471.9 1140.0,472.6 1139.0,472.0 1138.0,471.6 1137.0,471.9 1136.0,472.6 1135.0,472.0 1134.0,471.6 1133.0,471.8 1132.0,472.6 1131.0,472.2 1130.0,471.7 1129.0,470.9 1128.0,472.4 1127.0,471.1 1126.0,472.2 1125.0,471.3 1124.0,470.8 1123.0,471.7 1122.0,471.2 1121.0,471.4 1120.0,472.1 1119.0,471.1 1118.0,471.5 1117.0,471.0 1116.0,471.3 1115.0,471.1 1114.0,472.0 1113.0,471.2 1112.0,472.1 1111.0,471.4 1110.0,470.3 1109.0,470.5 1108.0,471.5 1107.0,471.1 1106.0,471.5 1105.0,471.1 1104.0,471.7 1103.0,471.3 1102.0,470.7 1101.0,471.4 1100.0,470.4 1099.0,471.3 1098.0,470.6 1097.0,470.7 1096.0,470.0 1095.0,471.2 1094.0,471.6 1093.0,470.6 1092.0,470.2 1091.0,470.3 1090.0,470.7 1089.0,470.5 1088.0,470.0 1087.0,470.4 1086.0,470.5 1085.0,470.7 1084.0,470.6 1083.0,470.5 1082.0,470.3 1081.0,469.7 1080.0,470.0 1079.0,469.4 1078.0,469.4 1077.0,469.9 1076.0,470.0 1075.0,470.1 1074.0,470.1 1073.0,469.4 1072.0,469.6 1071.0,469.2 1070.0,470.4 1069.0,469.2 1068.0,469.1 1067.0,468.6 1066.0,470.1 1065.0,469.6 1064.0,469.8 1063.0,468.6 1062.0,469.2 1061.0,468.3 1060.0,468.8 1059.0,468.8 1058.0,469.7 1057.0,468.9 1056.0,469.4 1055.0,469.4 1054.0,469.5 1053.0,468.3 1052.0,468.2 1051.0,469.2" fill="#f4f40a"/><polygon points="1226.0,926.7 1227.0,925.9 1228.0,926.6 1229.0,926.5 1230.0,926.7 1231.0,926.0 1232.0,926.0 1233.0,925.4 1234.0,925.0 1235.0,925.8 1236.0,925.3 1237.0,924.7 1238.0,925.3 1239.0,925.6 1240.0,925.3 1241.0,924.9 1242.0,925.2 1243.0,925.5 1244.0,925.1 1245.0,925.4 1246.0,924.9 1247.0,924.9 1248.0,924.8 1249.0,925.1 1250.0,924.7 1251.0,923.5 1252.0,923.5 1253.0,924.8 1254.0,924.9 1255.0,923.7 1256.0,924.1 1257.0,923.5 1258.0,923.2 1259.0,923.5 1260.0,924.4 1261.0,923.2 1262.0,924.4 1263.0,924.1 1264.0,923.8 1265.0,924.2 1266.0,923.1 1267.0,922.7 1268.0,922.9 1269.0,923.3 1270.0,923.4 1271.0,922.5 1272.0,923.5 1273.0,922.4 1274.0,923.8 1275.0,923.7 1276.0,923.4 1277.0,922.4 1278.0,922.5 1279.0,922.3 1280.0,923.2 1281.0,921.9 1282.0,921.9 1283.0,922.2 1284.0,922.4 1285.0,923.4 1286.0,922.7 1287.0,921.7 1288.0,922.0 1289.0,922.1 1290.0,922.9 1291.0,921.6 1292.0,922.3 1293.0,923.1 1294.0,922.5 1295.0,922.6 1296.0,921.9 1297.0,922.7 1298.0,922.2 1299.0,921.4 1300.0,922.5 1301.0,922.8 1302.0,922.4 1303.0,922.0 1304.0,922.7 1305.0,921.9 1306.0,921.6 1307.0,922.7 1308.0,922.2 1309.0,922.8 1310.0,922.5 1311.0,922.0 1312.0,922.2 1313.0,922.1 1314.0,922.6 1315.0,921.0 1316.0,922.6 1317.0,921.0 1318.0,922.5 1319.0,921.9 1320.0,921.7 1321.0,921.0 1322.0,921.5 1323.0,921.5 1324.0,922.2 1325.0,922.6 1326.0,921.1 1327.0,922.2 1328.0,921.0 1329.0,922.3 1330.0,921.1 1331.0,921.9 1332.0,921.0 1333.0,921.8 1334.0,921.8 1335.0,922.1 1336.0,921.5 1337.0,921.0 1338.0,920.8 1339.0,921.6 1340.0,922.2 1341.0,921.4 1342.0,921.2 1343.0,921.6 1344.0,922.2 1345.0,921.6 1346.0,921.1 1347.0,920.9 1348.0,920.9 1349.0,921.8 1350.0,921.4 1351.0,921.7 1352.0,921.1 1353.0,920.7 1354.0,921.8 1355.0,921.3 1356.0,922.0 1357.0,921.7 1358.0,920.5 1359.0,920.7 1360.0,920.5 1361.0,920.8 1362.0,921.1 1363.0,921.7 1364.0,920.5 1365.0,921.1 1366.0,921.6 1367.0,922.2 1368.0,921.0 1369.0,922.1 1370.0,921.6 1371.0,921.5 1372.0,921.2 1373.0,922.0 1374.0,920.6 1375.0,922.0 1376.0,921.7 1377.0,921.2 1378.0,921.3 1379.0,921.8 1380.0,922.0 1381.0,921.1 1382.0,921.4 1383.0,921.4 1384.0,921.2 1385.0,920.8 1386.0,920.4 1387.0,922.0 1388.0,921.4 1389.0,920.4 1390.0,920.7 1391.0,920.7 1392.0,921.7 1393.0,922.1 1394.0,921.7 1395.0,920.9 1396.0,920.5 1397.0,920.6 1398.0,920.5 1399.0,921.8 1400.0,921.5 1401.0,920.9 1402.0,921.9 1403.0,920.8 1404.0,920.8 1405.0,921.0 1406.0,921.1 1407.0,921.9 1408.0,920.9 1409.0,921.7 1410.0,920.6 1411.0,921.9 1412.0,921.9 1413.0,921.8 1414.0,921.6 1415.0,921.4 1416.0,920.5 1417.0,920.8 1418.0,920.4 1419.0,921.5 1420.0,921.2 1421.0,920.6 1422.0,921.7 1423.0,920.8 1424.0,921.2 1425.0,920.5 1426.0,920.5 1427.0,921.9 1428.0,921.7 1429.0,921.0 1430.0,921.8 1431.0,921.2 1432.0,921.4 1433.0,922.0 1434.0,921.5 1435.0,921.2 1436.0,922.0 1437.0,920.8 1438.0,921.6 1439.0,921.6 1440.0,921.1 1441.0,920.3 1442.0,921.0 1443.0,920.5 1444.0,920.9 1445.0,921.4 1446.0,920.6 1447.0,920.4 1448.0,921.5 1449.0,920.7 1450.0,920.9 1451.0,921.0 1452.0,921.9 1453.0,921.5 1454.0,921.2 1455.0,921.6 1456.0,921.4 1457.0,922.0 1458.0,921.2 1459.0,921.0 1460.0,921.7 1461.0,921.5 1462.0,920.7 1463.0,920.3 1464.0,920.4 1465.0,921.9 1466.0,921.0 1467.0,921.4 1468.0,921.3 1469.0,921.9 1470.0,920.4 1471.0,921.6 1472.0,921.7 1473.0,920.8 1474.0,921.3 1475.0,920.9 1476.0,920.9 1477.0,920.7 1478.0,920.9 1479.0,920.6 1480.0,921.4 1481.0,921.7 1482.0,920.4 1483.0,920.4 1484.0,921.4 1485.0,920.8 1486.0,920.8 1487.0,921.9 1488.0,921.9 1489.0,921.4 1490.0,920.9 1491.0,921.2 1492.0,920.3 1493.0,920.2 1494.0,920.9 1495.0,921.4 1496.0,921.7 1497.0,920.6 1498.0,920.5 1499.0,921.0 1500.0,921.0 1501.0,920.9 1502.0,920.7 1503.0,920.7 1504.0,920.6 1505.0,920.6 1506.0,921.2 1507.0,921.1 1508.0,921.8 1509.0,921.2 1510.0,920.6 1511.0,920.2 1512.0,920.6 1513.0,922.0 1514.0,921.9 1515.0,921.0 1516.0,920.3 1517.0,921.7 1518.0,920.7 1519.0,921.7 1520.0,920.6 1521.0,920.2 1522.0,920.9 1523.0,920.6 1524.0,921.4 1525.0,921.8 1526.0,921.9 1527.0,921.3 1528.0,921.9 1529.0,921.3 1530.0,920.3 1531.0,921.6 1532.0,921.5 1533.0,921.6 1534.0,920.6 1535.0,921.5 1536.0,921.6 1537.0,921.7 1538.0,920.4 1539.0,920.7 1540.0,921.5 1541.0,921.1 1542.0,921.7 1543.0,920.9 1544.0,921.0 1545.0,921.6 1546.0,921.4 1547.0,920.5 1548.0,920.4 1549.0,921.5 1550.0,921.8 1551.0,922.0 1552.0,921.7 1553.0,921.8 1554.0,920.8 1555.0,921.4 1556.0,920.7 1557.0,920.2 1558.0,921.6 1559.0,920.8 1560.0,921.1 1561.0,921.2 1562.0,922.0 1563.0,921.4 1564.0,921.8 1565.0,921.8 1566.0,921.7 1567.0,921.7 1568.0,921.1 1569.0,921.4 1570.0,920.3 1571.0,921.6 1572.0,920.4 1573.0,921.5 1574.0,921.5 1575.0,921.9 1576.0,921.3 1577.0,921.3 1578.0,920.8 1579.0,921.0 1580.0,920.8 1581.0,920.4 1582.0,921.3 1583.0,921.2 1584.0,921.3 1585.0,921.3 1586.0,920.2 1587.0,920.9 1588.0,921.5 1589.0,921.3 1590.0,921.6 1591.0,920.5 1592.0,920.4 1593.0,920.8 1594.0,920.8 1595.0,921.4 1596.0,922.0 1597.0,920.5 1598.0,920.9 1599.0,921.6 1600.0,920.7 1601.0,920.7 1602.0,921.1 1603.0,920.8 1604.0,920.9 1605.0,921.6 1606.0,921.5 1607.0,921.1 1608.0,921.1 1609.0,921.6 1610.0,920.3 1611.0,921.1 1612.0,920.5 1613.0,921.7 1614.0,921.2 1615.0,920.5 1616.0,920.4 1617.0,921.3 1618.0,920.5 1619.0,921.7 1620.0,921.8 1621.0,920.6 1622.0,921.2 1623.0,921.3 1624.0,920.7 1625.0,921.1 1626.0,920.6 1627.0,920.8 1628.0,921.1 1629.0,921.3 1630.0,921.3 1631.0,921.6 1632.0,921.9 1633.0,920.7 1634.0,921.4 1635.0,920.5 1636.0,920.9 1637.0,921.6 1638.0,920.6 1639.0,921.3 1640.0,921.2 1641.0,920.7 1642.0,921.3 1643.0,920.5 1644.0,921.3 1645.0,920.3 1646.0,920.3 1647.0,921.3 1648.0,921.4 1649.0,920.6 1650.0,921.1 1651.0,920.4 1652.0,922.0 1653.0,921.2 1654.0,920.5 1655.0,921.1 1656.0,921.2 1657.0,921.1 1658.0,920.8 1659.0,921.3 1660.0,920.8 1661.0,920.6 1662.0,921.8 1663.0,921.9 1664.0,921.8 1665.0,920.6 1666.0,921.9 1667.0,920.7 1668.0,921.9 1669.0,921.2 1670.0,920.2 1671.0,920.4 1672.0,921.4 1673.0,922.0 1674.0,921.5 1675.0,921.4 1676.0,920.5 1677.0,921.1 1678.0,921.9 1679.0,920.4 1680.0,920.5 1681.0,921.6 1682.0,921.0 1683.0,921.2 1684.0,920.9 1685.0,920.6 1686.0,920.3 1687.0,921.9 1688.0,921.0 1689.0,921.0 1690.0,921.5 1691.0,921.5 1692.0,920.6 1693.0,921.2 1694.0,921.2 1695.0,921.9 1696.0,920.8 1697.0,920.4 1698.0,920.9 1699.0,920.3 1700.0,920.6 1701.0,920.8 1702.0,921.5 1703.0,920.5 1704.0,920.3 1705.0,921.8 1706.0,920.6 1707.0,921.3 1708.0,921.5 1709.0,920.8 1710.0,921.9 1711.0,921.9 1712.0,921.5 1713.0,921.0 1714.0,921.0 1715.0,920.4 1716.0,920.5 1717.0,920.6 1718.0,921.3 1719.0,921.3 1720.0,921.6 1721.0,921.8 1722.0,920.7 1723.0,920.8 1724.0,920.5 1725.0,920.3 1726.0,920.3 1727.0,921.5 1728.0,920.6 1729.0,920.3 1730.0,921.1 1731.0,920.9 1732.0,921.8 1733.0,921.5 1734.0,920.5 1735.0,920.3 1736.0,920.9 1737.0,921.4 1738.0,920.8 1739.0,921.4 1740.0,921.6 1741.0,921.7 1742.0,921.5 1743.0,921.0 1744.0,921.0 1745.0,920.9 1746.0,921.9 1747.0,921.8 1748.0,921.8 1749.0,921.4 1750.0,920.8 1751.0,921.7 1751.0,934.7 1750.0,933.3 1749.0,933.7 1748.0,934.0 1747.0,934.2 1746.0,933.9 1745.0,933.8 1744.0,934.4 1743.0,933.2 1742.0,933.1 1741.0,934.4 1740.0,934.3 1739.0,933.8 1738.0,933.1 1737.0,934.7 1736.0,934.7 1735.0,933.1 1734.0,933.4 1733.0,934.6 1732.0,933.3 1731.0,934.0 1730.0,934.6 1729.0,933.2 1728.0,933.9 1727.0,933.6 1726.0,933.9 1725.0,934.8 1724.0,933.2 1723.0,933.2 1722.0,933.8 1721.0,933.8 1720.0,934.0 1719.0,934.2 1718.0,933.1 1717.0,934.8 1716.0,933.3 1715.0,933.6 1714.0,933.3 1713.0,933.6 1712.0,933.4 1711.0,934.5 1710.0,934.3 1709.0,933.3 1708.0,934.6 1707.0,934.2 1706.0,934.7 1705.0,933.2 1704.0,933.4 1703.0,933.3 1702.0,933.4 1701.0,934.2 1700.0,933.9 1699.0,934.0 1698.0,933.3 1697.0,933.1 1696.0,933.1 1695.0,933.8 1694.0,934.6 1693.0,934.7 1692.0,934.1 1691.0,934.3 1690.0,934.4 1689.0,933.6 1688.0,933.7 1687.0,933.6 1686.0,934.0 1685.0,933.4 1684.0,933.7 1683.0,933.9 1682.0,933.7 1681.0,933.1 1680.0,933.5 1679.0,934.4 1678.0,933.5 1677.0,933.8 1676.0,934.0 1675.0,933.5 1674.0,933.5 1673.0,934.8 1672.0,933.9 1671.0,933.3 1670.0,934.5 1669.0,934.1 1668.0,934.2 1667.0,933.9 1666.0,934.2 1665.0,934.0 1664.0,933.2 1663.0,934.5 1662.0,933.4 1661.0,934.4 1660.0,934.0 1659.0,933.1 1658.0,934.3 1657.0,934.5 1656.0,933.9 1655.0,934.6 1654.0,933.7 1653.0,933.8 1652.0,934.1 1651.0,934.4 1650.0,933.9 1649.0,933.7 1648.0,933.1 1647.0,934.2 1646.0,934.3 1645.0,933.3 1644.0,934.0 1643.0,933.6 1642.0,934.2 1641.0,933.5 1640.0,933.7 1639.0,933.1 1638.0,934.1 1637.0,933.8 1636.0,934.5 1635.0,933.2 1634.0,933.4 1633.0,933.5 1632.0,933.3 1631.0,934.0 1630.0,933.0 1629.0,933.6 1628.0,933.4 1627.0,933.7 1626.0,933.3 1625.0,934.4 1624.0,933.8 1623.0,934.8 1622.0,933.2 1621.0,933.9 1620.0,933.6 1619.0,933.5 1618.0,933.2 1617.0,934.5 1616.0,933.1 1615.0,934.6 1614.0,934.2 1613.0,934.5 1612.0,933.4 1611.0,934.0 1610.0,934.0 1609.0,933.3 1608.0,933.9 1607.0,934.3 1606.0,934.6 1605.0,934.1 1604.0,934.0 1603.0,933.6 1602.0,934.1 1601.0,933.7 1600.0,933.7 1599.0,934.1 1598.0,934.8 1597.0,933.9 1596.0,934.3 1595.0,934.8 1594.0,934.0 1593.0,933.6 1592.0,933.1 1591.0,934.4 1590.0,933.2 1589.0,933.4 1588.0,934.1 1587.0,934.7 1586.0,933.0 1585.0,933.3 1584.0,933.7 1583.0,934.8 1582.0,933.6 1581.0,934.3 1580.0,934.8 1579.0,934.0 1578.0,934.2 1577.0,933.0 1576.0,934.0 1575.0,933.9 1574.0,933.1 1573.0,933.3 1572.0,934.3 1571.0,934.7 1570.0,933.6 1569.0,933.9 1568.0,933.2 1567.0,934.3 1566.0,934.2 1565.0,933.8 1564.0,933.9 1563.0,934.6 1562.0,934.8 1561.0,933.2 1560.0,933.4 1559.0,933.1 1558.0,934.4 1557.0,933.1 1556.0,934.6 1555.0,934.7 1554.0,933.2 1553.0,933.3 1552.0,934.3 1551.0,934.6 1550.0,934.8 1549.0,933.0 1548.0,934.8 1547.0,933.3 1546.0,934.4 1545.0,934.6 1544.0,934.6 1543.0,933.8 1542.0,934.2 1541.0,934.6 1540.0,933.6 1539.0,934.5 1538.0,933.5 1537.0,934.6 1536.0,934.0 1535.0,934.8 1534.0,934.2 1533.0,933.4 1532.0,933.8 1531.0,933.5 1530.0,934.1 1529.0,934.7 1528.0,934.0 1527.0,934.6 1526.0,934.2 1525.0,934.3 1524.0,934.6 1523.0,933.8 1522.0,933.6 1521.0,933.9 1520.0,933.4 1519.0,933.1 1518.0,934.7 1517.0,933.3 1516.0,933.7 1515.0,933.3 1514.0,933.9 1513.0,933.3 1512.0,933.2 1511.0,933.4 1510.0,933.7 1509.0,934.2 1508.0,933.0 1507.0,934.7 1506.0,933.5 1505.0,934.8 1504.0,933.6 1503.0,934.4 1502.0,933.5 1501.0,933.6 1500.0,934.2 1499.0,934.1 1498.0,933.8 1497.0,933.2 1496.0,933.3 1495.0,933.2 1494.0,934.3 1493.0,933.1 1492.0,934.0 1491.0,933.0 1490.0,933.5 1489.0,933.9 1488.0,934.1 1487.0,933.8 1486.0,933.6 1485.0,933.7 1484.0,934.4 1483.0,933.4 1482.0,934.2 1481.0,934.0 1480.0,933.3 1479.0,934.6 1478.0,933.2 1477.0,934.8 1476.0,933.4 1475.0,934.6 1474.0,933.4 1473.0,933.4 1472.0,933.5 1471.0,933.1 1470.0,933.5 1469.0,933.9 1468.0,934.6 1467.0,934.4 1466.0,934.8 1465.0,933.3 1464.0,934.1 1463.0,933.6 1462.0,934.0 1461.0,933.6 1460.0,933.1 1459.0,933.6 1458.0,933.8 1457.0,934.6 1456.0,933.3 1455.0,933.5 1454.0,933.7 1453.0,934.8 1452.0,933.6 1451.0,933.8 1450.0,933.7 1449.0,934.0 1448.0,934.4 1447.0,934.3 1446.0,934.6 1445.0,933.5 1444.0,934.2 1443.0,934.4 1442.0,934.4 1441.0,933.1 1440.0,934.8 1439.0,934.1 1438.0,933.9 1437.0,933.5 1436.0,933.3 1435.0,934.8 1434.0,933.1 1433.0,934.1 1432.0,933.7 1431.0,934.1 1430.0,933.7 1429.0,933.1 1428.0,934.7 1427.0,933.7 1426.0,934.2 1425.0,933.8 1424.0,933.4 1423.0,933.8 1422.0,934.5 1421.0,933.1 1420.0,934.6 1419.0,933.3 1418.0,933.1 1417.0,934.5 1416.0,934.0 1415.0,933.3 1414.0,934.3 1413.0,934.1 1412.0,934.5 1411.0,933.1 1410.0,934.1 1409.0,933.9 1408.0,933.6 1407.0,934.8 1406.0,934.5 1405.0,933.3 1404.0,933.2 1403.0,934.8 1402.0,933.8 1401.0,934.6 1400.0,934.5 1399.0,934.5 1398.0,934.7 1397.0,934.1 1396.0,934.2 1395.0,933.9 1394.0,933.7 1393.0,934.2 1392.0,933.8 1391.0,933.2 1390.0,933.4 1389.0,934.2 1388.0,933.5 1387.0,934.6 1386.0,934.5 1385.0,933.4 1384.0,934.5 1383.0,934.7 1382.0,933.3 1381.0,933.3 1380.0,934.1 1379.0,934.2 1378.0,934.2 1377.0,933.6 1376.0,933.4 1375.0,934.8 1374.0,934.2 1373.0,933.5 1372.0,933.9 1371.0,934.2 1370.0,934.3 1369.0,934.4 1368.0,934.0 1367.0,933.6 1366.0,934.8 1365.0,933.8 1364.0,934.1 1363.0,934.3 1362.0,934.4 1361.0,933.4 1360.0,934.4 1359.0,935.0 1358.0,934.9 1357.0,934.1 1356.0,933.5 1355.0,933.9 1354.0,934.1 1353.0,933.6 1352.0,934.8 1351.0,934.1 1350.0,934.1 1349.0,934.5 1348.0,934.1 1347.0,934.9 1346.0,933.4 1345.0,933.7 1344.0,933.5 1343.0,935.2 1342.0,933.7 1341.0,933.6 1340.0,934.0 1339.0,934.3 1338.0,935.2 1337.0,934.7 1336.0,934.6 1335.0,933.6 1334.0,935.0 1333.0,934.5 1332.0,934.1 1331.0,933.9 1330.0,934.9 1329.0,935.0 1328.0,935.2 1327.0,934.7 1326.0,934.1 1325.0,935.0 1324.0,933.9 1323.0,934.1 1322.0,935.3 1321.0,934.8 1320.0,933.7 1319.0,934.0 1318.0,934.6 1317.0,934.7 1316.0,935.0 1315.0,935.1 1314.0,933.8 1313.0,934.1 1312.0,934.7 1311.0,934.0 1310.0,935.1 1309.0,934.4 1308.0,934.3 1307.0,934.4 1306.0,935.4 1305.0,934.8 1304.0,935.2 1303.0,935.4 1302.0,935.5 1301.0,935.1 1300.0,935.7 1299.0,934.7 1298.0,934.9 1297.0,934.6 1296.0,935.4 1295.0,934.4 1294.0,934.6 1293.0,934.9 1292.0,934.7 1291.0,935.4 1290.0,935.3 1289.0,935.8 1288.0,934.5 1287.0,934.6 1286.0,935.4 1285.0,935.7 1284.0,935.3 1283.0,936.0 1282.0,935.8 1281.0,935.4 1280.0,934.8 1279.0,936.2 1278.0,935.4 1277.0,934.9 1276.0,936.5 1275.0,936.3 1274.0,935.3 1273.0,936.0 1272.0,935.1 1271.0,936.4 1270.0,935.1 1269.0,936.3 1268.0,935.6 1267.0,936.2 1266.0,935.6 1265.0,935.9 1264.0,936.0 1263.0,935.8 1262.0,935.5 1261.0,936.8 1260.0,937.2 1259.0,936.0 1258.0,936.3 1257.0,936.2 1256.0,937.0 1255.0,936.5 1254.0,937.2 1253.0,936.5 1252.0,937.6 1251.0,937.6 1250.0,937.0 1249.0,937.6 1248.0,936.8 1247.0,936.6 1246.0,937.4 1245.0,937.6 1244.0,937.9 1243.0,938.3 1242.0,937.0 1241.0,937.5 1240.0,938.2 1239.0,938.5 1238.0,938.2 1237.0,937.5 1236.0,937.8 1235.0,937.9 1234.0,938.7 1233.0,938.2 1232.0,938.0 1231.0,938.3 1230.0,939.7 1229.0,939.9 1228.0,939.6 1227.0,938.7 1226.0,940.0" fill="#f4f40a"/></g><g filter="url(#blur03)"><polyline points="577.0,924.0 577.8,912.5 578.5,900.9 578.9,889.4 579.2,877.8 579.3,866.2 579.6,854.7 580.0,843.1 580.7,831.6 581.5,820.0 582.4,808.5 583.0,797.0 583.4,785.4 583.6,773.9 583.8,762.3 584.0,750.8 584.5,739.2 585.2,727.6 586.1,716.1 586.9,704.5 587.5,693.0 587.9,681.5 588.1,669.9 588.2,658.4 588.5,646.8 589.0,635.2 589.8,623.7 590.6,612.1 591.4,600.6 592.0,589.0 592.4,577.5 592.5,566.0 592.7,554.4 593.0,542.9 593.6,531.3 594.3,519.8 595.2,508.2 595.9,496.6 596.5,485.1 596.8,473.6 597.0,462.0" fill="none" stroke="#b2b21e" stroke-width="1.7"/><polyline points="925.5,466.0 926.3,477.6 927.0,489.2 927.5,500.8 927.8,512.4 927.9,524.0 928.2,535.6 928.7,547.2 929.4,558.8 930.3,570.4 931.1,582.0 931.8,593.6 932.2,605.2 932.4,616.8 932.6,628.4 932.9,640.0 933.4,651.6 934.2,663.2 935.0,674.8 935.9,686.4 936.5,698.0 936.9,709.6 937.1,721.2 937.3,732.8 937.6,744.4 938.2,756.0 938.9,767.6 939.8,779.2 940.6,790.8 941.2,802.4 941.6,814.0 941.8,825.6 942.0,837.2 942.3,848.8 942.9,860.4 943.7,872.0 944.6,883.6 945.4,895.2 945.9,906.8 946.3,918.4 946.5,930.0" fill="none" stroke="#b2b21e" stroke-width="1.7"/><polyline points="1030.0,926.0 1030.8,914.4 1031.5,902.8 1032.0,891.2 1032.3,879.6 1032.4,868.0 1032.7,856.4 1033.2,844.8 1033.9,833.2 1034.8,821.6 1035.6,810.0 1036.3,798.4 1036.7,786.8 1036.9,775.2 1037.1,763.6 1037.4,752.0 1037.9,740.4 1038.7,728.8 1039.5,717.2 1040.4,705.6 1041.0,694.0 1041.4,682.4 1041.6,670.8 1041.8,659.2 1042.1,647.6 1042.7,636.0 1043.4,624.4 1044.3,612.8 1045.1,601.2 1045.7,589.6 1046.1,578.0 1046.3,566.4 1046.5,554.8 1046.8,543.2 1047.4,531.6 1048.2,520.0 1049.1,508.4 1049.9,496.8 1050.4,485.2 1050.8,473.6 1051.0,462.0" fill="none" stroke="#b2b21e" stroke-width="1.7"/><polyline points="1204.0,466.0 1204.9,477.6 1205.6,489.2 1206.1,500.8 1206.4,512.4 1206.6,524.0 1206.9,535.6 1207.4,547.2 1208.1,558.8 1209.0,570.4 1209.9,582.0 1210.5,593.6 1211.0,605.2 1211.3,616.8 1211.5,628.4 1211.8,640.0 1212.3,651.6 1213.1,663.2 1214.0,674.8 1214.8,686.4 1215.5,698.0 1215.9,709.6 1216.2,721.2 1216.4,732.8 1216.7,744.4 1217.3,756.0 1218.1,767.6 1219.0,779.2 1219.8,790.8 1220.4,802.4 1220.9,814.0 1221.1,825.6 1221.3,837.2 1221.7,848.8 1222.3,860.4 1223.1,872.0 1224.0,883.6 1224.8,895.2 1225.4,906.8 1225.8,918.4 1226.0,930.0" fill="none" stroke="#b2b21e" stroke-width="1.7"/></g><g filter="url(#blur05)"><polygon points="732.8,338.9 733.8,338.5 734.8,339.1 735.8,338.5 736.8,338.8 737.8,339.1 738.8,339.1 739.8,338.8 740.8,339.0 741.8,339.0 742.8,339.0 743.8,338.8 744.8,339.2 745.8,338.8 746.8,338.7 747.8,339.0 748.8,339.1 749.8,339.2 750.8,338.8 751.8,338.5 752.8,338.7 753.8,338.7 754.8,338.6 755.8,339.0 756.8,338.4 757.8,338.7 758.8,338.5 759.8,338.6 760.8,338.5 761.8,338.4 762.8,338.9 763.8,339.0 764.8,338.7 765.8,338.9 766.8,339.0 767.8,338.9 768.8,338.4 769.8,338.8 770.8,338.6 771.8,338.6 772.8,339.0 773.8,338.5 774.8,339.1 775.8,338.9 776.8,338.4 777.8,338.6 778.8,338.5 779.8,338.5 780.8,338.5 781.8,338.7 782.8,338.5 783.8,338.5 784.8,338.4 785.8,338.4 786.8,338.4 787.8,339.0 788.8,339.0 789.8,338.8 790.8,338.8 791.8,338.7 792.8,338.9 793.8,338.6 794.8,338.4 795.8,338.9 796.8,338.7 797.8,338.9 798.8,338.5 799.8,339.2 800.8,339.2 801.8,338.6 802.8,338.7 803.8,338.9 804.8,338.9 805.8,338.7 806.8,339.1 807.8,338.6 808.8,338.7 809.8,339.1 810.8,339.2 811.8,339.1 812.8,338.4 813.8,339.0 814.8,338.7 815.8,338.9 816.8,338.4 817.8,338.4 818.8,338.5 819.8,338.8 820.8,339.1 821.8,338.8 822.8,339.0 823.8,339.1 824.8,338.5 825.8,338.9 826.8,338.5 827.8,339.1 828.8,338.8 829.8,338.9 830.8,338.7 831.8,338.8 832.8,338.5 833.8,338.9 834.8,339.2 835.8,338.7 836.8,338.8 837.8,338.5 838.8,338.6 839.8,338.9 840.8,338.4 841.8,339.1 842.8,338.7 843.8,338.9 844.8,338.7 845.8,338.6 846.8,338.8 847.8,338.4 848.8,338.6 849.8,338.9 850.8,338.6 851.8,339.0 852.8,338.7 853.8,338.6 854.8,339.1 855.8,338.5 856.8,338.6 857.8,339.0 858.8,339.0 859.8,338.4 860.8,339.1 861.8,338.4 862.8,338.9 863.8,339.1 864.8,338.9 865.8,338.4 866.8,339.0 867.8,338.8 868.8,338.7 869.8,338.9 870.8,338.6 871.8,338.8 872.8,338.6 873.8,338.9 874.8,338.8 875.8,338.7 875.8,347.4 874.8,347.4 873.8,347.9 872.8,347.4 871.8,347.7 870.8,347.6 869.8,347.3 868.8,347.8 867.8,347.9 866.8,347.9 865.8,347.4 864.8,347.5 863.8,347.4 862.8,347.6 861.8,347.4 860.8,347.4 859.8,348.0 858.8,347.5 857.8,347.2 856.8,347.3 855.8,347.3 854.8,347.6 853.8,347.5 852.8,347.9 851.8,347.3 850.8,347.8 849.8,348.0 848.8,347.7 847.8,347.7 846.8,347.5 845.8,347.4 844.8,347.4 843.8,347.8 842.8,347.2 841.8,347.7 840.8,347.9 839.8,347.3 838.8,347.2 837.8,347.8 836.8,347.8 835.8,347.6 834.8,347.9 833.8,348.0 832.8,347.6 831.8,347.7 830.8,347.5 829.8,347.7 828.8,348.0 827.8,347.7 826.8,347.7 825.8,347.9 824.8,347.6 823.8,347.6 822.8,347.5 821.8,347.8 820.8,348.0 819.8,347.2 818.8,347.3 817.8,347.4 816.8,347.6 815.8,347.6 814.8,347.9 813.8,347.9 812.8,347.5 811.8,347.4 810.8,347.9 809.8,347.7 808.8,347.8 807.8,347.6 806.8,347.4 805.8,347.4 804.8,347.9 803.8,347.4 802.8,347.6 801.8,347.5 800.8,347.3 799.8,347.6 798.8,347.8 797.8,347.7 796.8,347.9 795.8,347.3 794.8,347.9 793.8,347.7 792.8,347.8 791.8,347.8 790.8,347.9 789.8,347.4 788.8,347.4 787.8,347.9 786.8,347.8 785.8,347.3 784.8,347.6 783.8,347.4 782.8,347.8 781.8,347.5 780.8,347.8 779.8,347.8 778.8,347.9 777.8,347.3 776.8,347.7 775.8,347.3 774.8,347.8 773.8,347.8 772.8,347.7 771.8,347.7 770.8,347.9 769.8,347.6 768.8,347.8 767.8,348.0 766.8,347.4 765.8,347.3 764.8,347.3 763.8,347.8 762.8,347.3 761.8,347.5 760.8,347.2 759.8,347.6 758.8,347.5 757.8,347.8 756.8,347.2 755.8,347.7 754.8,347.2 753.8,347.8 752.8,347.4 751.8,347.3 750.8,347.4 749.8,347.5 748.8,347.4 747.8,347.8 746.8,347.8 745.8,347.8 744.8,348.0 743.8,347.9 742.8,347.9 741.8,347.3 740.8,347.5 739.8,347.5 738.8,347.6 737.8,347.6 736.8,347.6 735.8,347.3 734.8,347.3 733.8,347.6 732.8,347.9" fill="#fbfb10"/><polygon points="881.0,131.0 882.0,130.9 883.0,131.3 884.0,131.4 885.0,131.5 886.0,131.0 887.0,131.3 888.0,131.5 889.0,131.1 890.0,131.1 891.0,131.0 892.0,130.8 893.0,131.3 894.0,131.0 895.0,131.5 896.0,131.2 897.0,131.1 898.0,131.5 899.0,131.5 900.0,131.2 901.0,131.1 902.0,131.3 903.0,131.4 904.0,131.0 905.0,131.5 906.0,131.0 907.0,130.9 908.0,131.0 909.0,131.1 910.0,131.5 911.0,131.0 912.0,131.4 913.0,131.1 914.0,131.4 915.0,131.4 916.0,131.1 917.0,131.0 918.0,131.0 919.0,130.9 920.0,131.6 921.0,131.5 922.0,131.6 923.0,131.2 924.0,131.6 925.0,131.5 926.0,131.1 927.0,131.3 928.0,131.4 929.0,131.4 930.0,131.0 931.0,131.6 932.0,131.6 933.0,131.3 934.0,131.1 935.0,131.1 936.0,131.2 937.0,131.4 938.0,130.8 939.0,130.8 940.0,130.8 941.0,131.2 942.0,131.2 943.0,131.0 944.0,131.3 945.0,131.3 946.0,131.4 947.0,131.2 948.0,131.4 949.0,131.4 950.0,131.2 951.0,130.8 952.0,130.8 953.0,131.0 954.0,131.5 955.0,131.6 956.0,131.0 957.0,131.4 958.0,131.5 959.0,130.8 960.0,131.6 961.0,131.3 962.0,131.0 962.0,140.0 961.0,140.3 960.0,139.7 959.0,139.8 958.0,140.1 957.0,139.9 956.0,140.1 955.0,140.3 954.0,139.8 953.0,140.2 952.0,140.3 951.0,140.2 950.0,140.2 949.0,139.8 948.0,140.2 947.0,140.0 946.0,140.2 945.0,139.8 944.0,139.8 943.0,140.0 942.0,140.1 941.0,139.7 940.0,139.7 939.0,139.9 938.0,140.2 937.0,140.3 936.0,140.1 935.0,139.9 934.0,140.2 933.0,139.7 932.0,140.0 931.0,140.2 930.0,140.0 929.0,140.3 928.0,140.2 927.0,140.1 926.0,139.9 925.0,139.8 924.0,140.3 923.0,140.2 922.0,140.0 921.0,139.8 920.0,140.1 919.0,139.9 918.0,139.7 917.0,139.9 916.0,140.4 915.0,139.7 914.0,139.8 913.0,140.3 912.0,139.7 911.0,140.1 910.0,140.2 909.0,140.3 908.0,140.3 907.0,140.3 906.0,140.0 905.0,140.1 904.0,140.3 903.0,140.3 902.0,140.1 901.0,140.1 900.0,140.3 899.0,139.9 898.0,139.9 897.0,140.3 896.0,140.0 895.0,140.3 894.0,139.9 893.0,139.9 892.0,140.2 891.0,139.9 890.0,140.2 889.0,140.4 888.0,139.8 887.0,140.2 886.0,140.1 885.0,140.0 884.0,139.8 883.0,140.4 882.0,140.1 881.0,139.6" fill="#fbfb10"/><polygon points="967.5,340.4 968.5,340.3 969.5,340.0 970.5,339.6 971.5,339.9 972.5,340.1 973.5,339.7 974.5,340.0 975.5,340.1 976.5,339.5 977.5,339.2 978.5,339.4 979.5,339.3 980.5,339.7 981.5,339.6 982.5,339.4 983.5,339.0 984.5,339.3 985.5,338.9 986.5,339.5 987.5,339.0 987.5,348.2 986.5,347.8 985.5,348.0 984.5,347.7 983.5,348.3 982.5,347.8 981.5,348.3 980.5,347.9 979.5,348.6 978.5,348.3 977.5,348.3 976.5,348.8 975.5,348.8 974.5,348.4 973.5,348.6 972.5,348.3 971.5,349.0 970.5,349.0 969.5,349.2 968.5,349.1 967.5,348.6" fill="#fbfb10"/><polygon points="994.0,129.4 995.0,129.7 996.0,129.1 997.0,129.8 998.0,129.8 999.0,129.6 1000.0,129.5 1001.0,129.7 1002.0,129.5 1003.0,129.7 1004.0,129.6 1005.0,129.9 1006.0,129.6 1007.0,130.1 1008.0,129.7 1009.0,130.1 1010.0,130.1 1011.0,129.7 1012.0,129.8 1013.0,130.3 1014.0,129.6 1015.0,130.4 1016.0,130.3 1017.0,130.3 1018.0,129.8 1019.0,129.8 1020.0,130.5 1021.0,130.0 1022.0,129.9 1023.0,130.5 1024.0,130.6 1025.0,130.6 1026.0,130.0 1027.0,130.8 1028.0,130.4 1029.0,130.4 1030.0,130.4 1031.0,130.8 1031.0,139.0 1030.0,139.5 1029.0,139.3 1028.0,139.5 1027.0,139.5 1026.0,139.5 1025.0,139.4 1024.0,139.1 1023.0,139.3 1022.0,139.2 1021.0,138.7 1020.0,138.6 1019.0,138.8 1018.0,139.0 1017.0,139.0 1016.0,139.2 1015.0,138.5 1014.0,139.0 1013.0,138.4 1012.0,138.9 1011.0,139.0 1010.0,138.6 1009.0,139.0 1008.0,138.3 1007.0,138.9 1006.0,138.5 1005.0,138.6 1004.0,138.7 1003.0,138.4 1002.0,138.1 1001.0,138.1 1000.0,138.5 999.0,138.4 998.0,138.1 997.0,138.4 996.0,138.2 995.0,138.0 994.0,138.3" fill="#fbfb10"/><polygon points="1037.3,340.1 1038.3,340.1 1039.3,339.8 1040.3,339.6 1041.3,339.9 1042.3,339.6 1043.3,339.8 1044.3,339.3 1045.3,339.7 1046.3,339.4 1047.3,339.2 1048.3,339.6 1049.3,339.2 1050.3,339.3 1051.3,339.1 1052.3,339.6 1053.3,339.1 1054.3,339.2 1055.3,339.3 1056.3,339.1 1057.3,339.0 1058.3,338.8 1059.3,338.9 1060.3,338.9 1061.3,339.1 1062.3,339.3 1063.3,339.1 1064.3,339.2 1065.3,339.1 1066.3,339.3 1067.3,338.5 1068.3,338.6 1069.3,338.6 1070.3,338.7 1071.3,339.1 1072.3,339.2 1073.3,338.5 1074.3,339.0 1075.3,338.6 1076.3,338.6 1077.3,339.1 1078.3,338.9 1079.3,338.9 1080.3,338.4 1081.3,338.7 1082.3,338.7 1083.3,338.8 1084.3,338.6 1085.3,339.1 1086.3,338.9 1087.3,339.1 1088.3,338.5 1089.3,339.0 1090.3,338.6 1091.3,338.5 1092.3,338.9 1093.3,339.1 1094.3,338.9 1095.3,338.3 1096.3,338.6 1097.3,338.6 1098.3,338.8 1099.3,339.0 1100.3,338.8 1101.3,339.0 1102.3,338.3 1103.3,338.8 1104.3,338.9 1105.3,338.8 1106.3,338.5 1107.3,338.5 1108.3,338.3 1109.3,338.4 1110.3,338.4 1111.3,338.4 1112.3,338.5 1113.3,339.0 1114.3,338.3 1115.3,338.5 1116.3,338.5 1117.3,338.9 1118.3,338.2 1119.3,338.5 1120.3,338.8 1121.3,339.0 1122.3,338.9 1123.3,338.7 1124.3,338.9 1125.3,338.8 1126.3,338.6 1127.3,338.8 1128.3,338.8 1129.3,338.4 1130.3,338.9 1131.3,338.7 1132.3,338.5 1133.3,338.3 1134.3,338.5 1135.3,338.8 1136.3,338.7 1137.3,338.6 1138.3,338.9 1139.3,338.6 1140.3,338.8 1141.3,338.9 1142.3,338.7 1143.3,338.3 1144.3,338.9 1145.3,338.4 1146.3,338.3 1147.3,338.3 1148.3,338.3 1149.3,338.8 1150.3,338.3 1151.3,338.9 1152.3,338.3 1153.3,338.4 1154.3,338.6 1155.3,338.8 1156.3,338.7 1157.3,338.2 1158.3,338.9 1159.3,338.5 1160.3,339.0 1161.3,338.4 1162.3,338.8 1163.3,338.5 1164.3,338.9 1165.3,338.2 1166.3,338.3 1167.3,338.3 1168.3,338.8 1168.3,347.5 1167.3,347.1 1166.3,347.3 1165.3,347.6 1164.3,347.6 1163.3,347.5 1162.3,347.4 1161.3,347.4 1160.3,347.4 1159.3,347.4 1158.3,347.0 1157.3,347.4 1156.3,347.1 1155.3,347.5 1154.3,347.3 1153.3,347.1 1152.3,347.4 1151.3,347.2 1150.3,347.2 1149.3,347.1 1148.3,347.4 1147.3,347.1 1146.3,347.8 1145.3,347.5 1144.3,347.2 1143.3,347.5 1142.3,347.4 1141.3,347.1 1140.3,347.4 1139.3,347.1 1138.3,347.1 1137.3,347.6 1136.3,347.1 1135.3,347.0 1134.3,347.7 1133.3,347.1 1132.3,347.4 1131.3,347.3 1130.3,347.2 1129.3,347.2 1128.3,347.3 1127.3,347.7 1126.3,347.1 1125.3,347.3 1124.3,347.6 1123.3,347.6 1122.3,347.8 1121.3,347.7 1120.3,347.1 1119.3,347.5 1118.3,347.3 1117.3,347.1 1116.3,347.2 1115.3,347.5 1114.3,347.2 1113.3,347.2 1112.3,347.3 1111.3,347.7 1110.3,347.2 1109.3,347.1 1108.3,347.3 1107.3,347.1 1106.3,347.4 1105.3,347.4 1104.3,347.1 1103.3,347.7 1102.3,347.6 1101.3,347.5 1100.3,347.2 1099.3,347.1 1098.3,347.1 1097.3,347.6 1096.3,347.6 1095.3,347.6 1094.3,347.3 1093.3,347.6 1092.3,347.3 1091.3,347.7 1090.3,347.7 1089.3,347.5 1088.3,347.9 1087.3,347.3 1086.3,347.9 1085.3,347.3 1084.3,347.9 1083.3,347.9 1082.3,347.9 1081.3,347.7 1080.3,347.3 1079.3,347.6 1078.3,347.7 1077.3,347.9 1076.3,347.6 1075.3,347.9 1074.3,347.9 1073.3,348.0 1072.3,347.4 1071.3,347.6 1070.3,347.5 1069.3,348.1 1068.3,347.9 1067.3,347.9 1066.3,347.7 1065.3,347.6 1064.3,347.6 1063.3,348.0 1062.3,348.2 1061.3,348.2 1060.3,348.2 1059.3,347.5 1058.3,348.2 1057.3,348.2 1056.3,348.3 1055.3,348.1 1054.3,348.0 1053.3,348.2 1052.3,347.8 1051.3,347.8 1050.3,348.6 1049.3,347.9 1048.3,348.1 1047.3,348.0 1046.3,348.6 1045.3,348.1 1044.3,348.5 1043.3,348.2 1042.3,348.3 1041.3,348.3 1040.3,348.9 1039.3,348.4 1038.3,348.4 1037.3,348.7" fill="#fbfb10"/></g><g filter="url(#blur03)"><polyline points="876.5,342.0 876.9,336.9 877.2,331.8 877.3,326.7 877.1,321.6 876.9,316.5 876.7,311.4 876.8,306.3 877.1,301.2 877.6,296.1 878.0,291.0 878.2,285.9 878.3,280.8 878.1,275.7 877.8,270.6 877.7,265.5 877.8,260.4 878.2,255.3 878.6,250.2 879.0,245.1 879.2,240.0 879.2,234.9 879.1,229.8 878.8,224.7 878.7,219.6 878.9,214.5 879.2,209.4 879.7,204.3 880.1,199.2 880.3,194.1 880.2,189.0 880.0,183.9 879.8,178.8 879.7,173.7 879.9,168.6 880.2,163.5 880.7,158.4 881.1,153.3 881.3,148.2 881.2,143.1 881.0,138.0" fill="none" stroke="#a8a81c" stroke-width="1.3"/><polyline points="962.0,138.0 962.5,143.1 962.8,148.2 962.8,153.4 962.7,158.5 962.5,163.6 962.4,168.8 962.5,173.9 962.8,179.0 963.3,184.1 963.7,189.2 964.0,194.4 964.1,199.5 963.9,204.6 963.7,209.8 963.6,214.9 963.7,220.0 964.1,225.1 964.6,230.2 965.0,235.4 965.2,240.5 965.3,245.6 965.1,250.8 964.9,255.9 964.8,261.0 965.0,266.1 965.3,271.2 965.8,276.4 966.3,281.5 966.5,286.6 966.5,291.8 966.3,296.9 966.1,302.0 966.1,307.1 966.2,312.2 966.6,317.4 967.1,322.5 967.5,327.6 967.7,332.8 967.7,337.9 967.5,343.0" fill="none" stroke="#a8a81c" stroke-width="1.3"/><polyline points="988.0,342.0 988.5,336.8 988.8,331.6 988.9,326.3 988.8,321.1 988.6,315.9 988.5,310.6 988.6,305.4 988.9,300.2 989.4,295.0 989.9,289.8 990.1,284.5 990.2,279.3 990.1,274.1 989.9,268.9 989.8,263.6 989.9,258.4 990.3,253.2 990.8,247.9 991.2,242.7 991.5,237.5 991.5,232.3 991.4,227.1 991.2,221.8 991.1,216.6 991.3,211.4 991.7,206.2 992.2,200.9 992.6,195.7 992.8,190.5 992.9,185.2 992.7,180.0 992.5,174.8 992.5,169.6 992.7,164.3 993.1,159.1 993.6,153.9 994.0,148.7 994.2,143.5 994.2,138.2 994.0,133.0" fill="none" stroke="#a8a81c" stroke-width="1.3"/><polyline points="1031.8,137.0 1032.3,142.2 1032.6,147.3 1032.6,152.5 1032.5,157.7 1032.3,162.9 1032.2,168.1 1032.3,173.2 1032.6,178.4 1033.1,183.6 1033.5,188.8 1033.8,193.9 1033.9,199.1 1033.7,204.3 1033.5,209.4 1033.4,214.6 1033.5,219.8 1033.9,225.0 1034.4,230.2 1034.8,235.3 1035.0,240.5 1035.1,245.7 1034.9,250.9 1034.7,256.0 1034.6,261.2 1034.8,266.4 1035.1,271.6 1035.6,276.7 1036.1,281.9 1036.3,287.1 1036.3,292.2 1036.1,297.4 1035.9,302.6 1035.9,307.8 1036.0,312.9 1036.4,318.1 1036.9,323.3 1037.3,328.5 1037.5,333.6 1037.5,338.8 1037.3,344.0" fill="none" stroke="#a8a81c" stroke-width="1.3"/></g><rect x="7.2" y="338.7" width="725.5999999999999" height="8.4" fill="#5b8fbc" filter="url(#blur1)"/><rect x="1168.8" y="338.7" width="582.4000000000001" height="8.4" fill="#5b8fbc" filter="url(#blur1)"/><path d="M6.7,105.7H1751.7M6.7,371.2H1751.7" stroke="#dcdcdc" stroke-width="1.3"/><path d="M7.2,105.7v4.5M7.2,371.2v-4.5M42.1,105.7v3.2M42.1,371.2v-3.2M77.0,105.7v3.2M77.0,371.2v-3.2M111.8,105.7v3.2M111.8,371.2v-3.2M146.7,105.7v3.2M146.7,371.2v-3.2M181.6,105.7v4.5M181.6,371.2v-4.5M216.5,105.7v3.2M216.5,371.2v-3.2M251.4,105.7v3.2M251.4,371.2v-3.2M286.2,105.7v3.2M286.2,371.2v-3.2M321.1,105.7v3.2M321.1,371.2v-3.2M356.0,105.7v4.5M356.0,371.2v-4.5M390.9,105.7v3.2M390.9,371.2v-3.2M425.8,105.7v3.2M425.8,371.2v-3.2M460.6,105.7v3.2M460.6,371.2v-3.2M495.5,105.7v3.2M495.5,371.2v-3.2M530.4,105.7v4.5M530.4,371.2v-4.5M565.3,105.7v3.2M565.3,371.2v-3.2M600.2,105.7v3.2M600.2,371.2v-3.2M635.0,105.7v3.2M635.0,371.2v-3.2M669.9,105.7v3.2M669.9,371.2v-3.2M704.8,105.7v4.5M704.8,371.2v-4.5M739.7,105.7v3.2M739.7,371.2v-3.2M774.6,105.7v3.2M774.6,371.2v-3.2M809.4,105.7v3.2M809.4,371.2v-3.2M844.3,105.7v3.2M844.3,371.2v-3.2M879.2,105.7v4.5M879.2,371.2v-4.5M914.1,105.7v3.2M914.1,371.2v-3.2M949.0,105.7v3.2M949.0,371.2v-3.2M983.8,105.7v3.2M983.8,371.2v-3.2M1018.7,105.7v3.2M1018.7,371.2v-3.2M1053.6,105.7v4.5M1053.6,371.2v-4.5M1088.5,105.7v3.2M1088.5,371.2v-3.2M1123.4,105.7v3.2M1123.4,371.2v-3.2M1158.2,105.7v3.2M1158.2,371.2v-3.2M1193.1,105.7v3.2M1193.1,371.2v-3.2M1228.0,105.7v4.5M1228.0,371.2v-4.5M1262.9,105.7v3.2M1262.9,371.2v-3.2M1297.8,105.7v3.2M1297.8,371.2v-3.2M1332.6,105.7v3.2M1332.6,371.2v-3.2M1367.5,105.7v3.2M1367.5,371.2v-3.2M1402.4,105.7v4.5M1402.4,371.2v-4.5M1437.3,105.7v3.2M1437.3,371.2v-3.2M1472.2,105.7v3.2M1472.2,371.2v-3.2M1507.0,105.7v3.2M1507.0,371.2v-3.2M1541.9,105.7v3.2M1541.9,371.2v-3.2M1576.8,105.7v4.5M1576.8,371.2v-4.5M1611.7,105.7v3.2M1611.7,371.2v-3.2M1646.6,105.7v3.2M1646.6,371.2v-3.2M1681.4,105.7v3.2M1681.4,371.2v-3.2M1716.3,105.7v3.2M1716.3,371.2v-3.2M1751.2,105.7v4.5M1751.2,371.2v-4.5" stroke="#bdbdbd" stroke-width="1"/><path d="M6.7,400.5H1751.7M6.7,990.3H1751.7" stroke="#dcdcdc" stroke-width="1.3"/><path d="M7.2,400.5v4.5M7.2,990.3v-4.5M42.1,400.5v3.2M42.1,990.3v-3.2M77.0,400.5v3.2M77.0,990.3v-3.2M111.8,400.5v3.2M111.8,990.3v-3.2M146.7,400.5v3.2M146.7,990.3v-3.2M181.6,400.5v4.5M181.6,990.3v-4.5M216.5,400.5v3.2M216.5,990.3v-3.2M251.4,400.5v3.2M251.4,990.3v-3.2M286.2,400.5v3.2M286.2,990.3v-3.2M321.1,400.5v3.2M321.1,990.3v-3.2M356.0,400.5v4.5M356.0,990.3v-4.5M390.9,400.5v3.2M390.9,990.3v-3.2M425.8,400.5v3.2M425.8,990.3v-3.2M460.6,400.5v3.2M460.6,990.3v-3.2M495.5,400.5v3.2M495.5,990.3v-3.2M530.4,400.5v4.5M530.4,990.3v-4.5M565.3,400.5v3.2M565.3,990.3v-3.2M600.2,400.5v3.2M600.2,990.3v-3.2M635.0,400.5v3.2M635.0,990.3v-3.2M669.9,400.5v3.2M669.9,990.3v-3.2M704.8,400.5v4.5M704.8,990.3v-4.5M739.7,400.5v3.2M739.7,990.3v-3.2M774.6,400.5v3.2M774.6,990.3v-3.2M809.4,400.5v3.2M809.4,990.3v-3.2M844.3,400.5v3.2M844.3,990.3v-3.2M879.2,400.5v4.5M879.2,990.3v-4.5M914.1,400.5v3.2M914.1,990.3v-3.2M949.0,400.5v3.2M949.0,990.3v-3.2M983.8,400.5v3.2M983.8,990.3v-3.2M1018.7,400.5v3.2M1018.7,990.3v-3.2M1053.6,400.5v4.5M1053.6,990.3v-4.5M1088.5,400.5v3.2M1088.5,990.3v-3.2M1123.4,400.5v3.2M1123.4,990.3v-3.2M1158.2,400.5v3.2M1158.2,990.3v-3.2M1193.1,400.5v3.2M1193.1,990.3v-3.2M1228.0,400.5v4.5M1228.0,990.3v-4.5M1262.9,400.5v3.2M1262.9,990.3v-3.2M1297.8,400.5v3.2M1297.8,990.3v-3.2M1332.6,400.5v3.2M1332.6,990.3v-3.2M1367.5,400.5v3.2M1367.5,990.3v-3.2M1402.4,400.5v4.5M1402.4,990.3v-4.5M1437.3,400.5v3.2M1437.3,990.3v-3.2M1472.2,400.5v3.2M1472.2,990.3v-3.2M1507.0,400.5v3.2M1507.0,990.3v-3.2M1541.9,400.5v3.2M1541.9,990.3v-3.2M1576.8,400.5v4.5M1576.8,990.3v-4.5M1611.7,400.5v3.2M1611.7,990.3v-3.2M1646.6,400.5v3.2M1646.6,990.3v-3.2M1681.4,400.5v3.2M1681.4,990.3v-3.2M1716.3,400.5v3.2M1716.3,990.3v-3.2M1751.2,400.5v4.5M1751.2,990.3v-4.5" stroke="#bdbdbd" stroke-width="1"/><path d="M875.8,107V370" stroke="#ff9650" stroke-width="1.6"/><path d="M585,401V990" stroke="#ff9650" stroke-width="2.2"/><path d="M963.2,107V370" stroke="#ffa07c" stroke-width="2" stroke-dasharray="8 2.5 2 2.5"/><path d="M933,401V990" stroke="#ffa07c" stroke-width="2.4" stroke-dasharray="8 2.5 2.5 2.5"/><path d="M868.5,106.5H890.0L878.8,117.5Z" fill="#111" stroke="#ffa56a" stroke-width="1"/><path d="M869.0,119H888.5V137L878.8,146L869.0,137Z" fill="#ff8a1c"/><text x="878.8" y="132" font-size="15.5" text-anchor="middle" fill="#1a1a1a">T</text><path d="M581.8,401.5H603.2L592.0,412.5Z" fill="#111" stroke="#ffa56a" stroke-width="1"/><path d="M582.2,414H601.8V433.3L592.0,441.8L582.2,433.3Z" fill="#ff8a1c"/><text x="592.0" y="428.3" font-size="15.5" text-anchor="middle" fill="#1a1a1a">T</text><text x="1741.5" y="146.125" font-size="16" text-anchor="end" fill="#5c8ee0" opacity="1">300mV</text><text x="1741.5" y="480.75" font-size="16" text-anchor="end" fill="#f6f63a" opacity="1">300mV</text><text x="1741.5" y="179.25" font-size="16" text-anchor="end" fill="#5c8ee0" opacity="1">200mV</text><text x="1741.5" y="554.5" font-size="16" text-anchor="end" fill="#f6f63a" opacity="1">200mV</text><text x="1741.5" y="212.375" font-size="16" text-anchor="end" fill="#5c8ee0" opacity="1">100mV</text><text x="1741.5" y="628.25" font-size="16" text-anchor="end" fill="#f6f63a" opacity="1">100mV</text><text x="1741.5" y="245.5" font-size="16" text-anchor="end" fill="#5c8ee0" opacity="1">0V</text><text x="1741.5" y="702.0" font-size="16" text-anchor="end" fill="#f6f63a" opacity="1">0V</text><text x="1741.5" y="278.625" font-size="16" text-anchor="end" fill="#5c8ee0" opacity="1">-100mV</text><text x="1741.5" y="775.75" font-size="16" text-anchor="end" fill="#f6f63a" opacity="1">-100mV</text><text x="1741.5" y="311.75" font-size="16" text-anchor="end" fill="#5c8ee0" opacity="1">-200mV</text><text x="1741.5" y="849.5" font-size="16" text-anchor="end" fill="#f6f63a" opacity="1">-200mV</text><path d="M1751.2,166H1728L1717,176L1728,186H1751.2Z" fill="#ff8a1c"/><text x="1737.5" y="181.5" font-size="15.5" text-anchor="middle" fill="#1a1a1a">T</text><path d="M1751.2,547H1728L1717,557L1728,567H1751.2Z" fill="#ff8a1c"/><text x="1737.5" y="562.5" font-size="15.5" text-anchor="middle" fill="#1a1a1a">T</text><text x="181.6" y="362" font-size="15.5" text-anchor="middle" fill="#5c8ee0" opacity="1">-80µs</text><text x="356.0" y="362" font-size="15.5" text-anchor="middle" fill="#5c8ee0" opacity="1">-60µs</text><text x="530.4" y="362" font-size="15.5" text-anchor="middle" fill="#5c8ee0" opacity="1">-40µs</text><text x="704.8" y="362" font-size="15.5" text-anchor="middle" fill="#5c8ee0" opacity="1">-20µs</text><text x="879.2" y="362" font-size="15.5" text-anchor="middle" fill="#ffa640" opacity="1">0s</text><text x="1053.6" y="362" font-size="15.5" text-anchor="middle" fill="#ffa640" opacity="1">20µs</text><text x="1228.0" y="362" font-size="15.5" text-anchor="middle" fill="#5c8ee0" opacity="1">40µs</text><text x="1402.4" y="362" font-size="15.5" text-anchor="middle" fill="#5c8ee0" opacity="1">60µs</text><text x="1576.8" y="362" font-size="15.5" text-anchor="middle" fill="#5c8ee0" opacity="1">80µs</text><text x="181.6" y="981" font-size="16" text-anchor="middle" fill="#ffa040" opacity="1">-11.8µs</text><text x="356.0" y="981" font-size="16" text-anchor="middle" fill="#ffa040" opacity="1">-6.8µs</text><text x="530.4" y="981" font-size="16" text-anchor="middle" fill="#ffa040" opacity="1">-1.8µs</text><text x="704.8" y="981" font-size="16" text-anchor="middle" fill="#ffa040" opacity="1">3.2µs</text><text x="879.2" y="981" font-size="16" text-anchor="middle" fill="#ffa040" opacity="1">8.2µs</text><text x="1053.6" y="981" font-size="16" text-anchor="middle" fill="#ffa040" opacity="1">13.2µs</text><text x="1228.0" y="981" font-size="16" text-anchor="middle" fill="#ffa040" opacity="1">18.2µs</text><text x="1402.4" y="981" font-size="16" text-anchor="middle" fill="#ffa040" opacity="1">23.2µs</text><text x="1576.8" y="981" font-size="16" text-anchor="middle" fill="#ffa040" opacity="1">28.2µs</text><path d="M8,228.9H31.7L40.8,238L31.7,247.1H8Z" fill="#ffff1e" stroke="#0c0c0c" stroke-width="1.5"/><text x="18.7" y="243.6" font-size="15.5" text-anchor="middle" fill="#111">1</text><path d="M8,685.9H31.7L40.8,695L31.7,704.1H8Z" fill="#ffff1e" stroke="#0c0c0c" stroke-width="1.5"/><text x="18.7" y="700.6" font-size="15.5" text-anchor="middle" fill="#111">1</text><rect x="7" y="372" width="1744.5" height="28" fill="#121212"/><text y="390.5" font-size="14" fill="#fff"><tspan x="749.3">延迟扫描</tspan><tspan x="817.3">时基: 5.00µs/div</tspan><tspan x="931.7">位移: 8.20µs</tspan></text><path d="M1727,377.5L1745.5,394.5M1745.5,377.5L1727,394.5" stroke="#fff" stroke-width="2"/><path d="M1704,957.5L1712.5,966L1704,974.5" fill="none" stroke="#fff" stroke-width="3"/><path d="M1713,956.2H1738M1715,966H1738M1713,975.8H1738" stroke="#fff" stroke-width="3.4"/></svg>
<div class="abs" style="left:1757.5px;top:73px;width:159px;height:921px;background:#000;border-radius:8px 8px 4px 4px"></div>
<div class="abs" style="left:1761.3px;top:76px;width:151.5px;height:35px;background:#4c575b;border-radius:6px 6px 0 0"></div>
<div class="abs" style="left:1761.3px;top:115px;width:151.5px;height:876px;background:#2f3a40;border-radius:0 0 4px 4px"></div>
<div class="t" style="left:1761.3px;width:151.5px;text-align:center;top:86px;font-size:15px">结果</div>
<svg class="abs" style="left:1757px;top:110px;font-family:'Liberation Sans','Noto Sans CJK SC',sans-serif" width="163" height="330" viewBox="1757 110 163 330"><path d="M1770.5,120.5 H1893.5 a5,5 0 0 1 5,5 V145.0 a5,5 0 0 0 5,5 H1903 a5,5 0 0 1 5,5 V262.0 a5,5 0 0 1 -5,5 H1770.5 a5,5 0 0 1 -5,-5 V125.5 a5,5 0 0 1 5,-5 Z" fill="#4c595e" stroke="none" stroke-width="0"/><rect x="1771.5" y="125.8" width="19" height="19" fill="#2d3a40" stroke="#5f6c72" stroke-width="0.8"/><path d="M1772.8,143.0 H1777.3 L1784.4,128.0 H1788.6" fill="none" stroke="#fff" stroke-width="1.2"/><path d="M1779.8,142.3h6" stroke="#41c79a" stroke-width="1.4" stroke-dasharray="2 1"/><text x="1797.5" y="141.7" font-size="16" fill="#fff">上升时间(<tspan fill="#f2f23a" font-weight="bold" font-size="14.5">C1</tspan>)</text><text x="1771.3" y="162.0" font-size="14.2" fill="#fff">Cur:</text><text x="1815.3" y="162.0" font-size="14.2" fill="#fff">469.40ns</text><text x="1771.3" y="182.0" font-size="14.2" fill="#fff">Avg:</text><text x="1815.3" y="182.0" font-size="14.2" fill="#fff">471.68ns</text><text x="1771.3" y="202.0" font-size="14.2" fill="#fff">Max:</text><text x="1815.3" y="202.0" font-size="14.2" fill="#fff">476.40ns</text><text x="1771.3" y="222.0" font-size="14.2" fill="#fff">Min:</text><text x="1815.3" y="222.0" font-size="14.2" fill="#fff">467.20ns</text><text x="1771.3" y="242.0" font-size="14.2" fill="#fff">Dev:</text><text x="1815.3" y="242.0" font-size="14.2" fill="#fff">2.5743ns</text><text x="1771.3" y="262.0" font-size="14.2" fill="#fff">Cnt:</text><text x="1815.3" y="262.0" font-size="14.2" fill="#fff">42</text><path d="M1885.8,257.7 L1890,251.6 Q1892.2,249.4 1894.4,251.6 L1898.6,257.7 Z" fill="#fff"/><path d="M1770.5,272.5 H1878.0 a5,5 0 0 1 5,5 V297.0 a5,5 0 0 0 5,5 H1903 a5,5 0 0 1 5,5 V413.0 a5,5 0 0 1 -5,5 H1770.5 a5,5 0 0 1 -5,-5 V277.5 a5,5 0 0 1 5,-5 Z" fill="#4c595e" stroke="#36b389" stroke-width="2"/><rect x="1771.5" y="277.8" width="19" height="19" fill="#2d3a40" stroke="#5f6c72" stroke-width="0.8"/><path d="M1773.0,291.8 H1777.0 V280.3 H1785.0 V291.8 H1789.0" fill="none" stroke="#fff" stroke-width="1.2"/><path d="M1775.5,294.3h11" stroke="#41c79a" stroke-width="1.2" stroke-dasharray="2 1.2"/><text x="1797.5" y="293.7" font-size="16" fill="#fff">正脉宽(<tspan fill="#f2f23a" font-weight="bold" font-size="14.5">C1</tspan>)</text><text x="1771.3" y="314.0" font-size="14.2" fill="#fff">Cur:</text><text x="1815.3" y="314.0" font-size="14.2" fill="#fff">9.9902us</text><text x="1771.3" y="334.0" font-size="14.2" fill="#fff">Avg:</text><text x="1815.3" y="334.0" font-size="14.2" fill="#fff">9.9894us</text><text x="1771.3" y="354.0" font-size="14.2" fill="#fff">Max:</text><text x="1815.3" y="354.0" font-size="14.2" fill="#fff">9.9954us</text><text x="1771.3" y="374.0" font-size="14.2" fill="#fff">Min:</text><text x="1815.3" y="374.0" font-size="14.2" fill="#fff">9.9826us</text><text x="1771.3" y="394.0" font-size="14.2" fill="#fff">Dev:</text><text x="1815.3" y="394.0" font-size="14.2" fill="#fff">5.8902ns</text><text x="1771.3" y="414.0" font-size="14.2" fill="#fff">Cnt:</text><text x="1815.3" y="414.0" font-size="14.2" fill="#fff">42</text><path d="M1885.8,409.7 L1890,403.6 Q1892.2,401.4 1894.4,403.6 L1898.6,409.7 Z" fill="#fff"/></svg>
<div class="bar" style="left:4px;top:998px;width:76px;height:78px"></div>
<div class="bar" style="left:83.3px;top:998px;width:650px;height:78px"></div>
<div class="bar" style="left:737.7px;top:998px;width:513.6px;height:78px"></div>
<div class="bar" style="left:1255.4px;top:998px;width:498.8px;height:78px"></div>
<div class="bar" style="left:1758.3px;top:998px;width:157.5px;height:78px"></div>
<svg class="abs" style="left:4px;top:998px" width="76" height="78" viewBox="4 998 76 78"><defs><linearGradient id="gg" x1="0" y1="0" x2="1" y2="1"><stop offset="0" stop-color="#f0f0f0"/><stop offset="0.3" stop-color="#bdbdbd"/><stop offset="0.5" stop-color="#8f8f8f"/><stop offset="0.75" stop-color="#d9d9d9"/><stop offset="1" stop-color="#9a9a9a"/></linearGradient><radialGradient id="gd" cx="0.5" cy="0.5" r="0.55"><stop offset="0" stop-color="#4a4747"/><stop offset="0.7" stop-color="#2c2a2a"/><stop offset="1" stop-color="#1a1818"/></radialGradient></defs><polygon points="76.8,1035.8 76.8,1034.6 76.7,1033.4 76.6,1032.2 76.5,1031.0 76.3,1029.9 76.1,1028.7 75.8,1027.5 75.5,1026.4 75.1,1025.2 74.7,1024.1 72.8,1023.6 70.2,1023.5 68.0,1023.4 67.3,1022.7 66.8,1021.8 66.3,1021.0 66.1,1020.0 67.0,1018.1 68.3,1015.7 68.7,1013.9 68.0,1012.9 67.2,1012.0 66.4,1011.2 65.5,1010.4 64.6,1009.6 63.7,1008.9 62.7,1008.1 61.7,1007.4 60.7,1006.8 59.7,1006.2 58.7,1005.6 57.6,1005.1 56.5,1004.6 55.4,1004.1 54.3,1003.7 53.2,1003.3 52.0,1002.9 50.9,1002.6 49.7,1002.3 48.5,1002.2 47.1,1003.5 45.8,1005.8 44.6,1007.6 43.6,1007.8 42.6,1007.8 41.6,1007.8 40.6,1007.6 39.4,1005.8 38.1,1003.5 36.7,1002.2 35.5,1002.3 34.3,1002.6 33.2,1002.9 32.0,1003.3 30.9,1003.7 29.8,1004.1 28.7,1004.6 27.6,1005.1 26.5,1005.6 25.5,1006.2 24.5,1006.8 23.5,1007.4 22.5,1008.1 21.5,1008.9 20.6,1009.6 19.7,1010.4 18.8,1011.2 18.0,1012.0 17.2,1012.9 16.5,1013.9 16.9,1015.7 18.2,1018.1 19.1,1020.0 18.9,1021.0 18.4,1021.8 17.9,1022.7 17.2,1023.4 15.0,1023.5 12.4,1023.6 10.5,1024.1 10.1,1025.2 9.7,1026.4 9.4,1027.5 9.1,1028.7 8.9,1029.9 8.7,1031.0 8.6,1032.2 8.5,1033.4 8.4,1034.6 8.4,1035.8 8.4,1037.0 8.5,1038.2 8.6,1039.4 8.7,1040.6 8.9,1041.7 9.1,1042.9 9.4,1044.1 9.7,1045.2 10.1,1046.4 10.5,1047.5 12.4,1048.0 15.0,1048.1 17.2,1048.2 17.9,1048.9 18.4,1049.8 18.9,1050.6 19.1,1051.6 18.2,1053.5 16.9,1055.9 16.5,1057.7 17.2,1058.7 18.0,1059.6 18.8,1060.4 19.7,1061.2 20.6,1062.0 21.5,1062.7 22.5,1063.5 23.5,1064.2 24.5,1064.8 25.5,1065.4 26.5,1066.0 27.6,1066.5 28.7,1067.0 29.8,1067.5 30.9,1067.9 32.0,1068.3 33.2,1068.7 34.3,1069.0 35.5,1069.3 36.7,1069.4 38.1,1068.1 39.4,1065.8 40.6,1064.0 41.6,1063.8 42.6,1063.8 43.6,1063.8 44.6,1064.0 45.8,1065.8 47.1,1068.1 48.5,1069.4 49.7,1069.3 50.9,1069.0 52.0,1068.7 53.2,1068.3 54.3,1067.9 55.4,1067.5 56.5,1067.0 57.6,1066.5 58.7,1066.0 59.7,1065.4 60.7,1064.8 61.7,1064.2 62.7,1063.5 63.7,1062.7 64.6,1062.0 65.5,1061.2 66.4,1060.4 67.2,1059.6 68.0,1058.7 68.7,1057.7 68.3,1055.9 67.0,1053.5 66.1,1051.6 66.3,1050.6 66.8,1049.8 67.3,1048.9 68.0,1048.2 70.2,1048.1 72.8,1048.0 74.7,1047.5 75.1,1046.4 75.5,1045.2 75.8,1044.1 76.1,1042.9 76.3,1041.7 76.5,1040.6 76.6,1039.4 76.7,1038.2 76.8,1037.0" fill="url(#gg)"/><polygon points="69.6,1035.8 69.6,1034.9 69.5,1033.9 69.5,1033.0 69.3,1032.0 69.2,1031.1 69.0,1030.2 68.8,1029.3 68.6,1028.4 68.2,1027.5 67.2,1026.8 65.6,1026.5 64.0,1026.3 62.8,1026.0 62.3,1025.3 61.9,1024.6 61.5,1024.0 61.2,1023.2 61.5,1022.0 62.2,1020.5 62.7,1019.0 62.6,1017.8 62.0,1017.0 61.4,1016.4 60.7,1015.7 60.0,1015.1 59.2,1014.5 58.5,1014.0 57.7,1013.4 56.9,1012.9 56.1,1012.4 55.3,1012.0 54.4,1011.5 53.6,1011.1 52.7,1010.8 51.8,1010.4 50.9,1010.1 50.0,1009.8 49.1,1009.6 48.2,1009.4 47.1,1010.0 46.1,1011.2 45.0,1012.5 44.2,1013.4 43.4,1013.5 42.6,1013.5 41.8,1013.5 41.0,1013.4 40.2,1012.5 39.1,1011.2 38.1,1010.0 37.0,1009.4 36.1,1009.6 35.2,1009.8 34.3,1010.1 33.4,1010.4 32.5,1010.8 31.6,1011.1 30.8,1011.5 29.9,1012.0 29.1,1012.4 28.3,1012.9 27.5,1013.4 26.7,1014.0 26.0,1014.5 25.2,1015.1 24.5,1015.7 23.8,1016.4 23.2,1017.0 22.6,1017.8 22.5,1019.0 23.0,1020.5 23.7,1022.0 24.0,1023.2 23.7,1024.0 23.3,1024.6 22.9,1025.3 22.4,1026.0 21.2,1026.3 19.6,1026.5 18.0,1026.8 17.0,1027.5 16.6,1028.4 16.4,1029.3 16.2,1030.2 16.0,1031.1 15.9,1032.0 15.7,1033.0 15.7,1033.9 15.6,1034.9 15.6,1035.8 15.6,1036.7 15.7,1037.7 15.7,1038.6 15.9,1039.6 16.0,1040.5 16.2,1041.4 16.4,1042.3 16.6,1043.2 17.0,1044.1 18.0,1044.8 19.6,1045.1 21.2,1045.3 22.4,1045.6 22.9,1046.3 23.3,1047.0 23.7,1047.6 24.0,1048.4 23.7,1049.6 23.0,1051.1 22.5,1052.6 22.6,1053.8 23.2,1054.6 23.8,1055.2 24.5,1055.9 25.2,1056.5 26.0,1057.1 26.7,1057.6 27.5,1058.2 28.3,1058.7 29.1,1059.2 29.9,1059.6 30.8,1060.1 31.6,1060.5 32.5,1060.8 33.4,1061.2 34.3,1061.5 35.2,1061.8 36.1,1062.0 37.0,1062.2 38.1,1061.6 39.1,1060.4 40.2,1059.1 41.0,1058.2 41.8,1058.1 42.6,1058.1 43.4,1058.1 44.2,1058.2 45.0,1059.1 46.1,1060.4 47.1,1061.6 48.2,1062.2 49.1,1062.0 50.0,1061.8 50.9,1061.5 51.8,1061.2 52.7,1060.8 53.6,1060.5 54.4,1060.1 55.3,1059.6 56.1,1059.2 56.9,1058.7 57.7,1058.2 58.5,1057.6 59.2,1057.1 60.0,1056.5 60.7,1055.9 61.4,1055.2 62.0,1054.6 62.6,1053.8 62.7,1052.6 62.2,1051.1 61.5,1049.6 61.2,1048.4 61.5,1047.6 61.9,1047.0 62.3,1046.3 62.8,1045.6 64.0,1045.3 65.6,1045.1 67.2,1044.8 68.2,1044.1 68.6,1043.2 68.8,1042.3 69.0,1041.4 69.2,1040.5 69.3,1039.6 69.5,1038.6 69.5,1037.7 69.6,1036.7" fill="url(#gd)"/><text x="43.1" y="1048.3999999999999" font-size="34.5" font-weight="bold" font-family="Liberation Sans, sans-serif" text-anchor="middle" fill="#353333" stroke="#c4c4c4" stroke-width="0.9" textLength="29" lengthAdjust="spacingAndGlyphs">R</text><path d="M33.6,1027.3h15M33.6,1037.8h12M33.6,1043.3h6" stroke="#a8a8a8" stroke-width="1" stroke-dasharray="1.6 1"/></svg>
<svg class="abs" style="left:80px;top:996px;font-family:'Liberation Sans','Noto Sans CJK SC',sans-serif" width="1680" height="84" viewBox="80 996 1680 84"><path d="M95.6,1001 H158.39999999999998 a5,5 0 0 1 5,5 V1010 H240.0 a5,5 0 0 1 5,5 V1067.5 a5,5 0 0 1 -5,5 H95.6 a5,5 0 0 1 -5,-5 V1006 a5,5 0 0 1 5,-5Z" fill="#4b585d" stroke="#ffff2a" stroke-width="2"/><path d="M163.39999999999998,1010 H240.0 a5,5 0 0 1 5,5 V1018 H163.39999999999998Z" fill="#ffff2a"/><path d="M91.6,1018 V1006 a4,4 0 0 1 4,-4 H158.39999999999998 a4,4 0 0 1 4,4 V1018Z" fill="#050404"/><text x="104.3" y="1016.4" font-size="14.5" fill="#f0f03c">CH1</text><text x="102.1" y="1040" font-size="18" fill="#f2f23a">100.00mV/</text><text x="102.1" y="1061.3" font-size="15" fill="#fff">0.00V</text><path d="M200.6,1030.2h14.5" stroke="#fff" stroke-width="1.6"/><path d="M200.6,1035.3h14.5" stroke="#fff" stroke-width="1.4" stroke-dasharray="3.2 1.4"/><text x="221.1" y="1040" font-size="18.5" fill="#fff">Ω</text><path d="M256.6,1001 H319.4 a5,5 0 0 1 5,5 V1010 H401.0 a5,5 0 0 1 5,5 V1067.5 a5,5 0 0 1 -5,5 H256.6 a5,5 0 0 1 -5,-5 V1006 a5,5 0 0 1 5,-5Z" fill="#333e44" stroke="#616e74" stroke-width="1.3"/><path d="M324.4,1010 H401.0 a5,5 0 0 1 5,5 V1018 H324.4Z" fill="#4d5a5f"/><path d="M252.6,1018 V1006 a4,4 0 0 1 4,-4 H319.4 a4,4 0 0 1 4,4 V1018Z" fill="#050404"/><text x="265.3" y="1016.4" font-size="14.5" fill="#a3adb1">CH2</text><text x="263.1" y="1040" font-size="18" fill="#9aa4a8">100.00mV/</text><text x="263.1" y="1061.3" font-size="15" fill="#9aa4a8">0.00V</text><path d="M361.6,1030.2h14.5" stroke="#9aa4a8" stroke-width="1.6"/><path d="M361.6,1035.3h14.5" stroke="#9aa4a8" stroke-width="1.4" stroke-dasharray="3.2 1.4"/><path d="M417.6,1001 H480.40000000000003 a5,5 0 0 1 5,5 V1010 H562.0 a5,5 0 0 1 5,5 V1067.5 a5,5 0 0 1 -5,5 H417.6 a5,5 0 0 1 -5,-5 V1006 a5,5 0 0 1 5,-5Z" fill="#333e44" stroke="#616e74" stroke-width="1.3"/><path d="M485.40000000000003,1010 H562.0 a5,5 0 0 1 5,5 V1018 H485.40000000000003Z" fill="#4d5a5f"/><path d="M413.6,1018 V1006 a4,4 0 0 1 4,-4 H480.40000000000003 a4,4 0 0 1 4,4 V1018Z" fill="#050404"/><text x="426.3" y="1016.4" font-size="14.5" fill="#a3adb1">CH3</text><text x="424.1" y="1040" font-size="18" fill="#9aa4a8">200.00mV/</text><text x="424.1" y="1061.3" font-size="15" fill="#9aa4a8">-95.51mV</text><path d="M522.6,1030.2h14.5" stroke="#9aa4a8" stroke-width="1.6"/><path d="M522.6,1035.3h14.5" stroke="#9aa4a8" stroke-width="1.4" stroke-dasharray="3.2 1.4"/><text x="543.1" y="1040" font-size="18.5" fill="#9aa4a8">Ω</text><path d="M578.6,1001 H641.4 a5,5 0 0 1 5,5 V1010 H723.0 a5,5 0 0 1 5,5 V1067.5 a5,5 0 0 1 -5,5 H578.6 a5,5 0 0 1 -5,-5 V1006 a5,5 0 0 1 5,-5Z" fill="#333e44" stroke="#616e74" stroke-width="1.3"/><path d="M646.4,1010 H723.0 a5,5 0 0 1 5,5 V1018 H646.4Z" fill="#4d5a5f"/><path d="M574.6,1018 V1006 a4,4 0 0 1 4,-4 H641.4 a4,4 0 0 1 4,4 V1018Z" fill="#050404"/><text x="587.3000000000001" y="1016.4" font-size="14.5" fill="#a3adb1">CH4</text><text x="585.1" y="1040" font-size="18" fill="#9aa4a8">100.00mV/</text><text x="585.1" y="1061.3" font-size="15" fill="#9aa4a8">0.00V</text><path d="M683.6,1030.2h14.5" stroke="#9aa4a8" stroke-width="1.6"/><path d="M683.6,1035.3h14.5" stroke="#9aa4a8" stroke-width="1.4" stroke-dasharray="3.2 1.4"/><path d="M798.0,1001 H858.5 a5,5 0 0 1 5,5 V1067.5 a5,5 0 0 1 -5,5 H749.5 a5,5 0 0 1 -5,-5 V1015 a5,5 0 0 1 5,-5 H793.0 V1006 a5,5 0 0 1 5,-5Z" fill="#333e44" stroke="#616e74" stroke-width="1.3"/><path d="M745.5,1018 V1015 a4,4 0 0 1 4,-4 H794.0 V1018Z" fill="#4d5a5f"/><path d="M794.0,1018 V1006 a4,4 0 0 1 4,-4 H858.5 a4,4 0 0 1 4,4 V1018Z" fill="#050404"/><text x="857.5" y="1016.8" font-size="15.6" fill="#a9b2b6" text-anchor="end">Math1</text><text x="752.5" y="1039.8" font-size="17.6" fill="#9aa4a8">23.98dB/</text><text x="752.5" y="1061.5" font-size="14.8" fill="#9aa4a8">FFT(CH1)</text><path d="M925.0,1001 H985.5 a5,5 0 0 1 5,5 V1067.5 a5,5 0 0 1 -5,5 H876.5 a5,5 0 0 1 -5,-5 V1015 a5,5 0 0 1 5,-5 H920.0 V1006 a5,5 0 0 1 5,-5Z" fill="#333e44" stroke="#616e74" stroke-width="1.3"/><path d="M872.5,1018 V1015 a4,4 0 0 1 4,-4 H921.0 V1018Z" fill="#4d5a5f"/><path d="M921.0,1018 V1006 a4,4 0 0 1 4,-4 H985.5 a4,4 0 0 1 4,4 V1018Z" fill="#050404"/><text x="984.5" y="1016.8" font-size="15.6" fill="#a9b2b6" text-anchor="end">Math2</text><text x="879.5" y="1039.8" font-size="17.6" fill="#9aa4a8">401.33mV/</text><text x="879.5" y="1061.5" font-size="14.8" fill="#9aa4a8">CH1+CH1</text><path d="M1052.0,1001 H1112.5 a5,5 0 0 1 5,5 V1067.5 a5,5 0 0 1 -5,5 H1003.5 a5,5 0 0 1 -5,-5 V1015 a5,5 0 0 1 5,-5 H1047.0 V1006 a5,5 0 0 1 5,-5Z" fill="#333e44" stroke="#616e74" stroke-width="1.3"/><path d="M999.5,1018 V1015 a4,4 0 0 1 4,-4 H1048.0 V1018Z" fill="#4d5a5f"/><path d="M1048.0,1018 V1006 a4,4 0 0 1 4,-4 H1112.5 a4,4 0 0 1 4,4 V1018Z" fill="#050404"/><text x="1111.5" y="1016.8" font-size="15.6" fill="#a9b2b6" text-anchor="end">Math3</text><text x="1006.5" y="1039.8" font-size="17.6" fill="#9aa4a8">500.00mV/</text><text x="1006.5" y="1061.5" font-size="14.8" fill="#9aa4a8">CH1+CH1</text><path d="M1179.0,1001 H1239.5 a5,5 0 0 1 5,5 V1067.5 a5,5 0 0 1 -5,5 H1130.5 a5,5 0 0 1 -5,-5 V1015 a5,5 0 0 1 5,-5 H1174.0 V1006 a5,5 0 0 1 5,-5Z" fill="#333e44" stroke="#616e74" stroke-width="1.3"/><path d="M1126.5,1018 V1015 a4,4 0 0 1 4,-4 H1175.0 V1018Z" fill="#4d5a5f"/><path d="M1175.0,1018 V1006 a4,4 0 0 1 4,-4 H1239.5 a4,4 0 0 1 4,4 V1018Z" fill="#050404"/><text x="1238.5" y="1016.8" font-size="15.6" fill="#a9b2b6" text-anchor="end">Math4</text><text x="1133.5" y="1039.8" font-size="17.6" fill="#9aa4a8">500.00mV/</text><text x="1133.5" y="1061.5" font-size="14.8" fill="#9aa4a8">CH1+CH1</text><path d="M1316.0,1001 H1376.5 a5,5 0 0 1 5,5 V1067.5 a5,5 0 0 1 -5,5 H1267.5 a5,5 0 0 1 -5,-5 V1015 a5,5 0 0 1 5,-5 H1311.0 V1006 a5,5 0 0 1 5,-5Z" fill="#333e44" stroke="#616e74" stroke-width="1.3"/><path d="M1263.5,1018 V1015 a4,4 0 0 1 4,-4 H1312.0 V1018Z" fill="#4d5a5f"/><path d="M1312.0,1018 V1006 a4,4 0 0 1 4,-4 H1376.5 a4,4 0 0 1 4,4 V1018Z" fill="#050404"/><text x="1375.5" y="1016.8" font-size="15.6" fill="#a9b2b6" text-anchor="end">RTSA</text><text x="1270.5" y="1039.8" font-size="17.6" fill="#9aa4a8">C: 500MHz</text><text x="1270.5" y="1061.5" font-size="15.6" fill="#9aa4a8">S: 20kHz</text></svg>
<div class="t" style="left:1811.5px;top:1006.5px;font-size:17.5px;font-weight:bold;font-style:italic;letter-spacing:-1.6px;color:#f2f2f2;transform:scaleX(0.88);transform-origin:0 0">LXI</div>
<svg class="abs" style="left:1840px;top:1003px" width="26" height="22" fill="none" stroke="#f0f0f0" stroke-width="1.1"><path d="M2.5,10.2 L10.5,2.8 L12.6,3.4 V17.2 L10.5,17.8 L2.5,11.2 Z"/><path d="M9.3,4.5v12" /><path d="M10.3,8.2q1.6,2.3 0,4.8"/><path d="M14.4,7.5l6.2,6.6M20.6,7.5l-6.2,6.6" stroke-width="1"/></svg>
<div class="t" style="left:1758.3px;width:157.5px;text-align:center;top:1034.4px;font-size:15.6px">19:02:37</div>
<div class="t" style="left:1758.3px;width:157.5px;text-align:center;top:1057.6px;font-size:15.6px;letter-spacing:0.65px">2024/08/01</div></div></body></html>
